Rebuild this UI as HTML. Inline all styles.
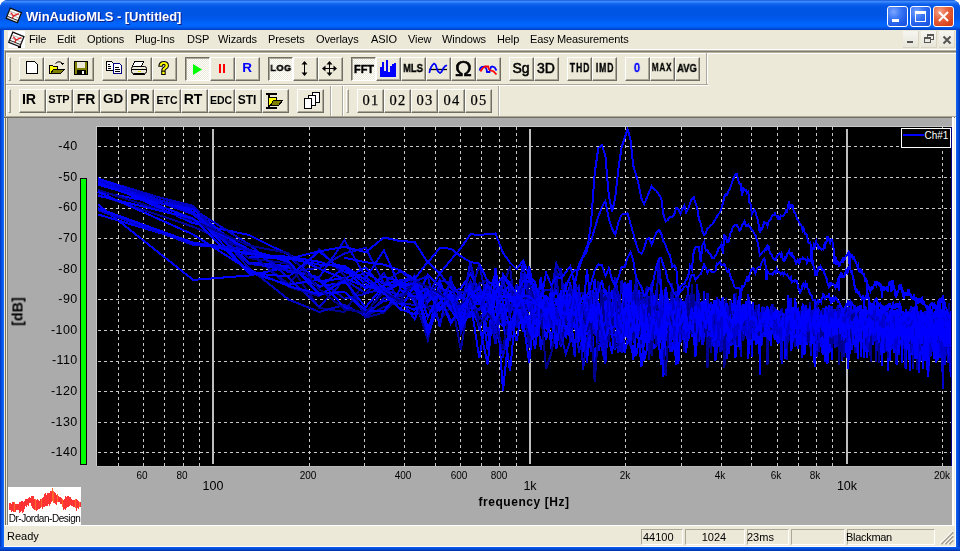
<!DOCTYPE html><html><head><meta charset="utf-8"><title>WinAudioMLS</title><style>
*{box-sizing:border-box}
div{will-change:transform}
body{margin:0;width:960px;height:551px;overflow:hidden;background:#fff;position:relative;font-family:"Liberation Sans",sans-serif;}
.a{position:absolute}
.btn{position:absolute;background:#ECE9D8;border-top:1px solid #fff;border-left:1px solid #fff;border-right:1px solid #716F64;border-bottom:1px solid #716F64;box-shadow:inset -1px -1px 0 #ACA899;}
.prs{position:absolute;border-top:1px solid #716F64;border-left:1px solid #716F64;border-right:1px solid #fff;border-bottom:1px solid #fff;box-shadow:inset 1px 1px 0 #ACA899;background-color:#F4F3EE;background-image:repeating-conic-gradient(#ECE9D8 0 25%,#FFFFFF 0 50%);background-size:2px 2px;}
.ic{position:absolute;left:0;top:0}
.mt{position:absolute;top:33px;font-size:11px;letter-spacing:-0.1px;color:#000;white-space:nowrap;line-height:13px}
.bt{position:absolute;left:0;right:0;text-align:center;font-weight:bold;color:#000;white-space:nowrap}
.yl{position:absolute;right:883px;font-size:12.5px;color:#000;line-height:12px;white-space:nowrap}
.xs{position:absolute;font-size:10px;color:#000;line-height:10px;white-space:nowrap;transform:translateX(-50%)}
.xb{position:absolute;font-size:12.5px;color:#000;line-height:12px;white-space:nowrap;transform:translateX(-50%);letter-spacing:0px}
.sp{position:absolute;top:529px;height:16px;border-top:1px solid #ACA899;border-left:1px solid #ACA899;border-right:1px solid #fff;border-bottom:1px solid #fff;font-size:11px;line-height:14px;white-space:nowrap}
</style></head><body>
<div class="a" style="left:0;top:0;width:960px;height:551px;background:#0042D6;border-radius:8px 8px 0 0;"></div>
<div class="a" style="left:0;top:24px;width:4px;height:527px;background:linear-gradient(to right,#0032B8,#0052E6 40%,#1A6CFF)"></div>
<div class="a" style="left:956px;top:24px;width:4px;height:527px;background:linear-gradient(to right,#1462F0,#0050E0 50%,#0032B0)"></div>
<div class="a" style="left:0;top:547px;width:960px;height:4px;background:linear-gradient(to bottom,#0A5AEE,#0046D0 60%,#0030A8)"></div>
<div class="a" style="left:0;top:0;width:960px;height:30px;border-radius:8px 8px 0 0;background:linear-gradient(to bottom,#0A3FC8 0px,#3D8DFF 1px,#3A8AFF 2px,#1D6EF4 3px,#0A5CEA 5px,#0055E5 8px,#0054E3 14px,#0058EC 19px,#0064FA 23px,#0066FF 25px,#0060F4 27px,#0048D0 29px,#003CC0 30px);"></div>
<svg class="a" style="left:5px;top:6px" width="18" height="18" viewBox="0 0 18 18"><g transform="rotate(22 9 9)"><rect x="3" y="4" width="12" height="9" fill="#fff" stroke="#111" stroke-width="1.3"/>
<path d="M3 13 L3 15 L15 15 L15 13" fill="#ddd" stroke="#111" stroke-width="1.2"/>
<line x1="3.5" y1="7" x2="14.5" y2="7" stroke="#aaa" stroke-width="0.8"/><line x1="3.5" y1="10" x2="14.5" y2="10" stroke="#aaa" stroke-width="0.8"/>
<path d="M5 8 L9 10 L13 6 M9 10 L8.5 13" stroke="#E02020" stroke-width="1.3" fill="none"/></g></svg>
<div class="a" style="left:26px;top:9px;font-size:13px;font-weight:bold;color:#fff;white-space:nowrap;line-height:15px;text-shadow:1px 1px 0 #0A1E8C;letter-spacing:-0.05px">WinAudioMLS - [Untitled]</div>
<div class="a" style="left:887px;top:6px;width:21px;height:21px;border:1px solid #fff;border-radius:3px;background:radial-gradient(circle at 30% 25%,#7BA6FF 0%,#3D78F5 35%,#1F5CE8 70%,#1A4FD8 100%)">
<div class="a" style="left:4px;top:12px;width:7px;height:3px;background:#fff"></div>
</div>
<div class="a" style="left:910px;top:6px;width:21px;height:21px;border:1px solid #fff;border-radius:3px;background:radial-gradient(circle at 30% 25%,#7BA6FF 0%,#3D78F5 35%,#1F5CE8 70%,#1A4FD8 100%)">
<div class="a" style="left:4px;top:4px;width:11px;height:11px;border:1px solid #fff;border-top:3px solid #fff"></div>
</div>
<div class="a" style="left:933px;top:6px;width:21px;height:21px;border:1px solid #fff;border-radius:3px;background:radial-gradient(circle at 30% 25%,#F6A38A 0%,#E7643F 40%,#D9461E 75%,#C93A14 100%)">
<svg class="a" style="left:0;top:0" width="19" height="19"><path d="M5 5 L14 14 M14 5 L5 14" stroke="#fff" stroke-width="2"/></svg>
</div>
<div class="a" style="left:4px;top:30px;width:952px;height:517px;background:#ECE9D8"></div>
<svg class="a" style="left:8px;top:31px" width="17" height="17" viewBox="0 0 17 17"><rect width="17" height="17" fill="#fff"/><g transform="translate(-0.5,-1)"><g transform="rotate(22 9 9)"><rect x="3" y="4" width="12" height="9" fill="#fff" stroke="#111" stroke-width="1.3"/>
<path d="M3 13 L3 15 L15 15 L15 13" fill="#ddd" stroke="#111" stroke-width="1.2"/>
<line x1="3.5" y1="7" x2="14.5" y2="7" stroke="#aaa" stroke-width="0.8"/><line x1="3.5" y1="10" x2="14.5" y2="10" stroke="#aaa" stroke-width="0.8"/>
<path d="M5 8 L9 10 L13 6 M9 10 L8.5 13" stroke="#E02020" stroke-width="1.3" fill="none"/></g></g><rect x="10" y="15" width="3" height="2" fill="#000"/></svg>
<div class="mt" style="left:28.6px">File</div>
<div class="mt" style="left:56.7px">Edit</div>
<div class="mt" style="left:86.9px">Options</div>
<div class="mt" style="left:135.2px">Plug-Ins</div>
<div class="mt" style="left:186.7px">DSP</div>
<div class="mt" style="left:217.9px">Wizards</div>
<div class="mt" style="left:267.9px">Presets</div>
<div class="mt" style="left:315.8px">Overlays</div>
<div class="mt" style="left:371.0px">ASIO</div>
<div class="mt" style="left:408.0px">View</div>
<div class="mt" style="left:442.1px">Windows</div>
<div class="mt" style="left:496.8px">Help</div>
<div class="mt" style="left:529.9px">Easy Measurements</div>
<div class="a" style="left:903px;top:31px;width:16px;height:17px;background:linear-gradient(#F6F5F0,#E8E6DA);border-right:1px solid #D8D5C4;border-bottom:1px solid #D8D5C4"></div>
<div class="a" style="left:907px;top:41px;width:6px;height:2px;background:#555"></div>
<div class="a" style="left:921px;top:31px;width:16px;height:17px;background:linear-gradient(#F6F5F0,#E8E6DA);border-right:1px solid #D8D5C4;border-bottom:1px solid #D8D5C4"></div>
<div class="a" style="left:927px;top:34px;width:7px;height:6px;border:1px solid #555;border-top:2px solid #555"></div>
<div class="a" style="left:924px;top:37px;width:7px;height:6px;border:1px solid #555;border-top:2px solid #555;background:#EEECE2"></div>
<div class="a" style="left:939px;top:31px;width:16px;height:17px;background:linear-gradient(#F6F5F0,#E8E6DA);border-right:1px solid #D8D5C4;border-bottom:1px solid #D8D5C4"></div>
<svg class="a" style="left:939px;top:31px" width="16" height="17"><path d="M4.5 5.5 L11.5 12.5 M11.5 5.5 L4.5 12.5" stroke="#555" stroke-width="2"/></svg>
<div class="a" style="left:4px;top:49px;width:952px;height:1px;background:#fff"></div>
<div class="a" style="left:4px;top:50px;width:952px;height:1px;background:#B5B2A4"></div>
<div class="a" style="left:4px;top:51px;width:952px;height:1px;background:#7F7C6E"></div>
<div class="a" style="left:4px;top:52px;width:952px;height:1px;background:#B5B2A4"></div>
<div class="a" style="left:6px;top:53px;width:950px;height:1px;background:#fff"></div>
<div class="a" style="left:4px;top:51px;width:1px;height:66px;background:#C8C2AE"></div>
<div class="a" style="left:5px;top:51px;width:1px;height:66px;background:#7F7C6E"></div>
<div class="a" style="left:6px;top:53px;width:1px;height:63px;background:#fff"></div>
<div class="a" style="left:6px;top:84px;width:702px;height:1px;background:#ACA899"></div>
<div class="a" style="left:6px;top:85px;width:703px;height:1px;background:#fff"></div>
<div class="a" style="left:706px;top:53px;width:1px;height:31px;background:#ACA899"></div>
<div class="a" style="left:707px;top:53px;width:1px;height:31px;background:#fff"></div>
<div class="a" style="left:330px;top:86px;width:1px;height:30px;background:#ACA899"></div>
<div class="a" style="left:331px;top:86px;width:1px;height:30px;background:#fff"></div>
<div class="a" style="left:342px;top:86px;width:1px;height:30px;background:#ACA899"></div>
<div class="a" style="left:343px;top:86px;width:1px;height:30px;background:#fff"></div>
<div class="a" style="left:498px;top:86px;width:1px;height:30px;background:#ACA899"></div>
<div class="a" style="left:499px;top:86px;width:1px;height:30px;background:#fff"></div>
<div class="a" style="left:4px;top:116px;width:952px;height:1px;background:#8F8C7E"></div>
<div class="a" style="left:4px;top:117px;width:952px;height:1px;background:#5A584E"></div>
<div class="a" style="left:8px;top:57px;width:3px;height:24px;border-left:1px solid #fff;border-top:1px solid #fff;border-right:1px solid #9D9A8C;border-bottom:1px solid #9D9A8C;background:#C9C6B8"></div>
<div class="a" style="left:8px;top:89px;width:3px;height:24px;border-left:1px solid #fff;border-top:1px solid #fff;border-right:1px solid #9D9A8C;border-bottom:1px solid #9D9A8C;background:#C9C6B8"></div>
<div class="a" style="left:346px;top:89px;width:3px;height:24px;border-left:1px solid #fff;border-top:1px solid #fff;border-right:1px solid #9D9A8C;border-bottom:1px solid #9D9A8C;background:#C9C6B8"></div>
<div class="btn" style="left:19px;top:57px;width:25px;height:24px"></div>
<div class="btn" style="left:44px;top:57px;width:25px;height:24px"></div>
<div class="btn" style="left:69px;top:57px;width:25px;height:24px"></div>
<div class="btn" style="left:102px;top:57px;width:25px;height:24px"></div>
<div class="btn" style="left:127px;top:57px;width:25px;height:24px"></div>
<div class="btn" style="left:152px;top:57px;width:25px;height:24px"></div>
<div class="prs" style="left:185px;top:57px;width:25px;height:24px"></div>
<div class="btn" style="left:210px;top:57px;width:25px;height:24px"></div>
<div class="btn" style="left:235px;top:57px;width:25px;height:24px"></div>
<div class="prs" style="left:268px;top:57px;width:25px;height:24px"></div>
<div class="btn" style="left:293px;top:57px;width:25px;height:24px"></div>
<div class="btn" style="left:318px;top:57px;width:25px;height:24px"></div>
<div class="prs" style="left:351px;top:57px;width:25px;height:24px"></div>
<div class="btn" style="left:376px;top:57px;width:25px;height:24px"></div>
<div class="btn" style="left:401px;top:57px;width:25px;height:24px"></div>
<div class="btn" style="left:426px;top:57px;width:25px;height:24px"></div>
<div class="btn" style="left:451px;top:57px;width:25px;height:24px"></div>
<div class="btn" style="left:476px;top:57px;width:25px;height:24px"></div>
<div class="btn" style="left:509px;top:57px;width:25px;height:24px"></div>
<div class="btn" style="left:534px;top:57px;width:25px;height:24px"></div>
<div class="btn" style="left:567px;top:57px;width:25px;height:24px"></div>
<div class="btn" style="left:592px;top:57px;width:25px;height:24px"></div>
<div class="btn" style="left:625px;top:57px;width:25px;height:24px"></div>
<div class="btn" style="left:650px;top:57px;width:25px;height:24px"></div>
<div class="btn" style="left:675px;top:57px;width:25px;height:24px"></div>
<div class="btn" style="left:19px;top:89px;width:27px;height:24px"></div>
<div class="btn" style="left:46px;top:89px;width:27px;height:24px"></div>
<div class="btn" style="left:73px;top:89px;width:27px;height:24px"></div>
<div class="btn" style="left:100px;top:89px;width:27px;height:24px"></div>
<div class="btn" style="left:127px;top:89px;width:27px;height:24px"></div>
<div class="btn" style="left:154px;top:89px;width:27px;height:24px"></div>
<div class="btn" style="left:181px;top:89px;width:27px;height:24px"></div>
<div class="btn" style="left:208px;top:89px;width:27px;height:24px"></div>
<div class="btn" style="left:235px;top:89px;width:27px;height:24px"></div>
<div class="btn" style="left:262px;top:89px;width:27px;height:24px"></div>
<div class="btn" style="left:297px;top:89px;width:27px;height:24px"></div>
<div class="btn" style="left:357px;top:89px;width:27px;height:24px"></div>
<div class="btn" style="left:384px;top:89px;width:27px;height:24px"></div>
<div class="btn" style="left:411px;top:89px;width:27px;height:24px"></div>
<div class="btn" style="left:438px;top:89px;width:27px;height:24px"></div>
<div class="btn" style="left:465px;top:89px;width:27px;height:24px"></div>
<svg class="a" style="left:0;top:0" width="960" height="120" viewBox="0 0 960 120" shape-rendering="crispEdges">
<path d="M26.5 61.5 H34.5 L37.5 64.5 V73.5 H26.5 Z" fill="#fff" stroke="#000"/><rect x="35" y="62" width="1" height="1" fill="#000"/>
<path d="M49.5 65.5 H52.5 L53.5 66.5 H57.5 V69.5 H64.5 L60.5 73.5 H49.5 Z" fill="#FFFF00" stroke="#000"/>
<path d="M50.5 73.5 L53.5 69.5 H64.5 L60.5 73.5 Z" fill="#808000" stroke="#000"/>
<path d="M55.5 63.5 Q59 60 62.5 63.5" fill="none" stroke="#000" shape-rendering="auto"/><path d="M61 63 H64 L62.5 65 Z" fill="#000"/>
<rect x="74.5" y="61.5" width="13" height="13" fill="#808000" stroke="#000"/><rect x="77" y="62" width="8" height="6" fill="#ECE9D8"/><rect x="77" y="70" width="9" height="5" fill="#000"/><rect x="82" y="71" width="2" height="3" fill="#fff"/>
<path d="M106.5 61.5 H111.5 L113.5 63.5 V70.5 H106.5 Z" fill="#fff" stroke="#000"/><path d="M108 64 H110 M108 66 H111 M108 68 H111" stroke="#000"/>
<path d="M113.5 63.5 H119.5 L121.5 65.5 V73.5 H113.5 Z" fill="#fff" stroke="#000080"/><path d="M115 67 H119 M115 69 H120 M115 71 H120" stroke="#000"/>
<path d="M134.5 61.5 H143.5 L141.5 66.5 H132.5 Z" fill="#fff" stroke="#000"/>
<rect x="131.5" y="66.5" width="15" height="7" rx="2" fill="#ECE9D8" stroke="#000" shape-rendering="auto"/><rect x="132" y="69" width="14" height="1" fill="#000"/><rect x="138" y="71" width="3" height="1" fill="#E0E000"/><rect x="133" y="74" width="12" height="1" fill="#000"/>
<text x="163.8" y="74.3" text-anchor="middle" font-family="Liberation Sans" font-weight="bold" font-size="16.5" fill="#FFFF00" stroke="#000" stroke-width="2.2" paint-order="stroke" shape-rendering="auto">?</text>
<path d="M193 64 L202 69.5 L193 75 Z" fill="#00FF00" shape-rendering="auto"/>
<rect x="219" y="64" width="2" height="9" fill="#FF0000"/><rect x="223" y="64" width="2" height="9" fill="#FF0000"/>
<path d="M304.5 62 V75" stroke="#000" stroke-width="1"/><path d="M301.5 64.5 L304.5 61 L307.5 64.5 Z M301.5 72.5 L304.5 76 L307.5 72.5 Z" fill="#000" shape-rendering="auto"/>
<path d="M329.5 62 V75 M323 68.5 H336" stroke="#000"/><path d="M326.5 64.5 L329.5 61 L332.5 64.5 Z M326.5 72.5 L329.5 76 L332.5 72.5 Z M325.5 65.5 L322 68.5 L325.5 71.5 Z M333.5 65.5 L337 68.5 L333.5 71.5 Z" fill="#000" shape-rendering="auto"/>
<path d="M380 77 V67 H382 V62 H384 V71 H386 V60 H388 V72 H390 V66 H392 V64 H394 V63 H396 V77 Z" fill="#0000FF"/>
<path d="M429 69.5 H447" stroke="#000" stroke-width="1.3" shape-rendering="auto"/><polyline points="429.3,73 430.2,69.5 431.2,67 432.5,65 434,63.5 435.5,64.5 436.5,67.5 437.5,70.5 438.5,72 440,73 441.5,72 442.5,70 443.5,68 445,66.2 447,65.3" fill="none" stroke="#0000FF" stroke-width="1.7" shape-rendering="auto"/>
<text x="463.3" y="75.8" text-anchor="middle" font-family="Liberation Sans" font-size="22.5" fill="#000" stroke="#000" stroke-width="0.6" shape-rendering="auto">Ω</text>
<polyline points="479.5,70.5 480.5,68 482,66.8 485.2,66.6 486.5,69.2 487,72 489.5,72 490.2,69.5 491,67 492.2,66.5 494.7,67.5 496.5,70.5" fill="none" stroke="#0000FF" stroke-width="1.8" shape-rendering="auto"/>
<polyline points="480.5,71.5 482.5,68.3 485.1,66.5 488.2,66.5 489,69.2 490.8,70.5 493.4,71.2 496.5,74.5" fill="none" stroke="#FF0000" stroke-width="1.8" shape-rendering="auto"/>
<rect x="266" y="93" width="11" height="2" fill="#000"/><rect x="266" y="107" width="11" height="2" fill="#000"/><rect x="268" y="95" width="2" height="12" fill="#000"/>
<path d="M268.5 97.5 H276.5 V100.5 H282.5 L278.5 105.5 H268.5 Z" fill="#FFFF00" stroke="#000"/><path d="M270.5 105.5 L273.5 100.5 H282.5 L278.5 105.5 Z" fill="#808000" stroke="#000"/>
<rect x="312.5" y="92.5" width="7" height="10" fill="#fff" stroke="#000"/><rect x="308.5" y="95.5" width="7" height="10" fill="#fff" stroke="#000"/><rect x="304.5" y="98.5" width="7" height="10" fill="#fff" stroke="#000" stroke-width="1"/>
</svg>
<div class="a" style="left:207.30px;top:60.57px;width:80px;text-align:center;font-family:'Liberation Sans',sans-serif;font-size:13.5px;line-height:13.5px;font-weight:bold;color:#0000FF;letter-spacing:0px;white-space:nowrap;">R</div>
<div class="a" style="left:241.00px;top:63.29px;width:80px;text-align:center;font-family:'Liberation Sans',sans-serif;font-size:9.5px;line-height:9.5px;font-weight:bold;color:#000;letter-spacing:0.6px;white-space:nowrap;transform:scaleX(0.95);-webkit-text-stroke:0.5px #000;">LOG</div>
<div class="a" style="left:323.90px;top:64.02px;width:80px;text-align:center;font-family:'Liberation Sans',sans-serif;font-size:11px;line-height:11px;font-weight:bold;color:#000;letter-spacing:0px;white-space:nowrap;-webkit-text-stroke:0.4px #000;">FFT</div>
<div class="a" style="left:372.90px;top:63.22px;width:80px;text-align:center;font-family:'Liberation Sans',sans-serif;font-size:11px;line-height:11px;font-weight:bold;color:#000;letter-spacing:0px;white-space:nowrap;transform:scaleX(0.86);-webkit-text-stroke:0.4px #000;">MLS</div>
<div class="a" style="left:480.60px;top:61.18px;width:80px;text-align:center;font-family:'Liberation Sans',sans-serif;font-size:14px;line-height:14px;font-weight:normal;color:#000;letter-spacing:0px;white-space:nowrap;-webkit-text-stroke:0.55px #000;">Sg</div>
<div class="a" style="left:506.20px;top:61.18px;width:80px;text-align:center;font-family:'Liberation Sans',sans-serif;font-size:14px;line-height:14px;font-weight:normal;color:#000;letter-spacing:0px;white-space:nowrap;-webkit-text-stroke:0.55px #000;">3D</div>
<div class="a" style="left:540.00px;top:62.34px;width:80px;text-align:center;font-family:'Liberation Sans',sans-serif;font-size:12px;line-height:12px;font-weight:bold;color:#000;letter-spacing:1.2px;white-space:nowrap;transform:scaleX(0.72);-webkit-text-stroke:0.3px #000;">THD</div>
<div class="a" style="left:564.90px;top:62.34px;width:80px;text-align:center;font-family:'Liberation Sans',sans-serif;font-size:12px;line-height:12px;font-weight:bold;color:#000;letter-spacing:1.2px;white-space:nowrap;transform:scaleX(0.72);-webkit-text-stroke:0.3px #000;">IMD</div>
<div class="a" style="left:597.10px;top:61.07px;width:80px;text-align:center;font-family:'Liberation Sans',sans-serif;font-size:13.5px;line-height:13.5px;font-weight:bold;color:#0000FF;letter-spacing:0px;white-space:nowrap;transform:scaleX(0.8);-webkit-text-stroke:0.4px #0000FF;">0</div>
<div class="a" style="left:622.30px;top:61.53px;width:80px;text-align:center;font-family:'Liberation Sans',sans-serif;font-size:11.5px;line-height:11.5px;font-weight:bold;color:#000;letter-spacing:1.0px;white-space:nowrap;transform:scaleX(0.72);-webkit-text-stroke:0.3px #000;">MAX</div>
<div class="a" style="left:646.90px;top:63.31px;width:80px;text-align:center;font-family:'Liberation Sans',sans-serif;font-size:10.5px;line-height:10.5px;font-weight:bold;color:#000;letter-spacing:0px;white-space:nowrap;transform:scaleX(0.9);-webkit-text-stroke:0.3px #000;">AVG</div>
<div class="a" style="left:-10.60px;top:92.24px;width:80px;text-align:center;font-family:'Liberation Sans',sans-serif;font-size:14.2px;line-height:14.2px;font-weight:bold;color:#000;letter-spacing:0px;white-space:nowrap;">IR</div>
<div class="a" style="left:19.00px;top:94.22px;width:80px;text-align:center;font-family:'Liberation Sans',sans-serif;font-size:11px;line-height:11px;font-weight:bold;color:#000;letter-spacing:0px;white-space:nowrap;">STP</div>
<div class="a" style="left:45.90px;top:92.28px;width:80px;text-align:center;font-family:'Liberation Sans',sans-serif;font-size:14px;line-height:14px;font-weight:bold;color:#000;letter-spacing:0px;white-space:nowrap;">FR</div>
<div class="a" style="left:73.10px;top:92.37px;width:80px;text-align:center;font-family:'Liberation Sans',sans-serif;font-size:13.5px;line-height:13.5px;font-weight:bold;color:#000;letter-spacing:0px;white-space:nowrap;">GD</div>
<div class="a" style="left:99.70px;top:92.24px;width:80px;text-align:center;font-family:'Liberation Sans',sans-serif;font-size:14.2px;line-height:14.2px;font-weight:bold;color:#000;letter-spacing:0px;white-space:nowrap;">PR</div>
<div class="a" style="left:127.20px;top:95.41px;width:80px;text-align:center;font-family:'Liberation Sans',sans-serif;font-size:10.5px;line-height:10.5px;font-weight:bold;color:#000;letter-spacing:0px;white-space:nowrap;">ETC</div>
<div class="a" style="left:153.30px;top:92.28px;width:80px;text-align:center;font-family:'Liberation Sans',sans-serif;font-size:14px;line-height:14px;font-weight:bold;color:#000;letter-spacing:0px;white-space:nowrap;">RT</div>
<div class="a" style="left:181.10px;top:95.41px;width:80px;text-align:center;font-family:'Liberation Sans',sans-serif;font-size:10.5px;line-height:10.5px;font-weight:bold;color:#000;letter-spacing:0px;white-space:nowrap;">EDC</div>
<div class="a" style="left:207.30px;top:94.34px;width:80px;text-align:center;font-family:'Liberation Sans',sans-serif;font-size:12px;line-height:12px;font-weight:bold;color:#000;letter-spacing:0px;white-space:nowrap;">STI</div>
<div class="a" style="left:331.30px;top:92.69px;width:80px;text-align:center;font-family:'Liberation Serif',serif;font-size:14.5px;line-height:14.5px;font-weight:normal;color:#000;letter-spacing:1.2px;white-space:nowrap;-webkit-text-stroke:0.25px #000;">01</div>
<div class="a" style="left:358.30px;top:92.69px;width:80px;text-align:center;font-family:'Liberation Serif',serif;font-size:14.5px;line-height:14.5px;font-weight:normal;color:#000;letter-spacing:1.2px;white-space:nowrap;-webkit-text-stroke:0.25px #000;">02</div>
<div class="a" style="left:385.30px;top:92.69px;width:80px;text-align:center;font-family:'Liberation Serif',serif;font-size:14.5px;line-height:14.5px;font-weight:normal;color:#000;letter-spacing:1.2px;white-space:nowrap;-webkit-text-stroke:0.25px #000;">03</div>
<div class="a" style="left:412.30px;top:92.69px;width:80px;text-align:center;font-family:'Liberation Serif',serif;font-size:14.5px;line-height:14.5px;font-weight:normal;color:#000;letter-spacing:1.2px;white-space:nowrap;-webkit-text-stroke:0.25px #000;">04</div>
<div class="a" style="left:439.30px;top:92.69px;width:80px;text-align:center;font-family:'Liberation Serif',serif;font-size:14.5px;line-height:14.5px;font-weight:normal;color:#000;letter-spacing:1.2px;white-space:nowrap;-webkit-text-stroke:0.25px #000;">05</div>
<div class="a" style="left:4px;top:116px;width:952px;height:1px;background:#ACA899"></div>
<div class="a" style="left:4px;top:117px;width:952px;height:1px;background:#716F64"></div>
<div class="a" style="left:5px;top:117px;width:1px;height:409px;background:#716F64"></div>
<div class="a" style="left:7px;top:118px;width:1px;height:407px;background:#808070"></div>
<div class="a" style="left:8px;top:118px;width:944px;height:407px;background:#ABABAB"></div>
<div class="a" style="left:952px;top:117px;width:2px;height:409px;background:#FFFFFF"></div>
<div class="a" style="left:4px;top:525px;width:952px;height:1px;background:#FFFFFF"></div>
<svg class="a" style="left:0;top:0" width="960" height="551" viewBox="0 0 960 551"><rect x="97" y="127" width="855" height="339" fill="#000"/><rect x="951" y="127" width="1" height="339" fill="#000080"/><rect x="96" y="126" width="856" height="1" fill="#C8C8C8"/><rect x="96" y="127" width="1" height="339" fill="#C8C8C8"/><rect x="97" y="466" width="855" height="1" fill="#B8B8B8"/><path d="M98 146.5 H951 M98 177.5 H951 M98 208.5 H951 M98 238.5 H951 M98 269.5 H951 M98 299.5 H951 M98 330.5 H951 M98 361.5 H951 M98 391.5 H951 M98 422.5 H951 M98 452.5 H951 M118.5 127 V466 M143.5 127 V466 M164.5 127 V466 M183.5 127 V466 M199.5 127 V466 M309.5 127 V466 M364.5 127 V466 M404.5 127 V466 M435.5 127 V466 M460.5 127 V466 M481.5 127 V466 M499.5 127 V466 M516.5 127 V466 M625.5 127 V466 M681.5 127 V466 M721.5 127 V466 M751.5 127 V466 M777.5 127 V466 M798.5 127 V466 M816.5 127 V466 M832.5 127 V466 M942.5 127 V466" stroke="#C8C8C8" stroke-width="1" stroke-dasharray="3 3" shape-rendering="crispEdges"/><rect x="212" y="129" width="2" height="335" fill="#BEBEBE" shape-rendering="crispEdges"/><rect x="529" y="129" width="2" height="335" fill="#BEBEBE" shape-rendering="crispEdges"/><rect x="846" y="129" width="2" height="335" fill="#BEBEBE" shape-rendering="crispEdges"/><defs><clipPath id="pc"><rect x="97" y="127" width="854" height="339"/></clipPath></defs><g clip-path="url(#pc)"><path d="M97.8 179.9 L193.2 219.5 L249.0 253.0 L288.6 284.2 L319.3 249.0 L344.4 275.5 L365.6 317.6 L383.9 312.5 L400.1 294.5 L414.6 293.4 L427.8 289.6 L439.7 308.1 L450.7 304.0 L460.9 314.1 L470.4 266.5 L479.3 300.0 L487.7 297.8 L495.5 286.1 L503.0 326.7 L510.0 281.5 L516.7 300.6 L523.1 301.7 L529.2 347.9 L535.1 293.5 L540.7 323.4 L546.1 325.4 L551.3 326.6 L556.3 268.2 L561.1 338.3 L565.8 299.8 L570.3 325.4 L574.7 315.7 L578.9 293.3 L583.0 292.7 L587.0 308.0 L590.9 298.9 L594.7 323.8 L598.3 281.1 L601.9 299.6 L605.4 332.3 L608.8 312.0 L612.1 303.6 L615.3 317.6 L618.5 310.7 L621.6 316.0 L624.6 297.1 L627.6 301.2 L630.5 322.1 L633.3 314.5 L636.1 310.4 L638.8 318.1 L641.5 309.0 L644.1 306.9 L646.7 286.2 L649.2 360.0 L651.7 315.5 L654.1 321.6 L656.5 328.7 L658.9 321.0 L661.2 311.0 L663.4 316.7 L665.7 302.5 L667.9 324.5 L670.0 309.9 L672.2 323.5 L674.3 317.8 L676.3 325.4 L678.4 322.4 L680.4 301.7 L682.4 321.8 L684.3 352.1 L686.2 317.3 L688.1 317.4 L690.0 320.4 L691.9 321.2 L693.7 330.1 L695.5 338.2 L697.3 325.5 L699.0 326.0 L700.7 339.5 L702.5 329.9 L704.1 342.4 L705.8 314.8 L707.5 341.7 L709.1 331.2 L710.7 310.9 L712.3 342.5 L713.9 346.7 L715.4 334.0 L716.9 309.7 L718.5 318.5 L720.0 351.6 L721.5 328.4 L722.9 320.1 L724.4 338.3 L725.8 355.7 L727.3 324.1 L728.7 327.2 L730.1 327.0 L731.4 330.3 L732.8 324.6 L734.2 327.0 L735.5 304.4 L736.8 331.6 L738.2 323.6 L739.5 316.9 L740.8 313.0 L742.0 333.6 L743.3 316.8 L744.6 312.9 L745.8 332.8 L747.0 315.3 L748.3 308.3 L749.5 343.5 L750.7 304.2 L751.9 318.5 L753.0 328.9 L754.2 340.9 L755.4 324.1 L756.5 321.7 L757.7 320.7 L758.8 320.4 L759.9 331.0 L761.0 331.5 L762.1 324.8 L763.2 327.8 L764.3 313.4 L765.4 322.2 L766.5 323.9 L767.5 315.5 L768.6 333.2 L769.6 331.9 L770.7 320.3 L771.7 325.1 L772.7 317.3 L773.8 317.1 L774.8 330.6 L775.8 316.4 L776.8 315.5 L777.7 326.5 L778.7 326.1 L779.7 337.6 L780.7 320.0 L781.6 307.8 L782.6 337.0 L783.5 327.0 L784.5 319.6 L785.4 329.6 L786.3 336.5 L787.2 360.2 L788.1 311.5 L789.1 318.8 L790.0 323.3 L790.9 328.4 L791.7 326.8 L792.6 338.9 L793.5 343.1 L794.4 323.7 L795.2 330.8 L796.1 325.7 L797.0 339.3 L797.8 326.8 L798.7 335.6 L799.5 314.8 L800.3 313.0 L801.2 341.2 L802.0 322.1 L802.8 316.0 L803.6 305.2 L804.5 321.6 L805.3 322.1 L806.1 334.6 L806.9 316.6 L807.7 321.5 L808.4 320.0 L809.2 328.2 L810.0 338.3 L810.8 319.8 L811.5 327.6 L812.3 321.1 L813.1 333.5 L813.8 316.0 L814.6 328.3 L815.3 332.0 L816.1 316.0 L816.8 318.3 L817.6 325.9 L818.3 320.9 L819.0 331.6 L819.8 320.5 L820.5 323.0 L821.2 315.8 L821.9 319.9 L822.6 334.7 L823.3 327.1 L824.0 340.2 L824.7 333.2 L825.4 310.5 L826.1 323.3 L826.8 329.1 L827.5 326.7 L828.2 323.1 L828.9 325.6 L829.5 330.5 L830.2 321.6 L830.9 326.1 L831.5 323.0 L832.2 327.5 L832.9 338.5 L833.5 327.1 L834.2 325.3 L834.8 325.6 L835.5 330.9 L836.1 328.8 L836.8 314.6 L837.4 346.8 L838.0 309.7 L838.7 320.0 L839.3 331.2 L839.9 319.7 L840.5 328.3 L841.2 328.1 L841.8 323.8 L842.4 319.8 L843.0 325.9 L843.6 357.3 L844.2 323.7 L844.8 338.9 L845.4 336.1 L846.0 321.8 L846.6 325.7 L847.2 333.3 L847.8 325.2 L848.4 341.5 L849.0 319.1 L849.6 335.8 L850.2 337.9 L850.7 320.9 L851.3 328.8 L851.9 327.5 L852.5 331.6 L853.0 331.6 L853.6 333.6 L854.2 318.1 L854.7 352.8 L855.3 306.8 L855.9 353.4 L856.4 349.0 L857.0 328.0 L857.5 319.9 L858.1 330.1 L858.6 325.2 L859.2 336.3 L859.7 330.5 L860.2 316.8 L860.8 328.0 L861.3 338.2 L861.8 335.1 L862.4 323.0 L862.9 320.4 L863.4 329.7 L864.0 329.4 L864.5 337.8 L865.0 329.4 L865.5 333.2 L866.0 335.8 L866.6 328.0 L867.1 326.4 L867.6 320.5 L868.1 317.0 L868.6 327.7 L869.1 330.1 L869.6 312.8 L870.1 320.2 L870.6 322.0 L871.1 328.6 L871.6 329.1 L872.1 336.1 L872.6 330.6 L873.1 329.9 L873.6 326.9 L874.1 325.2 L874.6 338.3 L875.1 323.6 L875.5 334.6 L876.0 331.6 L876.5 308.7 L877.0 327.9 L877.5 315.4 L877.9 317.0 L878.4 331.5 L878.9 322.9 L879.3 336.7 L879.8 333.5 L880.3 327.5 L880.8 306.2 L881.2 325.0 L881.7 326.9 L882.1 330.1 L882.6 330.1 L883.1 317.8 L883.5 321.7 L884.0 333.7 L884.4 321.4 L884.9 328.1 L885.3 342.2 L885.8 323.7 L886.2 337.6 L886.7 332.8 L887.1 324.9 L887.6 340.7 L888.0 346.5 L888.4 328.0 L888.9 344.8 L889.3 314.8 L889.7 318.6 L890.2 335.7 L890.6 331.0 L891.0 327.1 L891.5 330.6 L891.9 321.9 L892.3 324.4 L892.8 328.4 L893.2 323.4 L893.6 330.1 L894.0 324.7 L894.5 311.8 L894.9 336.5 L895.3 325.4 L895.7 333.7 L896.1 312.7 L896.5 334.0 L897.0 332.4 L897.4 322.1 L897.8 324.2 L898.2 318.3 L898.6 322.5 L899.0 336.0 L899.4 347.9 L899.8 331.8 L900.2 345.7 L900.6 335.8 L901.0 318.7 L901.4 323.8 L901.8 316.7 L902.2 321.4 L902.6 330.4 L903.0 330.7 L903.4 327.4 L903.8 322.1 L904.2 326.8 L904.6 335.2 L905.0 331.7 L905.4 335.4 L905.8 332.0 L906.1 343.9 L906.5 335.0 L906.9 340.5 L907.3 312.8 L907.7 339.9 L908.1 331.0 L908.4 340.9 L908.8 319.9 L909.2 317.5 L909.6 325.0 L910.0 323.0 L910.3 324.9 L910.7 328.0 L911.1 335.4 L911.5 338.1 L911.8 337.3 L912.2 324.9 L912.6 323.7 L912.9 324.4 L913.3 329.6 L913.7 337.6 L914.0 328.4 L914.4 322.9 L914.8 341.0 L915.1 331.7 L915.5 314.6 L915.8 338.5 L916.2 319.0 L916.6 329.9 L916.9 314.5 L917.3 332.0 L917.6 333.6 L918.0 328.1 L918.3 327.4 L918.7 326.4 L919.0 324.0 L919.4 339.1 L919.7 323.8 L920.1 321.9 L920.4 338.3 L920.8 328.6 L921.1 331.8 L921.5 360.8 L921.8 319.4 L922.2 339.2 L922.5 328.2 L922.9 330.9 L923.2 317.7 L923.5 330.3 L923.9 325.5 L924.2 335.2 L924.6 325.1 L924.9 332.1 L925.2 319.6 L925.6 315.4 L925.9 321.7 L926.2 324.5 L926.6 334.9 L926.9 318.5 L927.2 346.9 L927.6 322.7 L927.9 320.1 L928.2 326.9 L928.6 371.8 L928.9 330.8 L929.2 324.6 L929.5 317.3 L929.9 333.7 L930.2 329.1 L930.5 330.4 L930.8 332.6 L931.2 336.3 L931.5 311.3 L931.8 334.5 L932.1 315.0 L932.4 317.9 L932.8 321.0 L933.1 339.4 L933.4 319.1 L933.7 326.8 L934.0 323.0 L934.3 312.0 L934.7 319.9 L935.0 335.3 L935.3 337.9 L935.6 353.4 L935.9 320.6 L936.2 314.0 L936.5 329.0 L936.8 320.6 L937.2 326.7 L937.5 321.6 L937.8 322.8 L938.1 322.7 L938.4 336.8 L938.7 319.5 L939.0 333.0 L939.3 319.8 L939.6 318.0 L939.9 330.6 L940.2 341.6 L940.5 331.0 L940.8 331.1 L941.1 337.9 L941.4 332.9 L941.7 332.9 L942.0 320.9 L942.3 316.5 L942.6 315.0 L942.9 333.0 L943.2 329.7 L943.5 323.2 L943.8 336.9 L944.1 331.4 L944.4 311.6 L944.7 325.1 L944.9 331.7 L945.2 322.7 L945.5 326.5 L945.8 331.0 L946.1 332.9 L946.4 335.0 L946.7 337.6 L947.0 331.6 L947.3 326.6 L947.5 323.2 L947.8 319.2 L948.1 332.8 L948.4 317.9 L948.7 315.5 L949.0 312.1 L949.3 336.5 L949.5 321.8 L949.8 327.3 L950.1 336.2 L950.4 322.6 L950.7 333.6 L950.9 319.7 L951.2 332.7 L951.5 321.9 L951.8 331.2 L952.1 317.4 L952.3 334.7 L952.6 330.9 L952.9 317.7 L953.2 336.0 L953.4 324.5 L953.7 330.6 L954.0 336.2 L954.2 331.9 L954.5 324.0 L954.8 316.3 L955.1 329.8 L955.3 325.6 L955.6 332.5 L955.9 324.5" fill="none" stroke="#0000A0" stroke-width="2" stroke-linejoin="miter" shape-rendering="crispEdges"/><path d="M97.8 180.3 L193.2 223.2 L249.0 235.0 L288.6 254.6 L319.3 268.7 L344.4 279.0 L365.6 267.1 L383.9 289.8 L400.1 284.6 L414.6 282.7 L427.8 294.5 L439.7 298.6 L450.7 292.6 L460.9 288.2 L470.4 274.0 L479.3 290.5 L487.7 296.9 L495.5 273.0 L503.0 321.6 L510.0 316.0 L516.7 341.2 L523.1 302.3 L529.2 291.5 L535.1 300.7 L540.7 294.8 L546.1 323.3 L551.3 288.2 L556.3 304.2 L561.1 292.0 L565.8 310.2 L570.3 282.5 L574.7 325.4 L578.9 325.6 L583.0 309.1 L587.0 293.9 L590.9 312.5 L594.7 279.5 L598.3 316.4 L601.9 309.5 L605.4 289.2 L608.8 302.8 L612.1 290.0 L615.3 314.4 L618.5 315.4 L621.6 317.9 L624.6 324.3 L627.6 308.7 L630.5 343.2 L633.3 312.4 L636.1 298.1 L638.8 291.7 L641.5 305.4 L644.1 333.8 L646.7 319.5 L649.2 309.4 L651.7 292.5 L654.1 306.8 L656.5 305.3 L658.9 341.9 L661.2 324.9 L663.4 306.5 L665.7 287.0 L667.9 300.5 L670.0 310.7 L672.2 322.5 L674.3 303.2 L676.3 311.2 L678.4 315.9 L680.4 298.4 L682.4 310.6 L684.3 307.1 L686.2 305.3 L688.1 334.2 L690.0 321.6 L691.9 310.2 L693.7 336.4 L695.5 315.6 L697.3 335.4 L699.0 312.2 L700.7 312.9 L702.5 321.9 L704.1 322.2 L705.8 316.4 L707.5 317.2 L709.1 336.6 L710.7 326.8 L712.3 322.0 L713.9 326.0 L715.4 312.6 L716.9 309.7 L718.5 317.7 L720.0 329.4 L721.5 307.5 L722.9 312.3 L724.4 328.6 L725.8 334.3 L727.3 309.7 L728.7 316.7 L730.1 310.6 L731.4 319.8 L732.8 311.7 L734.2 308.0 L735.5 323.4 L736.8 325.8 L738.2 320.7 L739.5 323.7 L740.8 321.8 L742.0 340.3 L743.3 310.9 L744.6 327.6 L745.8 320.3 L747.0 323.1 L748.3 359.2 L749.5 327.7 L750.7 322.6 L751.9 323.8 L753.0 335.9 L754.2 325.1 L755.4 322.8 L756.5 318.1 L757.7 323.9 L758.8 316.7 L759.9 315.5 L761.0 327.9 L762.1 329.6 L763.2 327.5 L764.3 333.8 L765.4 324.6 L766.5 319.0 L767.5 323.9 L768.6 325.3 L769.6 317.9 L770.7 346.0 L771.7 321.0 L772.7 328.5 L773.8 310.8 L774.8 330.2 L775.8 319.0 L776.8 321.6 L777.7 331.0 L778.7 321.4 L779.7 321.8 L780.7 319.5 L781.6 329.0 L782.6 331.0 L783.5 330.0 L784.5 324.1 L785.4 359.2 L786.3 330.1 L787.2 319.0 L788.1 323.3 L789.1 333.7 L790.0 330.7 L790.9 319.3 L791.7 325.3 L792.6 327.2 L793.5 315.1 L794.4 340.7 L795.2 339.1 L796.1 314.2 L797.0 331.2 L797.8 333.2 L798.7 322.3 L799.5 321.1 L800.3 331.7 L801.2 320.6 L802.0 319.8 L802.8 322.4 L803.6 327.3 L804.5 354.6 L805.3 331.8 L806.1 326.2 L806.9 317.9 L807.7 333.8 L808.4 333.7 L809.2 330.4 L810.0 320.8 L810.8 329.4 L811.5 338.4 L812.3 324.9 L813.1 331.0 L813.8 333.7 L814.6 329.9 L815.3 332.5 L816.1 328.2 L816.8 323.0 L817.6 318.8 L818.3 323.9 L819.0 325.6 L819.8 339.7 L820.5 323.2 L821.2 316.9 L821.9 338.7 L822.6 340.9 L823.3 327.9 L824.0 327.4 L824.7 315.1 L825.4 326.4 L826.1 342.0 L826.8 337.9 L827.5 321.6 L828.2 326.1 L828.9 331.1 L829.5 353.4 L830.2 322.6 L830.9 323.4 L831.5 328.2 L832.2 332.7 L832.9 333.2 L833.5 316.0 L834.2 323.9 L834.8 330.3 L835.5 315.5 L836.1 328.4 L836.8 326.1 L837.4 332.2 L838.0 322.9 L838.7 329.3 L839.3 320.2 L839.9 320.2 L840.5 328.6 L841.2 326.4 L841.8 331.9 L842.4 322.4 L843.0 330.1 L843.6 328.5 L844.2 326.5 L844.8 332.2 L845.4 332.2 L846.0 331.8 L846.6 323.5 L847.2 322.8 L847.8 332.0 L848.4 354.0 L849.0 325.2 L849.6 335.8 L850.2 327.2 L850.7 318.9 L851.3 324.6 L851.9 331.1 L852.5 310.2 L853.0 341.6 L853.6 323.0 L854.2 323.5 L854.7 327.3 L855.3 336.2 L855.9 318.2 L856.4 322.9 L857.0 352.9 L857.5 323.1 L858.1 340.7 L858.6 323.4 L859.2 341.7 L859.7 313.1 L860.2 317.1 L860.8 354.6 L861.3 311.4 L861.8 333.8 L862.4 323.5 L862.9 335.4 L863.4 320.0 L864.0 322.7 L864.5 332.0 L865.0 328.6 L865.5 333.6 L866.0 330.3 L866.6 332.6 L867.1 357.7 L867.6 321.8 L868.1 332.5 L868.6 319.8 L869.1 323.4 L869.6 333.0 L870.1 320.3 L870.6 329.0 L871.1 338.4 L871.6 321.9 L872.1 336.6 L872.6 345.1 L873.1 342.8 L873.6 310.4 L874.1 336.4 L874.6 320.9 L875.1 317.0 L875.5 338.3 L876.0 331.9 L876.5 330.1 L877.0 339.4 L877.5 325.3 L877.9 327.3 L878.4 318.3 L878.9 318.0 L879.3 326.4 L879.8 343.3 L880.3 338.5 L880.8 316.1 L881.2 329.2 L881.7 320.9 L882.1 329.2 L882.6 319.8 L883.1 329.2 L883.5 339.3 L884.0 343.2 L884.4 353.0 L884.9 330.5 L885.3 330.1 L885.8 334.4 L886.2 343.7 L886.7 332.2 L887.1 330.6 L887.6 331.1 L888.0 334.4 L888.4 328.4 L888.9 327.5 L889.3 338.4 L889.7 324.6 L890.2 322.9 L890.6 337.5 L891.0 316.2 L891.5 325.7 L891.9 321.9 L892.3 326.4 L892.8 330.6 L893.2 339.6 L893.6 340.2 L894.0 353.4 L894.5 336.0 L894.9 333.1 L895.3 333.4 L895.7 327.2 L896.1 325.3 L896.5 326.3 L897.0 326.2 L897.4 332.1 L897.8 325.0 L898.2 329.6 L898.6 336.2 L899.0 322.4 L899.4 320.4 L899.8 336.1 L900.2 324.4 L900.6 335.8 L901.0 319.2 L901.4 332.4 L901.8 313.9 L902.2 332.8 L902.6 336.6 L903.0 329.5 L903.4 339.4 L903.8 334.5 L904.2 326.1 L904.6 332.3 L905.0 317.8 L905.4 332.6 L905.8 327.0 L906.1 335.3 L906.5 325.8 L906.9 337.3 L907.3 334.4 L907.7 323.0 L908.1 325.3 L908.4 332.6 L908.8 335.3 L909.2 318.5 L909.6 327.6 L910.0 335.7 L910.3 327.8 L910.7 308.7 L911.1 333.1 L911.5 324.0 L911.8 339.0 L912.2 321.5 L912.6 325.8 L912.9 324.7 L913.3 306.6 L913.7 324.5 L914.0 323.3 L914.4 323.8 L914.8 319.7 L915.1 329.6 L915.5 315.4 L915.8 356.3 L916.2 323.5 L916.6 328.0 L916.9 330.4 L917.3 333.0 L917.6 330.2 L918.0 333.3 L918.3 329.6 L918.7 321.6 L919.0 324.6 L919.4 329.3 L919.7 321.5 L920.1 338.8 L920.4 326.5 L920.8 317.6 L921.1 320.4 L921.5 337.2 L921.8 330.7 L922.2 337.8 L922.5 331.3 L922.9 330.7 L923.2 341.5 L923.5 325.9 L923.9 328.9 L924.2 338.8 L924.6 341.1 L924.9 324.3 L925.2 326.7 L925.6 333.8 L925.9 321.8 L926.2 320.2 L926.6 332.8 L926.9 334.7 L927.2 325.6 L927.6 335.1 L927.9 323.6 L928.2 337.2 L928.6 326.1 L928.9 320.9 L929.2 326.1 L929.5 329.0 L929.9 326.2 L930.2 335.2 L930.5 329.1 L930.8 321.9 L931.2 356.0 L931.5 322.6 L931.8 331.5 L932.1 333.0 L932.4 319.7 L932.8 338.9 L933.1 329.6 L933.4 324.8 L933.7 326.5 L934.0 343.3 L934.3 322.9 L934.7 331.1 L935.0 332.7 L935.3 332.9 L935.6 323.9 L935.9 331.4 L936.2 331.8 L936.5 336.6 L936.8 336.6 L937.2 312.1 L937.5 327.3 L937.8 317.3 L938.1 329.4 L938.4 312.9 L938.7 331.6 L939.0 341.7 L939.3 325.2 L939.6 333.4 L939.9 328.4 L940.2 326.4 L940.5 328.2 L940.8 333.5 L941.1 331.0 L941.4 320.5 L941.7 332.7 L942.0 338.1 L942.3 325.1 L942.6 323.8 L942.9 336.1 L943.2 338.2 L943.5 322.0 L943.8 332.7 L944.1 337.0 L944.4 330.2 L944.7 334.6 L944.9 332.6 L945.2 326.2 L945.5 337.5 L945.8 330.9 L946.1 336.4 L946.4 322.1 L946.7 335.6 L947.0 319.6 L947.3 331.2 L947.5 339.9 L947.8 326.6 L948.1 336.7 L948.4 337.3 L948.7 336.6 L949.0 338.5 L949.3 327.6 L949.5 324.8 L949.8 326.1 L950.1 333.2 L950.4 339.5 L950.7 319.2 L950.9 314.8 L951.2 319.1 L951.5 322.4 L951.8 340.3 L952.1 332.4 L952.3 344.4 L952.6 338.2 L952.9 342.5 L953.2 316.0 L953.4 322.4 L953.7 339.8 L954.0 320.7 L954.2 328.9 L954.5 330.2 L954.8 326.1 L955.1 331.5 L955.3 324.2 L955.6 322.1 L955.9 317.4" fill="none" stroke="#0000FF" stroke-width="2" stroke-linejoin="miter" shape-rendering="crispEdges"/><path d="M97.8 178.6 L193.2 207.8 L249.0 264.0 L288.6 267.8 L319.3 279.4 L344.4 298.7 L365.6 293.8 L383.9 272.9 L400.1 303.1 L414.6 305.0 L427.8 306.7 L439.7 304.2 L450.7 299.6 L460.9 306.8 L470.4 281.1 L479.3 298.8 L487.7 284.9 L495.5 326.4 L503.0 313.9 L510.0 305.3 L516.7 314.8 L523.1 303.7 L529.2 310.7 L535.1 303.4 L540.7 282.9 L546.1 308.0 L551.3 317.9 L556.3 282.1 L561.1 268.3 L565.8 316.7 L570.3 285.6 L574.7 302.6 L578.9 322.8 L583.0 320.4 L587.0 362.6 L590.9 310.6 L594.7 334.7 L598.3 306.7 L601.9 326.8 L605.4 308.5 L608.8 300.1 L612.1 306.1 L615.3 298.3 L618.5 319.8 L621.6 280.5 L624.6 304.0 L627.6 319.9 L630.5 309.3 L633.3 304.6 L636.1 278.3 L638.8 308.8 L641.5 292.6 L644.1 307.7 L646.7 289.4 L649.2 310.9 L651.7 282.4 L654.1 314.6 L656.5 299.7 L658.9 307.3 L661.2 327.8 L663.4 311.9 L665.7 303.4 L667.9 321.2 L670.0 304.5 L672.2 318.7 L674.3 309.4 L676.3 325.8 L678.4 295.8 L680.4 331.7 L682.4 326.2 L684.3 301.2 L686.2 314.5 L688.1 310.3 L690.0 319.6 L691.9 290.2 L693.7 323.5 L695.5 305.6 L697.3 303.2 L699.0 306.3 L700.7 305.1 L702.5 306.4 L704.1 322.3 L705.8 322.5 L707.5 293.2 L709.1 321.2 L710.7 316.6 L712.3 310.2 L713.9 310.8 L715.4 319.2 L716.9 333.3 L718.5 319.9 L720.0 316.8 L721.5 310.2 L722.9 326.9 L724.4 329.3 L725.8 325.3 L727.3 335.2 L728.7 318.8 L730.1 313.8 L731.4 331.5 L732.8 325.4 L734.2 321.2 L735.5 341.4 L736.8 330.0 L738.2 337.5 L739.5 323.8 L740.8 316.1 L742.0 323.5 L743.3 331.0 L744.6 330.6 L745.8 328.3 L747.0 317.2 L748.3 335.0 L749.5 319.8 L750.7 320.0 L751.9 329.1 L753.0 321.9 L754.2 329.2 L755.4 327.0 L756.5 320.5 L757.7 330.0 L758.8 328.1 L759.9 315.0 L761.0 318.2 L762.1 344.5 L763.2 325.2 L764.3 315.8 L765.4 325.4 L766.5 331.6 L767.5 332.1 L768.6 336.9 L769.6 324.1 L770.7 328.5 L771.7 324.2 L772.7 318.6 L773.8 337.6 L774.8 333.5 L775.8 325.5 L776.8 334.0 L777.7 324.7 L778.7 332.2 L779.7 325.3 L780.7 318.2 L781.6 337.1 L782.6 330.5 L783.5 337.6 L784.5 323.6 L785.4 329.6 L786.3 349.2 L787.2 307.9 L788.1 322.3 L789.1 335.1 L790.0 326.7 L790.9 327.1 L791.7 309.5 L792.6 326.6 L793.5 329.3 L794.4 337.0 L795.2 316.2 L796.1 316.1 L797.0 323.2 L797.8 338.1 L798.7 314.5 L799.5 328.6 L800.3 325.7 L801.2 323.4 L802.0 323.2 L802.8 313.7 L803.6 331.3 L804.5 325.3 L805.3 331.6 L806.1 334.0 L806.9 309.5 L807.7 332.0 L808.4 338.9 L809.2 337.9 L810.0 326.2 L810.8 315.4 L811.5 318.4 L812.3 331.7 L813.1 324.5 L813.8 319.4 L814.6 325.8 L815.3 321.9 L816.1 342.8 L816.8 327.5 L817.6 329.0 L818.3 321.3 L819.0 318.5 L819.8 318.7 L820.5 334.6 L821.2 328.0 L821.9 324.4 L822.6 314.7 L823.3 319.4 L824.0 312.1 L824.7 330.0 L825.4 326.1 L826.1 329.7 L826.8 312.3 L827.5 332.0 L828.2 322.0 L828.9 308.8 L829.5 328.6 L830.2 325.5 L830.9 312.4 L831.5 333.0 L832.2 319.6 L832.9 330.9 L833.5 333.4 L834.2 325.0 L834.8 327.9 L835.5 321.0 L836.1 323.7 L836.8 309.0 L837.4 312.3 L838.0 329.6 L838.7 327.4 L839.3 325.7 L839.9 318.8 L840.5 330.4 L841.2 319.8 L841.8 320.8 L842.4 335.5 L843.0 331.6 L843.6 320.6 L844.2 329.3 L844.8 320.4 L845.4 339.3 L846.0 321.2 L846.6 307.0 L847.2 336.3 L847.8 329.8 L848.4 334.9 L849.0 313.3 L849.6 327.4 L850.2 327.1 L850.7 328.6 L851.3 317.2 L851.9 347.5 L852.5 323.6 L853.0 330.2 L853.6 343.9 L854.2 309.9 L854.7 315.0 L855.3 320.8 L855.9 332.5 L856.4 318.1 L857.0 324.8 L857.5 334.7 L858.1 333.6 L858.6 328.4 L859.2 323.5 L859.7 331.5 L860.2 326.5 L860.8 315.2 L861.3 319.7 L861.8 315.8 L862.4 328.5 L862.9 311.7 L863.4 331.9 L864.0 330.5 L864.5 342.5 L865.0 333.4 L865.5 319.7 L866.0 322.5 L866.6 322.0 L867.1 332.2 L867.6 327.3 L868.1 326.1 L868.6 321.8 L869.1 320.5 L869.6 325.8 L870.1 321.1 L870.6 322.5 L871.1 338.0 L871.6 326.6 L872.1 327.8 L872.6 323.2 L873.1 314.6 L873.6 322.3 L874.1 329.9 L874.6 339.3 L875.1 321.3 L875.5 320.9 L876.0 326.8 L876.5 314.9 L877.0 310.5 L877.5 339.6 L877.9 320.6 L878.4 323.2 L878.9 320.4 L879.3 315.2 L879.8 337.2 L880.3 325.2 L880.8 314.8 L881.2 313.3 L881.7 321.3 L882.1 325.1 L882.6 325.7 L883.1 339.4 L883.5 336.1 L884.0 315.4 L884.4 325.6 L884.9 333.1 L885.3 337.5 L885.8 329.7 L886.2 317.8 L886.7 327.3 L887.1 340.9 L887.6 332.5 L888.0 330.8 L888.4 336.5 L888.9 325.8 L889.3 327.4 L889.7 338.3 L890.2 335.6 L890.6 327.8 L891.0 337.0 L891.5 326.0 L891.9 343.2 L892.3 331.3 L892.8 324.9 L893.2 338.2 L893.6 318.2 L894.0 338.8 L894.5 328.4 L894.9 336.6 L895.3 310.9 L895.7 344.3 L896.1 323.1 L896.5 325.7 L897.0 334.9 L897.4 329.0 L897.8 325.4 L898.2 344.5 L898.6 336.9 L899.0 321.5 L899.4 321.0 L899.8 331.6 L900.2 332.7 L900.6 331.0 L901.0 331.2 L901.4 333.5 L901.8 334.0 L902.2 337.9 L902.6 331.8 L903.0 333.3 L903.4 338.6 L903.8 312.3 L904.2 332.9 L904.6 333.6 L905.0 328.9 L905.4 331.7 L905.8 342.1 L906.1 325.2 L906.5 322.7 L906.9 331.0 L907.3 324.9 L907.7 319.4 L908.1 319.9 L908.4 326.7 L908.8 329.6 L909.2 317.3 L909.6 323.9 L910.0 330.7 L910.3 330.9 L910.7 332.1 L911.1 333.3 L911.5 315.4 L911.8 334.9 L912.2 339.2 L912.6 332.4 L912.9 329.7 L913.3 368.5 L913.7 330.3 L914.0 332.0 L914.4 326.1 L914.8 326.2 L915.1 321.8 L915.5 335.2 L915.8 332.3 L916.2 316.6 L916.6 322.9 L916.9 344.6 L917.3 327.2 L917.6 329.4 L918.0 342.5 L918.3 327.6 L918.7 360.4 L919.0 332.8 L919.4 328.2 L919.7 344.1 L920.1 340.6 L920.4 331.6 L920.8 325.7 L921.1 333.5 L921.5 334.2 L921.8 333.7 L922.2 327.6 L922.5 337.3 L922.9 325.1 L923.2 362.3 L923.5 324.3 L923.9 338.3 L924.2 324.9 L924.6 339.8 L924.9 322.9 L925.2 329.1 L925.6 332.2 L925.9 331.0 L926.2 344.4 L926.6 328.1 L926.9 324.1 L927.2 314.9 L927.6 317.3 L927.9 337.9 L928.2 323.3 L928.6 345.5 L928.9 338.8 L929.2 342.1 L929.5 347.5 L929.9 335.1 L930.2 333.0 L930.5 335.7 L930.8 335.9 L931.2 328.5 L931.5 323.7 L931.8 332.1 L932.1 324.3 L932.4 328.6 L932.8 335.8 L933.1 351.6 L933.4 331.7 L933.7 320.8 L934.0 332.3 L934.3 330.8 L934.7 323.1 L935.0 324.5 L935.3 335.0 L935.6 336.7 L935.9 320.3 L936.2 324.2 L936.5 321.1 L936.8 335.4 L937.2 335.1 L937.5 327.0 L937.8 320.8 L938.1 329.5 L938.4 332.7 L938.7 346.0 L939.0 328.6 L939.3 327.7 L939.6 338.1 L939.9 343.0 L940.2 331.4 L940.5 336.3 L940.8 333.2 L941.1 334.6 L941.4 329.2 L941.7 325.2 L942.0 339.0 L942.3 341.7 L942.6 351.2 L942.9 362.3 L943.2 339.0 L943.5 340.0 L943.8 338.1 L944.1 325.6 L944.4 325.0 L944.7 331.1 L944.9 338.9 L945.2 330.2 L945.5 340.0 L945.8 339.9 L946.1 327.6 L946.4 325.5 L946.7 330.7 L947.0 330.4 L947.3 329.4 L947.5 332.3 L947.8 341.3 L948.1 362.9 L948.4 336.5 L948.7 330.3 L949.0 330.1 L949.3 322.6 L949.5 328.7 L949.8 335.2 L950.1 334.8 L950.4 325.0 L950.7 322.8 L950.9 338.3 L951.2 340.4 L951.5 332.7 L951.8 331.2 L952.1 338.8 L952.3 317.3 L952.6 317.9 L952.9 325.8 L953.2 338.8 L953.4 322.5 L953.7 324.8 L954.0 331.3 L954.2 319.1 L954.5 338.4 L954.8 335.6 L955.1 329.5 L955.3 337.9 L955.6 326.9 L955.9 337.5" fill="none" stroke="#0000C0" stroke-width="2" stroke-linejoin="miter" shape-rendering="crispEdges"/><path d="M97.8 178.3 L193.2 211.9 L249.0 262.6 L288.6 266.2 L319.3 287.9 L344.4 267.2 L365.6 283.9 L383.9 293.8 L400.1 282.6 L414.6 302.3 L427.8 274.5 L439.7 286.5 L450.7 302.2 L460.9 297.5 L470.4 288.3 L479.3 301.6 L487.7 281.6 L495.5 320.8 L503.0 325.7 L510.0 298.6 L516.7 312.0 L523.1 311.7 L529.2 299.3 L535.1 335.3 L540.7 277.5 L546.1 310.9 L551.3 297.6 L556.3 326.1 L561.1 332.3 L565.8 313.4 L570.3 308.8 L574.7 298.5 L578.9 318.1 L583.0 324.3 L587.0 321.6 L590.9 325.9 L594.7 322.5 L598.3 292.9 L601.9 280.5 L605.4 297.2 L608.8 331.2 L612.1 320.9 L615.3 348.5 L618.5 342.6 L621.6 318.3 L624.6 352.5 L627.6 340.0 L630.5 325.9 L633.3 325.0 L636.1 334.1 L638.8 313.9 L641.5 332.6 L644.1 303.9 L646.7 327.6 L649.2 328.3 L651.7 323.6 L654.1 330.8 L656.5 344.0 L658.9 337.8 L661.2 322.7 L663.4 312.8 L665.7 321.1 L667.9 322.2 L670.0 327.3 L672.2 326.8 L674.3 331.6 L676.3 321.0 L678.4 316.9 L680.4 307.2 L682.4 324.1 L684.3 319.7 L686.2 304.2 L688.1 340.8 L690.0 330.6 L691.9 318.2 L693.7 323.0 L695.5 337.2 L697.3 333.5 L699.0 315.6 L700.7 331.4 L702.5 311.7 L704.1 332.5 L705.8 317.6 L707.5 347.7 L709.1 312.5 L710.7 328.3 L712.3 314.6 L713.9 341.1 L715.4 334.7 L716.9 322.3 L718.5 322.5 L720.0 326.5 L721.5 341.5 L722.9 330.4 L724.4 307.3 L725.8 332.3 L727.3 320.3 L728.7 324.4 L730.1 304.9 L731.4 300.4 L732.8 328.7 L734.2 317.4 L735.5 306.1 L736.8 339.7 L738.2 316.0 L739.5 307.3 L740.8 333.6 L742.0 324.0 L743.3 314.7 L744.6 336.2 L745.8 331.6 L747.0 323.0 L748.3 330.1 L749.5 313.1 L750.7 318.9 L751.9 357.2 L753.0 324.6 L754.2 330.2 L755.4 321.3 L756.5 323.8 L757.7 338.8 L758.8 304.3 L759.9 319.6 L761.0 323.5 L762.1 322.0 L763.2 330.8 L764.3 325.0 L765.4 336.3 L766.5 322.0 L767.5 323.5 L768.6 333.6 L769.6 330.3 L770.7 326.3 L771.7 309.2 L772.7 317.5 L773.8 319.6 L774.8 323.0 L775.8 317.3 L776.8 323.1 L777.7 321.5 L778.7 330.5 L779.7 321.0 L780.7 322.3 L781.6 312.1 L782.6 330.8 L783.5 324.8 L784.5 333.7 L785.4 323.6 L786.3 322.0 L787.2 309.0 L788.1 312.0 L789.1 327.4 L790.0 319.6 L790.9 325.6 L791.7 314.9 L792.6 336.6 L793.5 332.0 L794.4 319.0 L795.2 326.5 L796.1 328.1 L797.0 329.8 L797.8 322.2 L798.7 320.3 L799.5 323.4 L800.3 336.2 L801.2 321.0 L802.0 308.2 L802.8 305.7 L803.6 309.7 L804.5 334.1 L805.3 319.5 L806.1 322.9 L806.9 312.4 L807.7 324.4 L808.4 325.0 L809.2 318.8 L810.0 302.4 L810.8 313.6 L811.5 334.1 L812.3 310.6 L813.1 316.1 L813.8 319.0 L814.6 320.9 L815.3 303.3 L816.1 336.1 L816.8 327.6 L817.6 331.8 L818.3 306.7 L819.0 314.8 L819.8 326.7 L820.5 320.4 L821.2 347.1 L821.9 322.7 L822.6 320.8 L823.3 316.3 L824.0 345.3 L824.7 327.6 L825.4 322.8 L826.1 332.1 L826.8 311.4 L827.5 316.7 L828.2 312.0 L828.9 327.6 L829.5 308.1 L830.2 325.1 L830.9 311.1 L831.5 320.7 L832.2 359.7 L832.9 326.3 L833.5 311.4 L834.2 322.6 L834.8 313.1 L835.5 322.1 L836.1 314.8 L836.8 321.1 L837.4 326.5 L838.0 317.9 L838.7 324.2 L839.3 314.4 L839.9 333.8 L840.5 315.2 L841.2 318.5 L841.8 332.4 L842.4 316.6 L843.0 325.5 L843.6 322.6 L844.2 312.2 L844.8 324.6 L845.4 307.9 L846.0 334.3 L846.6 330.2 L847.2 312.9 L847.8 312.4 L848.4 321.0 L849.0 326.2 L849.6 325.1 L850.2 324.4 L850.7 324.5 L851.3 300.6 L851.9 325.0 L852.5 327.3 L853.0 327.4 L853.6 326.4 L854.2 306.3 L854.7 323.3 L855.3 320.9 L855.9 325.5 L856.4 307.4 L857.0 311.7 L857.5 323.0 L858.1 322.8 L858.6 312.1 L859.2 332.1 L859.7 311.2 L860.2 320.9 L860.8 312.7 L861.3 328.3 L861.8 325.2 L862.4 329.7 L862.9 331.2 L863.4 318.5 L864.0 317.9 L864.5 328.0 L865.0 323.3 L865.5 323.1 L866.0 313.4 L866.6 324.8 L867.1 313.6 L867.6 320.5 L868.1 325.4 L868.6 318.5 L869.1 315.1 L869.6 322.3 L870.1 317.7 L870.6 326.0 L871.1 322.6 L871.6 323.0 L872.1 312.9 L872.6 320.6 L873.1 318.2 L873.6 335.0 L874.1 307.8 L874.6 327.9 L875.1 317.5 L875.5 322.2 L876.0 325.2 L876.5 322.5 L877.0 318.5 L877.5 321.2 L877.9 333.2 L878.4 332.3 L878.9 317.2 L879.3 322.1 L879.8 322.5 L880.3 330.2 L880.8 315.4 L881.2 324.9 L881.7 314.0 L882.1 329.0 L882.6 331.5 L883.1 324.6 L883.5 328.1 L884.0 332.9 L884.4 311.8 L884.9 331.4 L885.3 320.9 L885.8 326.1 L886.2 325.5 L886.7 325.0 L887.1 322.3 L887.6 335.7 L888.0 328.5 L888.4 329.2 L888.9 334.5 L889.3 336.8 L889.7 327.5 L890.2 355.6 L890.6 331.9 L891.0 338.8 L891.5 318.9 L891.9 338.7 L892.3 327.8 L892.8 324.2 L893.2 320.1 L893.6 327.0 L894.0 313.9 L894.5 329.0 L894.9 328.0 L895.3 316.1 L895.7 318.0 L896.1 329.4 L896.5 319.0 L897.0 323.4 L897.4 321.7 L897.8 338.3 L898.2 329.3 L898.6 326.1 L899.0 330.6 L899.4 324.7 L899.8 324.8 L900.2 325.0 L900.6 322.3 L901.0 336.5 L901.4 324.0 L901.8 322.1 L902.2 333.9 L902.6 336.0 L903.0 340.9 L903.4 321.3 L903.8 327.7 L904.2 325.2 L904.6 322.9 L905.0 342.8 L905.4 322.2 L905.8 368.6 L906.1 327.5 L906.5 317.3 L906.9 329.8 L907.3 317.6 L907.7 328.7 L908.1 312.6 L908.4 338.8 L908.8 312.4 L909.2 332.1 L909.6 333.4 L910.0 332.6 L910.3 331.9 L910.7 320.2 L911.1 318.3 L911.5 315.2 L911.8 334.3 L912.2 342.6 L912.6 339.3 L912.9 331.8 L913.3 321.8 L913.7 338.2 L914.0 340.5 L914.4 321.4 L914.8 327.4 L915.1 337.6 L915.5 331.4 L915.8 333.1 L916.2 337.6 L916.6 323.0 L916.9 323.1 L917.3 331.6 L917.6 319.3 L918.0 323.1 L918.3 316.9 L918.7 330.0 L919.0 324.1 L919.4 333.8 L919.7 329.9 L920.1 335.4 L920.4 335.5 L920.8 340.7 L921.1 326.7 L921.5 347.2 L921.8 340.0 L922.2 328.7 L922.5 335.8 L922.9 330.7 L923.2 341.7 L923.5 320.7 L923.9 330.6 L924.2 358.8 L924.6 327.5 L924.9 339.7 L925.2 338.7 L925.6 338.4 L925.9 336.4 L926.2 333.0 L926.6 331.1 L926.9 348.2 L927.2 321.1 L927.6 337.2 L927.9 330.6 L928.2 324.8 L928.6 319.3 L928.9 326.9 L929.2 366.4 L929.5 323.2 L929.9 334.8 L930.2 326.6 L930.5 324.2 L930.8 323.2 L931.2 324.1 L931.5 327.7 L931.8 340.5 L932.1 335.4 L932.4 334.1 L932.8 320.0 L933.1 327.4 L933.4 327.6 L933.7 326.0 L934.0 335.6 L934.3 334.3 L934.7 326.9 L935.0 344.1 L935.3 337.5 L935.6 332.9 L935.9 341.6 L936.2 326.4 L936.5 332.4 L936.8 315.6 L937.2 339.3 L937.5 335.4 L937.8 319.1 L938.1 335.0 L938.4 328.7 L938.7 330.9 L939.0 326.5 L939.3 330.4 L939.6 340.3 L939.9 330.7 L940.2 351.5 L940.5 330.2 L940.8 345.6 L941.1 340.5 L941.4 337.6 L941.7 325.2 L942.0 336.6 L942.3 331.0 L942.6 333.1 L942.9 321.6 L943.2 328.2 L943.5 323.3 L943.8 335.5 L944.1 341.2 L944.4 344.6 L944.7 309.6 L944.9 330.4 L945.2 329.0 L945.5 328.8 L945.8 331.2 L946.1 333.1 L946.4 319.0 L946.7 342.7 L947.0 354.5 L947.3 343.7 L947.5 335.0 L947.8 332.0 L948.1 318.9 L948.4 337.1 L948.7 332.5 L949.0 324.6 L949.3 335.1 L949.5 344.8 L949.8 328.5 L950.1 324.4 L950.4 324.5 L950.7 336.3 L950.9 324.0 L951.2 332.4 L951.5 333.4 L951.8 325.1 L952.1 322.7 L952.3 332.5 L952.6 322.3 L952.9 344.6 L953.2 326.6 L953.4 338.6 L953.7 332.5 L954.0 345.2 L954.2 331.2 L954.5 328.9 L954.8 363.7 L955.1 356.0 L955.3 334.6 L955.6 320.4 L955.9 329.3" fill="none" stroke="#0000FF" stroke-width="2" stroke-linejoin="miter" shape-rendering="crispEdges"/><path d="M97.8 208.2 L193.2 242.6 L249.0 249.7 L288.6 262.2 L319.3 293.3 L344.4 291.9 L365.6 313.2 L383.9 300.9 L400.1 298.6 L414.6 319.3 L427.8 291.7 L439.7 296.1 L450.7 320.5 L460.9 314.6 L470.4 317.1 L479.3 284.9 L487.7 317.4 L495.5 294.1 L503.0 310.6 L510.0 341.1 L516.7 295.0 L523.1 316.9 L529.2 326.6 L535.1 285.4 L540.7 349.7 L546.1 317.0 L551.3 306.5 L556.3 318.1 L561.1 345.9 L565.8 328.9 L570.3 327.8 L574.7 278.1 L578.9 310.9 L583.0 325.5 L587.0 330.8 L590.9 303.3 L594.7 321.3 L598.3 351.2 L601.9 338.8 L605.4 330.2 L608.8 320.8 L612.1 337.4 L615.3 322.7 L618.5 299.0 L621.6 319.8 L624.6 322.1 L627.6 311.0 L630.5 294.0 L633.3 328.5 L636.1 321.4 L638.8 329.1 L641.5 302.8 L644.1 315.4 L646.7 315.5 L649.2 342.1 L651.7 300.7 L654.1 324.2 L656.5 289.6 L658.9 316.4 L661.2 285.0 L663.4 318.4 L665.7 325.0 L667.9 323.7 L670.0 307.0 L672.2 298.6 L674.3 305.0 L676.3 347.9 L678.4 302.7 L680.4 302.6 L682.4 340.1 L684.3 321.1 L686.2 319.8 L688.1 318.3 L690.0 318.3 L691.9 329.2 L693.7 311.0 L695.5 306.9 L697.3 303.5 L699.0 341.5 L700.7 302.5 L702.5 327.5 L704.1 291.0 L705.8 333.2 L707.5 320.6 L709.1 325.4 L710.7 301.8 L712.3 319.2 L713.9 321.2 L715.4 319.2 L716.9 310.6 L718.5 304.3 L720.0 314.9 L721.5 303.1 L722.9 307.7 L724.4 325.4 L725.8 316.4 L727.3 358.8 L728.7 318.2 L730.1 314.6 L731.4 320.9 L732.8 314.6 L734.2 313.6 L735.5 304.6 L736.8 316.7 L738.2 322.5 L739.5 315.9 L740.8 317.9 L742.0 319.1 L743.3 315.8 L744.6 327.1 L745.8 324.2 L747.0 331.3 L748.3 294.1 L749.5 311.3 L750.7 306.2 L751.9 320.6 L753.0 327.8 L754.2 312.0 L755.4 323.7 L756.5 306.3 L757.7 326.3 L758.8 312.3 L759.9 318.0 L761.0 321.9 L762.1 327.5 L763.2 325.7 L764.3 323.5 L765.4 335.6 L766.5 318.6 L767.5 307.0 L768.6 329.7 L769.6 317.9 L770.7 307.5 L771.7 322.2 L772.7 321.7 L773.8 315.0 L774.8 319.8 L775.8 317.9 L776.8 320.5 L777.7 321.7 L778.7 326.3 L779.7 318.3 L780.7 316.1 L781.6 313.7 L782.6 320.9 L783.5 323.1 L784.5 335.0 L785.4 313.4 L786.3 318.4 L787.2 330.8 L788.1 319.7 L789.1 330.9 L790.0 318.5 L790.9 323.1 L791.7 320.4 L792.6 320.8 L793.5 316.9 L794.4 317.2 L795.2 322.4 L796.1 322.7 L797.0 312.1 L797.8 328.7 L798.7 314.1 L799.5 318.5 L800.3 314.4 L801.2 317.9 L802.0 319.3 L802.8 315.9 L803.6 310.7 L804.5 324.4 L805.3 327.6 L806.1 330.8 L806.9 310.7 L807.7 320.4 L808.4 316.8 L809.2 329.1 L810.0 306.8 L810.8 355.8 L811.5 333.5 L812.3 332.7 L813.1 319.2 L813.8 324.1 L814.6 318.2 L815.3 313.5 L816.1 325.9 L816.8 321.8 L817.6 319.3 L818.3 334.2 L819.0 321.4 L819.8 311.4 L820.5 319.4 L821.2 318.6 L821.9 309.6 L822.6 318.0 L823.3 311.0 L824.0 315.8 L824.7 319.2 L825.4 315.6 L826.1 329.9 L826.8 325.9 L827.5 320.8 L828.2 307.5 L828.9 321.4 L829.5 333.9 L830.2 306.7 L830.9 321.4 L831.5 323.1 L832.2 323.2 L832.9 324.8 L833.5 326.5 L834.2 327.3 L834.8 321.8 L835.5 308.6 L836.1 346.8 L836.8 330.2 L837.4 311.5 L838.0 313.0 L838.7 351.1 L839.3 326.7 L839.9 310.9 L840.5 309.2 L841.2 313.8 L841.8 324.1 L842.4 321.5 L843.0 318.6 L843.6 331.5 L844.2 318.9 L844.8 318.5 L845.4 318.6 L846.0 321.7 L846.6 307.2 L847.2 310.6 L847.8 327.7 L848.4 325.0 L849.0 323.6 L849.6 328.1 L850.2 314.1 L850.7 317.6 L851.3 325.0 L851.9 349.7 L852.5 317.6 L853.0 319.7 L853.6 319.1 L854.2 311.6 L854.7 307.6 L855.3 316.8 L855.9 324.3 L856.4 311.2 L857.0 320.3 L857.5 314.0 L858.1 317.0 L858.6 323.0 L859.2 324.5 L859.7 325.1 L860.2 321.8 L860.8 320.1 L861.3 316.8 L861.8 336.1 L862.4 330.6 L862.9 328.3 L863.4 321.5 L864.0 316.5 L864.5 325.0 L865.0 323.8 L865.5 310.2 L866.0 328.1 L866.6 326.5 L867.1 317.3 L867.6 314.1 L868.1 321.5 L868.6 308.3 L869.1 329.8 L869.6 330.3 L870.1 312.4 L870.6 323.0 L871.1 329.7 L871.6 313.5 L872.1 314.7 L872.6 319.0 L873.1 332.4 L873.6 327.2 L874.1 334.6 L874.6 332.2 L875.1 329.2 L875.5 316.9 L876.0 325.3 L876.5 327.6 L877.0 329.2 L877.5 328.7 L877.9 328.3 L878.4 314.2 L878.9 315.6 L879.3 331.0 L879.8 330.2 L880.3 346.3 L880.8 324.2 L881.2 318.9 L881.7 333.8 L882.1 318.6 L882.6 321.1 L883.1 318.6 L883.5 326.0 L884.0 325.2 L884.4 333.5 L884.9 306.8 L885.3 312.8 L885.8 323.5 L886.2 330.0 L886.7 318.3 L887.1 343.9 L887.6 325.0 L888.0 342.9 L888.4 320.0 L888.9 321.0 L889.3 325.8 L889.7 320.0 L890.2 322.3 L890.6 327.5 L891.0 330.0 L891.5 350.3 L891.9 322.1 L892.3 336.4 L892.8 321.5 L893.2 325.1 L893.6 320.0 L894.0 325.4 L894.5 321.8 L894.9 333.8 L895.3 321.1 L895.7 314.6 L896.1 318.7 L896.5 320.7 L897.0 322.9 L897.4 321.7 L897.8 335.8 L898.2 337.2 L898.6 334.3 L899.0 313.4 L899.4 308.1 L899.8 334.3 L900.2 316.1 L900.6 319.6 L901.0 325.2 L901.4 323.9 L901.8 325.7 L902.2 315.5 L902.6 325.5 L903.0 328.5 L903.4 328.1 L903.8 325.4 L904.2 335.5 L904.6 327.9 L905.0 328.0 L905.4 320.7 L905.8 323.7 L906.1 320.1 L906.5 338.0 L906.9 319.7 L907.3 325.3 L907.7 317.2 L908.1 330.7 L908.4 323.4 L908.8 321.9 L909.2 315.7 L909.6 325.6 L910.0 320.4 L910.3 322.1 L910.7 327.9 L911.1 339.8 L911.5 326.1 L911.8 323.5 L912.2 325.2 L912.6 318.3 L912.9 325.1 L913.3 323.8 L913.7 319.0 L914.0 319.2 L914.4 320.2 L914.8 313.4 L915.1 326.0 L915.5 305.9 L915.8 328.4 L916.2 316.5 L916.6 322.8 L916.9 311.6 L917.3 325.8 L917.6 327.3 L918.0 327.1 L918.3 322.2 L918.7 373.0 L919.0 329.7 L919.4 313.3 L919.7 342.8 L920.1 328.7 L920.4 323.1 L920.8 329.7 L921.1 354.5 L921.5 323.7 L921.8 328.7 L922.2 325.7 L922.5 327.0 L922.9 322.8 L923.2 320.9 L923.5 320.8 L923.9 345.8 L924.2 313.2 L924.6 311.3 L924.9 318.1 L925.2 319.9 L925.6 340.8 L925.9 319.3 L926.2 328.1 L926.6 333.2 L926.9 329.4 L927.2 322.6 L927.6 344.4 L927.9 362.0 L928.2 331.6 L928.6 328.0 L928.9 333.2 L929.2 316.3 L929.5 319.7 L929.9 316.2 L930.2 329.7 L930.5 331.9 L930.8 323.1 L931.2 309.8 L931.5 327.6 L931.8 328.0 L932.1 339.1 L932.4 330.3 L932.8 326.5 L933.1 326.6 L933.4 323.6 L933.7 316.5 L934.0 330.3 L934.3 315.7 L934.7 323.3 L935.0 334.7 L935.3 327.2 L935.6 325.3 L935.9 313.4 L936.2 332.8 L936.5 324.3 L936.8 338.4 L937.2 331.2 L937.5 333.6 L937.8 318.6 L938.1 336.8 L938.4 331.0 L938.7 342.0 L939.0 330.9 L939.3 331.2 L939.6 331.0 L939.9 338.4 L940.2 338.4 L940.5 316.8 L940.8 337.8 L941.1 309.2 L941.4 330.3 L941.7 329.2 L942.0 324.6 L942.3 334.9 L942.6 335.6 L942.9 322.2 L943.2 327.4 L943.5 320.1 L943.8 331.9 L944.1 335.8 L944.4 316.6 L944.7 357.6 L944.9 334.1 L945.2 331.9 L945.5 323.2 L945.8 330.5 L946.1 335.9 L946.4 328.6 L946.7 321.4 L947.0 324.4 L947.3 325.7 L947.5 325.5 L947.8 338.9 L948.1 329.2 L948.4 327.9 L948.7 324.9 L949.0 325.2 L949.3 327.2 L949.5 324.8 L949.8 311.0 L950.1 329.5 L950.4 326.9 L950.7 328.9 L950.9 310.9 L951.2 331.8 L951.5 329.8 L951.8 345.9 L952.1 327.0 L952.3 341.4 L952.6 343.9 L952.9 359.1 L953.2 319.8 L953.4 336.8 L953.7 327.9 L954.0 333.6 L954.2 310.2 L954.5 327.4 L954.8 321.5 L955.1 327.7 L955.3 335.7 L955.6 339.7 L955.9 323.5" fill="none" stroke="#0000E0" stroke-width="2" stroke-linejoin="miter" shape-rendering="crispEdges"/><path d="M97.8 204.4 L193.2 279.9 L249.0 275.5 L288.6 267.1 L319.3 286.0 L344.4 282.8 L365.6 272.3 L383.9 283.9 L400.1 280.6 L414.6 289.6 L427.8 302.5 L439.7 288.7 L450.7 291.4 L460.9 321.2 L470.4 300.8 L479.3 358.3 L487.7 306.6 L495.5 297.6 L503.0 317.7 L510.0 285.0 L516.7 303.0 L523.1 307.3 L529.2 316.1 L535.1 315.3 L540.7 318.7 L546.1 300.7 L551.3 347.4 L556.3 338.3 L561.1 298.3 L565.8 338.3 L570.3 318.0 L574.7 327.8 L578.9 337.8 L583.0 326.8 L587.0 332.4 L590.9 307.1 L594.7 327.9 L598.3 328.2 L601.9 338.1 L605.4 305.8 L608.8 329.4 L612.1 330.9 L615.3 331.5 L618.5 335.8 L621.6 348.5 L624.6 326.6 L627.6 287.2 L630.5 299.9 L633.3 330.5 L636.1 315.1 L638.8 314.8 L641.5 340.0 L644.1 319.6 L646.7 320.0 L649.2 316.8 L651.7 337.7 L654.1 315.6 L656.5 327.6 L658.9 326.3 L661.2 336.7 L663.4 331.1 L665.7 324.6 L667.9 341.5 L670.0 324.6 L672.2 331.9 L674.3 325.8 L676.3 298.5 L678.4 309.6 L680.4 321.3 L682.4 332.9 L684.3 336.1 L686.2 336.7 L688.1 308.5 L690.0 315.4 L691.9 326.8 L693.7 303.4 L695.5 334.8 L697.3 332.1 L699.0 323.2 L700.7 315.3 L702.5 334.8 L704.1 336.7 L705.8 326.3 L707.5 318.8 L709.1 328.1 L710.7 333.6 L712.3 308.4 L713.9 337.1 L715.4 322.4 L716.9 332.3 L718.5 320.6 L720.0 311.6 L721.5 314.8 L722.9 317.4 L724.4 314.2 L725.8 340.1 L727.3 329.6 L728.7 320.8 L730.1 331.3 L731.4 317.0 L732.8 305.6 L734.2 301.5 L735.5 312.7 L736.8 327.8 L738.2 327.1 L739.5 332.5 L740.8 323.7 L742.0 318.5 L743.3 335.6 L744.6 333.9 L745.8 318.5 L747.0 334.0 L748.3 316.8 L749.5 323.3 L750.7 310.7 L751.9 316.8 L753.0 315.2 L754.2 323.4 L755.4 317.0 L756.5 326.7 L757.7 324.1 L758.8 322.1 L759.9 324.1 L761.0 312.6 L762.1 342.1 L763.2 313.4 L764.3 322.1 L765.4 328.1 L766.5 314.0 L767.5 330.7 L768.6 320.3 L769.6 331.0 L770.7 326.7 L771.7 317.5 L772.7 303.7 L773.8 329.0 L774.8 318.1 L775.8 325.3 L776.8 313.1 L777.7 326.0 L778.7 320.6 L779.7 311.4 L780.7 336.8 L781.6 326.2 L782.6 329.0 L783.5 320.7 L784.5 324.8 L785.4 318.1 L786.3 330.4 L787.2 333.2 L788.1 316.7 L789.1 311.1 L790.0 331.8 L790.9 322.7 L791.7 325.3 L792.6 330.7 L793.5 323.5 L794.4 322.7 L795.2 334.6 L796.1 322.9 L797.0 316.7 L797.8 321.5 L798.7 345.2 L799.5 324.5 L800.3 323.8 L801.2 332.2 L802.0 329.5 L802.8 324.4 L803.6 322.6 L804.5 324.9 L805.3 336.5 L806.1 321.2 L806.9 319.4 L807.7 322.5 L808.4 330.6 L809.2 328.0 L810.0 333.6 L810.8 323.1 L811.5 324.9 L812.3 324.9 L813.1 311.4 L813.8 329.0 L814.6 366.6 L815.3 317.6 L816.1 331.3 L816.8 340.2 L817.6 331.6 L818.3 340.3 L819.0 321.5 L819.8 327.0 L820.5 318.8 L821.2 316.6 L821.9 321.1 L822.6 328.6 L823.3 308.9 L824.0 326.2 L824.7 309.3 L825.4 342.0 L826.1 318.0 L826.8 330.9 L827.5 319.0 L828.2 325.7 L828.9 350.9 L829.5 311.8 L830.2 316.3 L830.9 331.7 L831.5 327.6 L832.2 323.7 L832.9 326.8 L833.5 328.0 L834.2 331.4 L834.8 332.0 L835.5 326.2 L836.1 322.6 L836.8 330.8 L837.4 319.9 L838.0 332.3 L838.7 332.7 L839.3 321.9 L839.9 339.2 L840.5 328.8 L841.2 329.5 L841.8 361.2 L842.4 320.8 L843.0 337.6 L843.6 321.2 L844.2 322.3 L844.8 316.7 L845.4 336.0 L846.0 353.1 L846.6 337.7 L847.2 342.6 L847.8 368.5 L848.4 352.7 L849.0 334.7 L849.6 334.4 L850.2 337.4 L850.7 326.6 L851.3 314.5 L851.9 319.8 L852.5 330.3 L853.0 335.0 L853.6 316.1 L854.2 325.0 L854.7 331.4 L855.3 315.1 L855.9 315.5 L856.4 309.9 L857.0 320.4 L857.5 319.7 L858.1 319.2 L858.6 326.6 L859.2 323.2 L859.7 327.8 L860.2 340.1 L860.8 331.3 L861.3 317.1 L861.8 329.6 L862.4 320.5 L862.9 327.5 L863.4 326.4 L864.0 326.2 L864.5 329.4 L865.0 324.4 L865.5 334.3 L866.0 328.8 L866.6 326.9 L867.1 332.7 L867.6 351.9 L868.1 333.2 L868.6 320.5 L869.1 323.2 L869.6 331.2 L870.1 341.6 L870.6 324.1 L871.1 330.4 L871.6 339.3 L872.1 315.9 L872.6 320.3 L873.1 341.0 L873.6 326.4 L874.1 323.3 L874.6 334.4 L875.1 341.7 L875.5 328.8 L876.0 341.4 L876.5 330.6 L877.0 328.1 L877.5 329.9 L877.9 336.6 L878.4 319.9 L878.9 324.4 L879.3 322.3 L879.8 331.3 L880.3 340.6 L880.8 326.8 L881.2 350.5 L881.7 343.1 L882.1 319.3 L882.6 321.2 L883.1 325.8 L883.5 331.6 L884.0 330.6 L884.4 330.5 L884.9 324.5 L885.3 324.0 L885.8 335.1 L886.2 317.0 L886.7 340.7 L887.1 331.1 L887.6 333.0 L888.0 330.0 L888.4 336.8 L888.9 330.1 L889.3 313.6 L889.7 331.9 L890.2 328.8 L890.6 327.7 L891.0 342.7 L891.5 328.0 L891.9 322.6 L892.3 329.8 L892.8 330.7 L893.2 332.4 L893.6 324.1 L894.0 330.7 L894.5 338.1 L894.9 325.9 L895.3 320.0 L895.7 342.3 L896.1 330.7 L896.5 331.0 L897.0 343.9 L897.4 348.7 L897.8 326.7 L898.2 334.1 L898.6 321.9 L899.0 322.1 L899.4 342.7 L899.8 338.1 L900.2 331.7 L900.6 318.2 L901.0 331.3 L901.4 333.5 L901.8 324.4 L902.2 335.8 L902.6 324.7 L903.0 321.3 L903.4 333.6 L903.8 336.4 L904.2 324.0 L904.6 320.9 L905.0 335.2 L905.4 339.8 L905.8 333.0 L906.1 323.4 L906.5 327.0 L906.9 317.0 L907.3 327.4 L907.7 328.1 L908.1 325.2 L908.4 334.9 L908.8 346.4 L909.2 327.9 L909.6 330.3 L910.0 332.4 L910.3 327.0 L910.7 344.5 L911.1 329.5 L911.5 322.7 L911.8 329.0 L912.2 334.8 L912.6 321.0 L912.9 339.2 L913.3 340.5 L913.7 317.8 L914.0 334.8 L914.4 329.7 L914.8 326.7 L915.1 318.9 L915.5 329.9 L915.8 327.2 L916.2 333.9 L916.6 329.5 L916.9 338.8 L917.3 332.7 L917.6 336.8 L918.0 331.2 L918.3 318.4 L918.7 324.1 L919.0 325.1 L919.4 323.5 L919.7 332.9 L920.1 332.1 L920.4 328.2 L920.8 330.0 L921.1 328.1 L921.5 333.7 L921.8 325.5 L922.2 335.7 L922.5 333.7 L922.9 334.1 L923.2 320.9 L923.5 318.4 L923.9 346.6 L924.2 335.8 L924.6 361.2 L924.9 336.6 L925.2 334.4 L925.6 352.4 L925.9 322.8 L926.2 333.3 L926.6 333.6 L926.9 328.9 L927.2 337.3 L927.6 340.1 L927.9 322.5 L928.2 330.2 L928.6 323.7 L928.9 329.6 L929.2 321.3 L929.5 340.8 L929.9 335.9 L930.2 337.0 L930.5 331.1 L930.8 354.8 L931.2 327.5 L931.5 328.9 L931.8 326.5 L932.1 309.4 L932.4 333.3 L932.8 334.5 L933.1 319.7 L933.4 343.0 L933.7 337.3 L934.0 329.0 L934.3 324.3 L934.7 333.4 L935.0 328.3 L935.3 333.4 L935.6 324.1 L935.9 329.0 L936.2 325.3 L936.5 338.3 L936.8 341.4 L937.2 335.3 L937.5 335.4 L937.8 333.6 L938.1 330.1 L938.4 334.0 L938.7 327.7 L939.0 335.0 L939.3 338.6 L939.6 336.9 L939.9 350.8 L940.2 332.5 L940.5 336.9 L940.8 328.8 L941.1 334.3 L941.4 323.9 L941.7 330.6 L942.0 344.9 L942.3 309.9 L942.6 336.5 L942.9 327.8 L943.2 336.0 L943.5 340.2 L943.8 332.0 L944.1 339.8 L944.4 324.1 L944.7 335.4 L944.9 333.5 L945.2 335.0 L945.5 338.4 L945.8 332.9 L946.1 328.7 L946.4 323.0 L946.7 332.2 L947.0 333.6 L947.3 330.1 L947.5 334.7 L947.8 317.6 L948.1 330.8 L948.4 331.3 L948.7 343.1 L949.0 337.0 L949.3 336.9 L949.5 340.5 L949.8 342.8 L950.1 372.2 L950.4 341.1 L950.7 324.1 L950.9 331.3 L951.2 333.7 L951.5 332.6 L951.8 337.6 L952.1 329.2 L952.3 329.1 L952.6 334.8 L952.9 342.9 L953.2 332.1 L953.4 331.6 L953.7 320.7 L954.0 330.8 L954.2 332.5 L954.5 333.5 L954.8 323.0 L955.1 330.9 L955.3 330.4 L955.6 341.8 L955.9 325.2" fill="none" stroke="#0000FF" stroke-width="2" stroke-linejoin="miter" shape-rendering="crispEdges"/><path d="M97.8 182.2 L193.2 218.5 L249.0 258.1 L288.6 263.8 L319.3 307.9 L344.4 312.1 L365.6 280.5 L383.9 291.0 L400.1 300.8 L414.6 275.2 L427.8 307.5 L439.7 320.6 L450.7 306.3 L460.9 322.1 L470.4 292.1 L479.3 283.9 L487.7 280.2 L495.5 302.0 L503.0 304.9 L510.0 328.1 L516.7 303.6 L523.1 285.1 L529.2 336.8 L535.1 326.0 L540.7 313.7 L546.1 325.4 L551.3 326.4 L556.3 314.4 L561.1 319.6 L565.8 294.2 L570.3 309.4 L574.7 309.5 L578.9 321.5 L583.0 341.3 L587.0 298.5 L590.9 307.6 L594.7 316.8 L598.3 330.5 L601.9 313.2 L605.4 297.0 L608.8 302.4 L612.1 331.3 L615.3 287.7 L618.5 312.0 L621.6 319.3 L624.6 306.2 L627.6 308.0 L630.5 302.5 L633.3 330.3 L636.1 304.1 L638.8 317.8 L641.5 294.2 L644.1 294.1 L646.7 305.9 L649.2 338.0 L651.7 314.1 L654.1 319.3 L656.5 305.0 L658.9 312.5 L661.2 305.9 L663.4 301.8 L665.7 313.3 L667.9 323.1 L670.0 313.7 L672.2 282.8 L674.3 319.8 L676.3 334.7 L678.4 299.1 L680.4 318.0 L682.4 303.0 L684.3 321.7 L686.2 345.2 L688.1 318.1 L690.0 329.4 L691.9 283.9 L693.7 325.5 L695.5 309.5 L697.3 305.1 L699.0 303.9 L700.7 318.9 L702.5 309.8 L704.1 311.9 L705.8 308.8 L707.5 367.9 L709.1 303.0 L710.7 353.0 L712.3 336.0 L713.9 332.4 L715.4 308.1 L716.9 302.2 L718.5 320.9 L720.0 315.7 L721.5 317.9 L722.9 303.2 L724.4 312.0 L725.8 297.9 L727.3 317.6 L728.7 304.7 L730.1 321.8 L731.4 317.2 L732.8 327.4 L734.2 313.6 L735.5 292.6 L736.8 327.3 L738.2 310.6 L739.5 314.7 L740.8 311.6 L742.0 310.1 L743.3 327.5 L744.6 316.0 L745.8 307.0 L747.0 311.4 L748.3 310.2 L749.5 317.1 L750.7 320.5 L751.9 322.8 L753.0 314.0 L754.2 317.9 L755.4 309.4 L756.5 339.0 L757.7 321.6 L758.8 323.3 L759.9 329.0 L761.0 322.1 L762.1 332.1 L763.2 318.4 L764.3 315.4 L765.4 309.6 L766.5 324.7 L767.5 319.0 L768.6 329.5 L769.6 309.0 L770.7 317.2 L771.7 330.7 L772.7 304.4 L773.8 320.7 L774.8 307.5 L775.8 318.9 L776.8 324.1 L777.7 327.5 L778.7 318.0 L779.7 323.7 L780.7 310.6 L781.6 315.6 L782.6 321.0 L783.5 332.0 L784.5 326.7 L785.4 327.9 L786.3 325.8 L787.2 324.4 L788.1 328.8 L789.1 316.8 L790.0 315.8 L790.9 346.9 L791.7 312.9 L792.6 316.3 L793.5 320.7 L794.4 329.3 L795.2 327.1 L796.1 320.7 L797.0 318.3 L797.8 318.4 L798.7 316.2 L799.5 322.3 L800.3 333.7 L801.2 328.4 L802.0 321.5 L802.8 336.3 L803.6 325.4 L804.5 326.6 L805.3 321.0 L806.1 330.0 L806.9 324.7 L807.7 318.4 L808.4 329.1 L809.2 327.8 L810.0 323.7 L810.8 325.3 L811.5 317.1 L812.3 334.8 L813.1 316.6 L813.8 310.8 L814.6 333.8 L815.3 341.4 L816.1 327.7 L816.8 301.6 L817.6 322.5 L818.3 325.1 L819.0 351.7 L819.8 316.3 L820.5 324.8 L821.2 320.5 L821.9 325.9 L822.6 324.8 L823.3 320.0 L824.0 327.0 L824.7 316.1 L825.4 321.1 L826.1 332.6 L826.8 316.8 L827.5 328.9 L828.2 320.6 L828.9 332.7 L829.5 331.3 L830.2 335.9 L830.9 329.4 L831.5 320.4 L832.2 333.3 L832.9 343.8 L833.5 325.5 L834.2 311.5 L834.8 336.1 L835.5 336.9 L836.1 320.4 L836.8 328.6 L837.4 335.1 L838.0 327.0 L838.7 337.7 L839.3 321.9 L839.9 312.5 L840.5 317.1 L841.2 319.0 L841.8 360.2 L842.4 336.4 L843.0 322.6 L843.6 319.9 L844.2 320.5 L844.8 340.0 L845.4 324.4 L846.0 331.3 L846.6 312.6 L847.2 335.0 L847.8 325.2 L848.4 331.3 L849.0 323.1 L849.6 333.6 L850.2 316.1 L850.7 327.1 L851.3 322.8 L851.9 317.1 L852.5 327.2 L853.0 337.3 L853.6 328.0 L854.2 326.1 L854.7 311.2 L855.3 340.2 L855.9 321.9 L856.4 333.0 L857.0 324.7 L857.5 325.5 L858.1 337.5 L858.6 326.3 L859.2 322.6 L859.7 323.9 L860.2 318.5 L860.8 319.6 L861.3 334.0 L861.8 335.1 L862.4 341.2 L862.9 329.8 L863.4 315.3 L864.0 321.3 L864.5 323.8 L865.0 348.9 L865.5 330.2 L866.0 316.5 L866.6 333.8 L867.1 331.6 L867.6 339.5 L868.1 343.5 L868.6 319.9 L869.1 321.1 L869.6 356.2 L870.1 329.6 L870.6 332.4 L871.1 318.1 L871.6 334.6 L872.1 335.8 L872.6 335.3 L873.1 326.6 L873.6 340.6 L874.1 336.9 L874.6 337.7 L875.1 326.8 L875.5 329.5 L876.0 333.6 L876.5 323.6 L877.0 322.1 L877.5 340.3 L877.9 330.5 L878.4 334.7 L878.9 321.4 L879.3 324.2 L879.8 328.4 L880.3 349.1 L880.8 311.3 L881.2 335.9 L881.7 337.2 L882.1 317.6 L882.6 305.2 L883.1 328.0 L883.5 325.6 L884.0 320.1 L884.4 328.3 L884.9 316.8 L885.3 324.8 L885.8 328.0 L886.2 352.2 L886.7 328.2 L887.1 323.4 L887.6 311.4 L888.0 318.2 L888.4 314.1 L888.9 321.5 L889.3 338.6 L889.7 314.8 L890.2 329.6 L890.6 328.5 L891.0 326.7 L891.5 312.4 L891.9 329.3 L892.3 317.4 L892.8 327.1 L893.2 325.7 L893.6 335.7 L894.0 324.1 L894.5 324.1 L894.9 319.8 L895.3 337.2 L895.7 324.4 L896.1 335.8 L896.5 337.7 L897.0 329.4 L897.4 336.2 L897.8 325.6 L898.2 333.6 L898.6 340.2 L899.0 318.0 L899.4 337.9 L899.8 330.0 L900.2 329.0 L900.6 337.3 L901.0 327.2 L901.4 326.3 L901.8 339.7 L902.2 324.4 L902.6 348.8 L903.0 334.0 L903.4 317.7 L903.8 333.5 L904.2 334.5 L904.6 331.4 L905.0 324.7 L905.4 330.3 L905.8 336.8 L906.1 323.2 L906.5 312.5 L906.9 321.9 L907.3 318.6 L907.7 337.5 L908.1 329.6 L908.4 328.2 L908.8 325.1 L909.2 319.1 L909.6 328.0 L910.0 329.6 L910.3 319.8 L910.7 326.4 L911.1 326.9 L911.5 332.1 L911.8 314.9 L912.2 320.1 L912.6 320.6 L912.9 327.0 L913.3 363.8 L913.7 328.7 L914.0 329.8 L914.4 343.1 L914.8 326.2 L915.1 321.9 L915.5 321.7 L915.8 328.1 L916.2 331.1 L916.6 322.3 L916.9 330.3 L917.3 326.4 L917.6 324.4 L918.0 332.1 L918.3 338.7 L918.7 311.9 L919.0 327.4 L919.4 332.7 L919.7 325.8 L920.1 328.9 L920.4 324.4 L920.8 336.8 L921.1 334.9 L921.5 331.4 L921.8 334.8 L922.2 319.5 L922.5 322.6 L922.9 331.1 L923.2 330.2 L923.5 326.4 L923.9 338.3 L924.2 316.1 L924.6 335.7 L924.9 337.6 L925.2 329.8 L925.6 320.4 L925.9 336.6 L926.2 331.1 L926.6 336.8 L926.9 328.2 L927.2 316.3 L927.6 329.3 L927.9 328.6 L928.2 328.9 L928.6 331.4 L928.9 323.8 L929.2 322.9 L929.5 323.2 L929.9 322.7 L930.2 333.7 L930.5 349.0 L930.8 322.1 L931.2 335.4 L931.5 326.9 L931.8 318.4 L932.1 314.8 L932.4 323.1 L932.8 332.0 L933.1 323.5 L933.4 332.2 L933.7 328.1 L934.0 318.1 L934.3 340.2 L934.7 324.5 L935.0 334.4 L935.3 341.6 L935.6 333.1 L935.9 326.1 L936.2 325.7 L936.5 312.9 L936.8 329.5 L937.2 324.1 L937.5 331.5 L937.8 323.3 L938.1 339.2 L938.4 332.3 L938.7 332.9 L939.0 331.2 L939.3 323.0 L939.6 339.7 L939.9 332.6 L940.2 336.7 L940.5 324.5 L940.8 326.1 L941.1 328.2 L941.4 325.3 L941.7 334.9 L942.0 316.5 L942.3 319.1 L942.6 329.2 L942.9 338.8 L943.2 342.5 L943.5 344.1 L943.8 338.0 L944.1 321.0 L944.4 319.8 L944.7 322.6 L944.9 328.5 L945.2 344.0 L945.5 327.6 L945.8 348.4 L946.1 314.7 L946.4 333.3 L946.7 321.0 L947.0 328.8 L947.3 331.3 L947.5 332.4 L947.8 324.0 L948.1 323.4 L948.4 323.7 L948.7 327.7 L949.0 336.8 L949.3 303.3 L949.5 317.7 L949.8 327.1 L950.1 321.1 L950.4 331.1 L950.7 336.2 L950.9 329.1 L951.2 314.3 L951.5 357.3 L951.8 331.3 L952.1 331.7 L952.3 335.2 L952.6 314.6 L952.9 325.9 L953.2 330.2 L953.4 312.9 L953.7 319.5 L954.0 349.1 L954.2 326.6 L954.5 326.5 L954.8 314.9 L955.1 330.5 L955.3 331.6 L955.6 328.7 L955.9 328.0" fill="none" stroke="#000090" stroke-width="2" stroke-linejoin="miter" shape-rendering="crispEdges"/><path d="M97.8 214.4 L193.2 242.9 L249.0 254.2 L288.6 256.9 L319.3 281.2 L344.4 278.3 L365.6 286.7 L383.9 287.1 L400.1 304.0 L414.6 309.9 L427.8 288.7 L439.7 308.7 L450.7 296.2 L460.9 327.0 L470.4 302.2 L479.3 304.3 L487.7 298.2 L495.5 296.7 L503.0 312.2 L510.0 309.0 L516.7 301.2 L523.1 331.9 L529.2 275.5 L535.1 324.6 L540.7 310.0 L546.1 339.6 L551.3 313.6 L556.3 325.2 L561.1 325.7 L565.8 299.8 L570.3 305.8 L574.7 313.7 L578.9 316.3 L583.0 324.5 L587.0 353.8 L590.9 317.9 L594.7 361.6 L598.3 332.5 L601.9 318.8 L605.4 312.5 L608.8 332.3 L612.1 333.5 L615.3 334.1 L618.5 346.2 L621.6 333.0 L624.6 335.1 L627.6 323.9 L630.5 337.2 L633.3 359.7 L636.1 325.2 L638.8 340.5 L641.5 366.5 L644.1 332.0 L646.7 343.8 L649.2 315.8 L651.7 329.4 L654.1 348.8 L656.5 341.0 L658.9 346.7 L661.2 329.3 L663.4 327.9 L665.7 326.6 L667.9 309.6 L670.0 321.3 L672.2 351.5 L674.3 341.8 L676.3 364.6 L678.4 304.0 L680.4 330.7 L682.4 323.3 L684.3 316.8 L686.2 306.0 L688.1 325.2 L690.0 320.2 L691.9 318.1 L693.7 320.4 L695.5 315.2 L697.3 322.3 L699.0 320.1 L700.7 329.9 L702.5 321.4 L704.1 318.2 L705.8 322.6 L707.5 317.7 L709.1 318.0 L710.7 309.8 L712.3 329.3 L713.9 315.2 L715.4 307.5 L716.9 323.9 L718.5 346.1 L720.0 335.5 L721.5 314.4 L722.9 344.6 L724.4 318.9 L725.8 332.8 L727.3 322.9 L728.7 334.9 L730.1 320.2 L731.4 328.8 L732.8 330.9 L734.2 294.3 L735.5 310.4 L736.8 334.9 L738.2 346.4 L739.5 337.4 L740.8 322.2 L742.0 340.4 L743.3 334.5 L744.6 331.0 L745.8 329.9 L747.0 316.4 L748.3 337.8 L749.5 318.7 L750.7 332.1 L751.9 329.9 L753.0 323.9 L754.2 322.1 L755.4 316.0 L756.5 344.8 L757.7 319.8 L758.8 316.2 L759.9 374.6 L761.0 323.6 L762.1 338.7 L763.2 320.5 L764.3 307.2 L765.4 330.8 L766.5 326.6 L767.5 324.8 L768.6 324.7 L769.6 323.9 L770.7 326.4 L771.7 313.1 L772.7 332.6 L773.8 329.4 L774.8 335.3 L775.8 324.6 L776.8 322.6 L777.7 315.3 L778.7 340.8 L779.7 331.6 L780.7 335.9 L781.6 333.0 L782.6 341.0 L783.5 329.7 L784.5 322.8 L785.4 332.0 L786.3 323.1 L787.2 326.0 L788.1 331.9 L789.1 331.7 L790.0 331.5 L790.9 323.9 L791.7 335.0 L792.6 329.9 L793.5 325.3 L794.4 325.3 L795.2 318.5 L796.1 332.3 L797.0 327.4 L797.8 309.4 L798.7 331.7 L799.5 321.7 L800.3 342.5 L801.2 309.6 L802.0 344.4 L802.8 319.9 L803.6 329.4 L804.5 333.9 L805.3 319.1 L806.1 334.9 L806.9 318.4 L807.7 324.6 L808.4 322.5 L809.2 316.1 L810.0 330.4 L810.8 324.1 L811.5 344.4 L812.3 329.8 L813.1 325.2 L813.8 339.3 L814.6 315.7 L815.3 322.1 L816.1 316.8 L816.8 337.6 L817.6 336.8 L818.3 336.6 L819.0 336.1 L819.8 323.1 L820.5 325.2 L821.2 329.4 L821.9 336.0 L822.6 326.9 L823.3 320.5 L824.0 332.7 L824.7 327.2 L825.4 315.6 L826.1 306.5 L826.8 328.4 L827.5 325.6 L828.2 330.8 L828.9 335.6 L829.5 329.2 L830.2 320.9 L830.9 324.0 L831.5 315.7 L832.2 320.3 L832.9 320.6 L833.5 326.0 L834.2 327.2 L834.8 311.5 L835.5 319.6 L836.1 328.6 L836.8 311.9 L837.4 330.8 L838.0 330.4 L838.7 327.8 L839.3 330.8 L839.9 333.4 L840.5 317.8 L841.2 319.2 L841.8 311.1 L842.4 320.2 L843.0 315.3 L843.6 326.7 L844.2 318.1 L844.8 326.4 L845.4 323.3 L846.0 318.9 L846.6 328.2 L847.2 325.0 L847.8 325.1 L848.4 324.8 L849.0 312.2 L849.6 309.8 L850.2 331.3 L850.7 325.5 L851.3 319.9 L851.9 324.9 L852.5 326.7 L853.0 334.2 L853.6 320.8 L854.2 321.1 L854.7 333.2 L855.3 320.6 L855.9 319.7 L856.4 323.8 L857.0 323.6 L857.5 328.3 L858.1 320.9 L858.6 319.3 L859.2 323.2 L859.7 325.3 L860.2 327.8 L860.8 324.0 L861.3 335.1 L861.8 319.2 L862.4 317.5 L862.9 327.4 L863.4 324.3 L864.0 334.9 L864.5 315.5 L865.0 338.4 L865.5 320.0 L866.0 336.9 L866.6 317.7 L867.1 317.4 L867.6 337.0 L868.1 322.3 L868.6 325.7 L869.1 325.2 L869.6 336.4 L870.1 338.2 L870.6 335.5 L871.1 331.0 L871.6 325.3 L872.1 316.1 L872.6 318.4 L873.1 318.9 L873.6 317.1 L874.1 329.8 L874.6 319.7 L875.1 318.1 L875.5 319.3 L876.0 348.1 L876.5 323.4 L877.0 325.7 L877.5 333.9 L877.9 319.1 L878.4 322.2 L878.9 332.4 L879.3 323.7 L879.8 329.3 L880.3 324.1 L880.8 331.8 L881.2 328.5 L881.7 318.9 L882.1 325.7 L882.6 323.9 L883.1 341.0 L883.5 333.7 L884.0 322.0 L884.4 327.0 L884.9 312.4 L885.3 325.4 L885.8 334.2 L886.2 316.9 L886.7 325.4 L887.1 320.0 L887.6 330.6 L888.0 332.3 L888.4 323.5 L888.9 313.6 L889.3 330.3 L889.7 333.3 L890.2 326.3 L890.6 335.9 L891.0 335.6 L891.5 335.7 L891.9 330.7 L892.3 335.3 L892.8 324.6 L893.2 321.3 L893.6 321.6 L894.0 324.7 L894.5 337.5 L894.9 315.3 L895.3 325.6 L895.7 327.4 L896.1 329.3 L896.5 324.7 L897.0 316.2 L897.4 334.8 L897.8 324.9 L898.2 325.1 L898.6 336.2 L899.0 326.7 L899.4 321.3 L899.8 334.8 L900.2 327.3 L900.6 330.7 L901.0 323.1 L901.4 335.4 L901.8 328.0 L902.2 333.6 L902.6 319.1 L903.0 342.1 L903.4 337.6 L903.8 323.9 L904.2 314.0 L904.6 326.1 L905.0 329.9 L905.4 324.6 L905.8 309.5 L906.1 321.2 L906.5 320.6 L906.9 331.0 L907.3 322.0 L907.7 331.6 L908.1 329.4 L908.4 320.6 L908.8 343.5 L909.2 334.3 L909.6 319.1 L910.0 328.0 L910.3 323.8 L910.7 309.7 L911.1 339.6 L911.5 325.1 L911.8 326.4 L912.2 331.7 L912.6 324.6 L912.9 326.7 L913.3 328.8 L913.7 336.9 L914.0 325.3 L914.4 338.0 L914.8 329.6 L915.1 326.5 L915.5 331.8 L915.8 334.5 L916.2 329.1 L916.6 334.6 L916.9 323.7 L917.3 342.3 L917.6 328.1 L918.0 324.8 L918.3 335.5 L918.7 327.3 L919.0 319.3 L919.4 324.5 L919.7 333.7 L920.1 314.2 L920.4 361.7 L920.8 334.8 L921.1 331.6 L921.5 334.4 L921.8 330.1 L922.2 318.1 L922.5 314.7 L922.9 330.5 L923.2 337.0 L923.5 340.7 L923.9 333.3 L924.2 322.6 L924.6 323.6 L924.9 333.2 L925.2 323.3 L925.6 333.3 L925.9 324.8 L926.2 330.1 L926.6 333.3 L926.9 315.5 L927.2 327.6 L927.6 326.8 L927.9 328.5 L928.2 337.5 L928.6 336.0 L928.9 337.8 L929.2 327.1 L929.5 330.7 L929.9 320.9 L930.2 345.4 L930.5 317.3 L930.8 315.9 L931.2 328.4 L931.5 344.8 L931.8 322.2 L932.1 327.7 L932.4 338.5 L932.8 328.1 L933.1 335.5 L933.4 330.0 L933.7 351.5 L934.0 339.4 L934.3 337.8 L934.7 327.5 L935.0 325.3 L935.3 335.7 L935.6 317.3 L935.9 314.2 L936.2 346.8 L936.5 322.9 L936.8 317.3 L937.2 324.3 L937.5 337.5 L937.8 320.0 L938.1 335.8 L938.4 339.5 L938.7 356.1 L939.0 339.7 L939.3 319.1 L939.6 335.6 L939.9 333.1 L940.2 331.0 L940.5 322.0 L940.8 335.5 L941.1 328.4 L941.4 330.5 L941.7 329.8 L942.0 319.0 L942.3 323.5 L942.6 323.1 L942.9 330.2 L943.2 318.8 L943.5 331.8 L943.8 315.9 L944.1 314.7 L944.4 327.8 L944.7 330.7 L944.9 343.3 L945.2 331.2 L945.5 336.2 L945.8 344.6 L946.1 341.5 L946.4 336.5 L946.7 330.8 L947.0 323.9 L947.3 332.5 L947.5 321.4 L947.8 336.6 L948.1 346.0 L948.4 330.1 L948.7 336.0 L949.0 324.7 L949.3 357.9 L949.5 329.3 L949.8 329.5 L950.1 335.8 L950.4 331.3 L950.7 320.6 L950.9 332.3 L951.2 345.8 L951.5 324.2 L951.8 331.3 L952.1 326.1 L952.3 343.3 L952.6 312.7 L952.9 340.2 L953.2 321.7 L953.4 331.5 L953.7 344.5 L954.0 322.3 L954.2 322.2 L954.5 341.6 L954.8 334.2 L955.1 316.0 L955.3 326.6 L955.6 325.5 L955.9 331.6" fill="none" stroke="#0000FF" stroke-width="2" stroke-linejoin="miter" shape-rendering="crispEdges"/><path d="M97.8 183.4 L193.2 209.3 L249.0 244.3 L288.6 277.8 L319.3 306.8 L344.4 279.7 L365.6 293.2 L383.9 289.0 L400.1 295.7 L414.6 287.3 L427.8 299.5 L439.7 280.1 L450.7 283.1 L460.9 311.9 L470.4 261.8 L479.3 301.7 L487.7 309.2 L495.5 328.3 L503.0 355.7 L510.0 330.0 L516.7 303.8 L523.1 276.4 L529.2 294.0 L535.1 338.3 L540.7 323.5 L546.1 316.1 L551.3 304.6 L556.3 319.1 L561.1 316.5 L565.8 316.1 L570.3 285.7 L574.7 298.5 L578.9 352.7 L583.0 336.2 L587.0 297.1 L590.9 351.7 L594.7 300.5 L598.3 343.4 L601.9 318.5 L605.4 356.6 L608.8 315.5 L612.1 327.7 L615.3 293.0 L618.5 352.5 L621.6 308.6 L624.6 311.4 L627.6 338.7 L630.5 345.9 L633.3 325.4 L636.1 332.0 L638.8 313.2 L641.5 318.8 L644.1 328.6 L646.7 318.9 L649.2 341.3 L651.7 342.2 L654.1 310.0 L656.5 345.9 L658.9 318.0 L661.2 324.4 L663.4 314.7 L665.7 319.0 L667.9 307.4 L670.0 311.6 L672.2 298.4 L674.3 333.0 L676.3 314.3 L678.4 327.4 L680.4 337.4 L682.4 307.8 L684.3 309.2 L686.2 309.5 L688.1 288.6 L690.0 316.2 L691.9 317.8 L693.7 300.8 L695.5 310.2 L697.3 318.0 L699.0 319.7 L700.7 317.2 L702.5 315.4 L704.1 319.3 L705.8 322.1 L707.5 303.3 L709.1 328.5 L710.7 320.1 L712.3 345.6 L713.9 313.0 L715.4 352.4 L716.9 315.2 L718.5 298.7 L720.0 309.4 L721.5 335.3 L722.9 311.5 L724.4 305.7 L725.8 325.5 L727.3 306.7 L728.7 312.0 L730.1 310.7 L731.4 326.1 L732.8 332.3 L734.2 325.9 L735.5 314.0 L736.8 304.0 L738.2 315.7 L739.5 319.9 L740.8 318.5 L742.0 305.5 L743.3 325.0 L744.6 303.7 L745.8 313.7 L747.0 338.6 L748.3 322.0 L749.5 317.6 L750.7 336.4 L751.9 322.0 L753.0 309.2 L754.2 315.3 L755.4 318.1 L756.5 319.6 L757.7 307.3 L758.8 316.6 L759.9 315.9 L761.0 328.0 L762.1 326.4 L763.2 319.9 L764.3 321.9 L765.4 330.3 L766.5 329.9 L767.5 326.9 L768.6 319.7 L769.6 308.7 L770.7 323.2 L771.7 317.1 L772.7 308.9 L773.8 326.1 L774.8 319.6 L775.8 319.7 L776.8 319.7 L777.7 318.5 L778.7 321.3 L779.7 322.4 L780.7 309.9 L781.6 317.4 L782.6 325.8 L783.5 316.2 L784.5 330.5 L785.4 325.0 L786.3 321.8 L787.2 319.8 L788.1 314.9 L789.1 314.1 L790.0 312.8 L790.9 317.6 L791.7 317.9 L792.6 322.3 L793.5 324.2 L794.4 317.1 L795.2 323.4 L796.1 326.2 L797.0 319.3 L797.8 315.7 L798.7 314.3 L799.5 327.4 L800.3 324.3 L801.2 321.5 L802.0 324.2 L802.8 320.3 L803.6 317.8 L804.5 321.1 L805.3 318.1 L806.1 312.2 L806.9 331.5 L807.7 328.6 L808.4 327.1 L809.2 311.0 L810.0 326.7 L810.8 333.5 L811.5 330.2 L812.3 321.8 L813.1 328.1 L813.8 309.2 L814.6 320.2 L815.3 312.9 L816.1 330.5 L816.8 323.1 L817.6 309.4 L818.3 319.7 L819.0 319.1 L819.8 324.3 L820.5 321.1 L821.2 310.9 L821.9 324.2 L822.6 324.7 L823.3 334.4 L824.0 316.9 L824.7 314.4 L825.4 317.1 L826.1 327.3 L826.8 319.5 L827.5 317.0 L828.2 320.4 L828.9 318.8 L829.5 326.2 L830.2 313.0 L830.9 320.4 L831.5 322.6 L832.2 309.0 L832.9 320.2 L833.5 315.8 L834.2 318.7 L834.8 315.9 L835.5 327.3 L836.1 325.4 L836.8 324.6 L837.4 319.3 L838.0 304.9 L838.7 327.9 L839.3 326.0 L839.9 318.5 L840.5 313.1 L841.2 320.5 L841.8 319.1 L842.4 334.9 L843.0 315.9 L843.6 321.8 L844.2 332.7 L844.8 321.3 L845.4 322.5 L846.0 333.5 L846.6 329.1 L847.2 327.1 L847.8 336.0 L848.4 321.9 L849.0 306.8 L849.6 311.3 L850.2 318.7 L850.7 316.0 L851.3 327.5 L851.9 317.4 L852.5 331.6 L853.0 323.6 L853.6 307.4 L854.2 318.9 L854.7 332.0 L855.3 305.1 L855.9 323.0 L856.4 323.9 L857.0 321.9 L857.5 353.2 L858.1 340.7 L858.6 320.7 L859.2 325.8 L859.7 330.6 L860.2 324.6 L860.8 344.4 L861.3 332.6 L861.8 326.7 L862.4 333.1 L862.9 316.6 L863.4 328.2 L864.0 327.1 L864.5 336.0 L865.0 326.2 L865.5 307.8 L866.0 328.3 L866.6 325.4 L867.1 322.0 L867.6 316.7 L868.1 327.6 L868.6 326.1 L869.1 329.5 L869.6 324.9 L870.1 325.4 L870.6 339.7 L871.1 311.3 L871.6 310.7 L872.1 327.2 L872.6 335.2 L873.1 321.8 L873.6 330.3 L874.1 317.6 L874.6 338.3 L875.1 342.0 L875.5 336.5 L876.0 305.4 L876.5 321.3 L877.0 322.9 L877.5 327.4 L877.9 328.9 L878.4 321.9 L878.9 322.5 L879.3 343.0 L879.8 329.7 L880.3 355.1 L880.8 326.2 L881.2 330.5 L881.7 332.7 L882.1 322.8 L882.6 323.7 L883.1 313.4 L883.5 328.8 L884.0 332.1 L884.4 326.5 L884.9 319.3 L885.3 329.3 L885.8 328.1 L886.2 334.1 L886.7 328.5 L887.1 328.7 L887.6 326.7 L888.0 331.8 L888.4 323.0 L888.9 326.0 L889.3 316.2 L889.7 329.8 L890.2 325.3 L890.6 332.2 L891.0 320.2 L891.5 323.7 L891.9 326.1 L892.3 324.4 L892.8 327.4 L893.2 345.6 L893.6 310.7 L894.0 338.2 L894.5 333.9 L894.9 322.5 L895.3 326.4 L895.7 352.0 L896.1 322.3 L896.5 326.4 L897.0 321.2 L897.4 343.8 L897.8 338.7 L898.2 308.8 L898.6 354.8 L899.0 316.2 L899.4 307.7 L899.8 318.9 L900.2 327.5 L900.6 326.7 L901.0 330.1 L901.4 322.0 L901.8 325.8 L902.2 324.5 L902.6 329.9 L903.0 325.5 L903.4 326.6 L903.8 324.8 L904.2 335.1 L904.6 331.5 L905.0 324.2 L905.4 336.1 L905.8 341.5 L906.1 334.2 L906.5 328.3 L906.9 323.6 L907.3 333.8 L907.7 330.6 L908.1 319.3 L908.4 331.0 L908.8 327.0 L909.2 310.8 L909.6 315.8 L910.0 323.9 L910.3 336.8 L910.7 326.9 L911.1 328.2 L911.5 326.4 L911.8 332.0 L912.2 335.1 L912.6 340.5 L912.9 320.7 L913.3 338.8 L913.7 325.8 L914.0 321.7 L914.4 331.2 L914.8 329.6 L915.1 320.6 L915.5 319.4 L915.8 334.2 L916.2 323.9 L916.6 325.8 L916.9 328.8 L917.3 316.8 L917.6 338.7 L918.0 331.3 L918.3 334.3 L918.7 321.2 L919.0 337.0 L919.4 326.0 L919.7 316.5 L920.1 331.5 L920.4 325.1 L920.8 322.3 L921.1 327.0 L921.5 347.4 L921.8 347.1 L922.2 315.6 L922.5 339.3 L922.9 327.6 L923.2 314.0 L923.5 321.1 L923.9 321.5 L924.2 344.0 L924.6 332.5 L924.9 318.6 L925.2 341.4 L925.6 338.4 L925.9 321.4 L926.2 331.5 L926.6 338.3 L926.9 319.1 L927.2 331.5 L927.6 335.3 L927.9 326.6 L928.2 335.2 L928.6 318.9 L928.9 320.3 L929.2 331.5 L929.5 334.3 L929.9 331.4 L930.2 326.3 L930.5 330.3 L930.8 325.2 L931.2 325.0 L931.5 326.1 L931.8 325.8 L932.1 326.6 L932.4 331.6 L932.8 334.5 L933.1 334.7 L933.4 326.9 L933.7 329.5 L934.0 328.9 L934.3 325.1 L934.7 326.2 L935.0 332.9 L935.3 323.9 L935.6 320.0 L935.9 336.6 L936.2 334.9 L936.5 321.1 L936.8 335.7 L937.2 342.7 L937.5 323.0 L937.8 329.9 L938.1 322.8 L938.4 323.5 L938.7 317.1 L939.0 340.3 L939.3 334.2 L939.6 337.1 L939.9 316.2 L940.2 330.6 L940.5 334.3 L940.8 329.1 L941.1 324.3 L941.4 336.3 L941.7 328.2 L942.0 345.4 L942.3 340.2 L942.6 328.6 L942.9 326.5 L943.2 325.9 L943.5 335.8 L943.8 331.9 L944.1 329.3 L944.4 327.5 L944.7 335.1 L944.9 364.6 L945.2 339.6 L945.5 330.6 L945.8 332.5 L946.1 309.7 L946.4 331.3 L946.7 342.9 L947.0 332.6 L947.3 325.2 L947.5 332.5 L947.8 314.0 L948.1 334.2 L948.4 327.5 L948.7 320.3 L949.0 330.1 L949.3 331.2 L949.5 338.6 L949.8 334.4 L950.1 330.8 L950.4 326.5 L950.7 334.5 L950.9 355.4 L951.2 319.4 L951.5 323.7 L951.8 325.2 L952.1 331.9 L952.3 331.5 L952.6 341.4 L952.9 333.4 L953.2 331.1 L953.4 327.8 L953.7 334.8 L954.0 322.3 L954.2 316.6 L954.5 330.0 L954.8 336.6 L955.1 341.0 L955.3 325.1 L955.6 333.9 L955.9 350.3" fill="none" stroke="#0000D0" stroke-width="2" stroke-linejoin="miter" shape-rendering="crispEdges"/><path d="M97.8 191.8 L193.2 209.3 L249.0 254.2 L288.6 256.7 L319.3 261.8 L344.4 268.9 L365.6 288.7 L383.9 276.5 L400.1 281.5 L414.6 300.2 L427.8 336.2 L439.7 281.1 L450.7 308.2 L460.9 293.2 L470.4 306.6 L479.3 325.2 L487.7 364.4 L495.5 286.1 L503.0 391.3 L510.0 322.2 L516.7 327.1 L523.1 302.2 L529.2 326.9 L535.1 337.0 L540.7 307.4 L546.1 327.7 L551.3 313.1 L556.3 326.4 L561.1 343.8 L565.8 311.1 L570.3 298.1 L574.7 315.4 L578.9 326.6 L583.0 340.4 L587.0 360.5 L590.9 326.9 L594.7 298.5 L598.3 326.9 L601.9 340.2 L605.4 301.1 L608.8 327.3 L612.1 304.9 L615.3 293.8 L618.5 301.2 L621.6 317.5 L624.6 334.9 L627.6 329.2 L630.5 308.3 L633.3 305.1 L636.1 307.9 L638.8 321.2 L641.5 320.3 L644.1 311.4 L646.7 317.1 L649.2 329.9 L651.7 320.3 L654.1 295.2 L656.5 322.4 L658.9 311.5 L661.2 327.0 L663.4 318.9 L665.7 320.8 L667.9 342.2 L670.0 321.7 L672.2 315.5 L674.3 298.3 L676.3 307.8 L678.4 321.0 L680.4 315.9 L682.4 325.1 L684.3 340.2 L686.2 331.0 L688.1 308.5 L690.0 320.3 L691.9 320.0 L693.7 329.1 L695.5 314.5 L697.3 313.6 L699.0 307.1 L700.7 327.2 L702.5 315.8 L704.1 306.2 L705.8 334.7 L707.5 335.4 L709.1 320.5 L710.7 318.7 L712.3 311.4 L713.9 322.7 L715.4 329.0 L716.9 347.3 L718.5 309.0 L720.0 300.6 L721.5 324.9 L722.9 316.6 L724.4 341.2 L725.8 317.6 L727.3 326.5 L728.7 328.0 L730.1 316.4 L731.4 321.9 L732.8 325.7 L734.2 322.8 L735.5 326.0 L736.8 313.0 L738.2 308.4 L739.5 322.6 L740.8 324.2 L742.0 308.5 L743.3 311.8 L744.6 314.9 L745.8 322.1 L747.0 321.5 L748.3 328.0 L749.5 332.9 L750.7 330.6 L751.9 323.5 L753.0 328.9 L754.2 318.3 L755.4 324.4 L756.5 320.5 L757.7 335.2 L758.8 319.8 L759.9 311.8 L761.0 330.3 L762.1 333.3 L763.2 323.3 L764.3 324.0 L765.4 321.4 L766.5 318.5 L767.5 332.3 L768.6 321.9 L769.6 335.0 L770.7 317.4 L771.7 327.1 L772.7 326.6 L773.8 329.7 L774.8 325.0 L775.8 331.5 L776.8 320.0 L777.7 322.8 L778.7 324.6 L779.7 324.0 L780.7 323.2 L781.6 328.8 L782.6 314.9 L783.5 320.3 L784.5 334.3 L785.4 320.5 L786.3 324.9 L787.2 328.8 L788.1 326.9 L789.1 319.8 L790.0 331.5 L790.9 316.2 L791.7 317.9 L792.6 332.4 L793.5 326.3 L794.4 321.7 L795.2 332.9 L796.1 337.2 L797.0 317.3 L797.8 321.0 L798.7 330.9 L799.5 325.7 L800.3 332.5 L801.2 326.9 L802.0 331.0 L802.8 338.4 L803.6 314.7 L804.5 346.0 L805.3 328.4 L806.1 327.9 L806.9 345.0 L807.7 322.6 L808.4 309.9 L809.2 324.3 L810.0 320.1 L810.8 335.3 L811.5 325.4 L812.3 325.1 L813.1 327.0 L813.8 343.8 L814.6 338.4 L815.3 343.9 L816.1 317.8 L816.8 328.1 L817.6 334.4 L818.3 338.8 L819.0 335.8 L819.8 327.1 L820.5 314.5 L821.2 334.2 L821.9 330.1 L822.6 333.4 L823.3 308.2 L824.0 336.1 L824.7 323.7 L825.4 315.4 L826.1 318.8 L826.8 330.5 L827.5 325.5 L828.2 331.8 L828.9 324.6 L829.5 324.6 L830.2 330.2 L830.9 325.7 L831.5 345.5 L832.2 332.2 L832.9 319.4 L833.5 323.3 L834.2 334.4 L834.8 332.5 L835.5 324.8 L836.1 315.8 L836.8 329.9 L837.4 329.8 L838.0 339.4 L838.7 314.1 L839.3 321.5 L839.9 330.6 L840.5 323.4 L841.2 334.8 L841.8 327.9 L842.4 325.4 L843.0 327.6 L843.6 315.1 L844.2 332.1 L844.8 326.7 L845.4 328.2 L846.0 326.0 L846.6 335.3 L847.2 339.8 L847.8 336.4 L848.4 331.3 L849.0 324.9 L849.6 313.2 L850.2 353.7 L850.7 319.8 L851.3 329.8 L851.9 339.2 L852.5 333.1 L853.0 321.7 L853.6 331.2 L854.2 344.9 L854.7 324.9 L855.3 330.5 L855.9 328.7 L856.4 341.1 L857.0 344.1 L857.5 312.7 L858.1 332.8 L858.6 327.6 L859.2 329.7 L859.7 325.2 L860.2 327.8 L860.8 318.7 L861.3 317.4 L861.8 333.1 L862.4 324.6 L862.9 325.9 L863.4 329.5 L864.0 323.1 L864.5 330.7 L865.0 318.6 L865.5 327.0 L866.0 323.6 L866.6 336.3 L867.1 340.4 L867.6 315.0 L868.1 322.7 L868.6 333.0 L869.1 326.3 L869.6 343.3 L870.1 337.0 L870.6 334.5 L871.1 313.6 L871.6 334.7 L872.1 330.2 L872.6 322.1 L873.1 312.5 L873.6 323.6 L874.1 340.5 L874.6 323.9 L875.1 320.7 L875.5 326.2 L876.0 324.9 L876.5 331.7 L877.0 331.0 L877.5 340.0 L877.9 328.1 L878.4 317.6 L878.9 326.3 L879.3 326.4 L879.8 322.5 L880.3 323.7 L880.8 325.0 L881.2 327.2 L881.7 330.8 L882.1 319.3 L882.6 333.9 L883.1 327.5 L883.5 341.9 L884.0 339.8 L884.4 332.3 L884.9 323.4 L885.3 329.4 L885.8 350.3 L886.2 327.7 L886.7 326.1 L887.1 320.4 L887.6 326.8 L888.0 324.9 L888.4 370.6 L888.9 324.6 L889.3 334.0 L889.7 327.5 L890.2 329.5 L890.6 330.7 L891.0 337.2 L891.5 325.2 L891.9 318.7 L892.3 331.5 L892.8 336.0 L893.2 325.1 L893.6 336.5 L894.0 319.4 L894.5 328.0 L894.9 328.0 L895.3 328.7 L895.7 329.7 L896.1 311.1 L896.5 337.9 L897.0 337.9 L897.4 335.6 L897.8 331.8 L898.2 337.0 L898.6 340.2 L899.0 321.3 L899.4 325.4 L899.8 333.3 L900.2 304.8 L900.6 329.7 L901.0 333.5 L901.4 330.4 L901.8 334.5 L902.2 335.7 L902.6 340.9 L903.0 335.3 L903.4 335.9 L903.8 330.9 L904.2 328.8 L904.6 336.0 L905.0 329.2 L905.4 335.2 L905.8 322.9 L906.1 327.0 L906.5 321.2 L906.9 319.6 L907.3 342.3 L907.7 319.8 L908.1 333.9 L908.4 350.1 L908.8 327.0 L909.2 320.9 L909.6 370.7 L910.0 330.5 L910.3 327.9 L910.7 317.8 L911.1 342.8 L911.5 322.0 L911.8 322.6 L912.2 355.0 L912.6 342.2 L912.9 335.7 L913.3 329.5 L913.7 321.4 L914.0 317.4 L914.4 327.0 L914.8 335.7 L915.1 337.8 L915.5 321.9 L915.8 335.7 L916.2 332.6 L916.6 328.8 L916.9 322.4 L917.3 321.7 L917.6 327.0 L918.0 342.1 L918.3 318.9 L918.7 337.3 L919.0 327.6 L919.4 324.9 L919.7 324.2 L920.1 327.5 L920.4 323.4 L920.8 331.7 L921.1 331.9 L921.5 325.5 L921.8 333.8 L922.2 334.0 L922.5 330.8 L922.9 335.9 L923.2 333.9 L923.5 325.4 L923.9 332.3 L924.2 321.9 L924.6 327.5 L924.9 328.3 L925.2 332.1 L925.6 331.4 L925.9 339.7 L926.2 341.4 L926.6 338.6 L926.9 330.3 L927.2 320.7 L927.6 339.8 L927.9 345.7 L928.2 324.5 L928.6 335.6 L928.9 328.3 L929.2 330.7 L929.5 342.7 L929.9 326.7 L930.2 326.4 L930.5 324.6 L930.8 330.0 L931.2 320.7 L931.5 327.7 L931.8 336.5 L932.1 329.1 L932.4 323.4 L932.8 329.3 L933.1 335.2 L933.4 327.8 L933.7 359.0 L934.0 330.5 L934.3 329.4 L934.7 338.3 L935.0 314.9 L935.3 320.3 L935.6 332.1 L935.9 317.4 L936.2 328.7 L936.5 324.6 L936.8 323.5 L937.2 313.7 L937.5 334.9 L937.8 335.4 L938.1 335.2 L938.4 310.8 L938.7 313.5 L939.0 337.0 L939.3 329.1 L939.6 332.2 L939.9 326.4 L940.2 330.3 L940.5 322.7 L940.8 328.2 L941.1 329.8 L941.4 342.6 L941.7 341.5 L942.0 323.4 L942.3 319.9 L942.6 312.4 L942.9 337.7 L943.2 330.2 L943.5 321.5 L943.8 325.4 L944.1 328.5 L944.4 327.1 L944.7 346.0 L944.9 333.8 L945.2 328.9 L945.5 315.3 L945.8 312.5 L946.1 313.3 L946.4 336.3 L946.7 345.8 L947.0 328.0 L947.3 330.0 L947.5 335.7 L947.8 355.3 L948.1 337.5 L948.4 324.9 L948.7 321.8 L949.0 328.8 L949.3 325.2 L949.5 328.2 L949.8 332.4 L950.1 335.2 L950.4 327.7 L950.7 376.5 L950.9 332.9 L951.2 341.7 L951.5 315.0 L951.8 333.1 L952.1 316.4 L952.3 326.7 L952.6 327.1 L952.9 322.8 L953.2 323.0 L953.4 328.3 L953.7 322.5 L954.0 328.5 L954.2 336.9 L954.5 327.3 L954.8 324.0 L955.1 330.1 L955.3 327.9 L955.6 334.9 L955.9 344.8" fill="none" stroke="#0000FF" stroke-width="2" stroke-linejoin="miter" shape-rendering="crispEdges"/><path d="M97.8 194.7 L193.2 226.7 L249.0 251.2 L288.6 286.8 L319.3 296.0 L344.4 278.4 L365.6 316.0 L383.9 307.2 L400.1 301.6 L414.6 296.5 L427.8 340.2 L439.7 289.5 L450.7 295.8 L460.9 350.0 L470.4 291.0 L479.3 318.6 L487.7 307.5 L495.5 286.8 L503.0 286.5 L510.0 266.3 L516.7 322.0 L523.1 316.8 L529.2 294.4 L535.1 310.3 L540.7 324.3 L546.1 302.8 L551.3 296.7 L556.3 310.5 L561.1 322.3 L565.8 298.5 L570.3 289.4 L574.7 320.2 L578.9 328.0 L583.0 313.7 L587.0 319.9 L590.9 290.4 L594.7 314.1 L598.3 306.1 L601.9 332.8 L605.4 319.4 L608.8 297.3 L612.1 313.8 L615.3 311.9 L618.5 304.9 L621.6 330.0 L624.6 320.2 L627.6 331.5 L630.5 334.7 L633.3 331.2 L636.1 283.2 L638.8 309.7 L641.5 331.9 L644.1 316.0 L646.7 309.1 L649.2 319.9 L651.7 322.2 L654.1 323.0 L656.5 345.1 L658.9 345.6 L661.2 302.6 L663.4 368.1 L665.7 309.1 L667.9 330.9 L670.0 314.1 L672.2 310.3 L674.3 338.2 L676.3 311.0 L678.4 320.8 L680.4 318.4 L682.4 309.0 L684.3 323.5 L686.2 320.0 L688.1 296.3 L690.0 326.0 L691.9 324.6 L693.7 316.3 L695.5 326.9 L697.3 345.8 L699.0 316.3 L700.7 316.6 L702.5 314.1 L704.1 324.1 L705.8 324.7 L707.5 330.3 L709.1 306.4 L710.7 315.6 L712.3 338.4 L713.9 327.3 L715.4 310.9 L716.9 327.8 L718.5 328.5 L720.0 312.8 L721.5 323.1 L722.9 329.9 L724.4 316.4 L725.8 334.8 L727.3 312.3 L728.7 320.6 L730.1 325.6 L731.4 313.7 L732.8 328.6 L734.2 311.5 L735.5 322.5 L736.8 331.3 L738.2 338.2 L739.5 315.2 L740.8 338.5 L742.0 322.6 L743.3 340.8 L744.6 328.0 L745.8 330.2 L747.0 325.0 L748.3 326.5 L749.5 315.8 L750.7 314.6 L751.9 333.5 L753.0 322.1 L754.2 325.4 L755.4 328.5 L756.5 304.9 L757.7 316.7 L758.8 312.7 L759.9 316.3 L761.0 329.5 L762.1 323.7 L763.2 330.3 L764.3 317.5 L765.4 326.0 L766.5 308.5 L767.5 365.0 L768.6 314.7 L769.6 331.4 L770.7 337.8 L771.7 333.9 L772.7 326.8 L773.8 307.3 L774.8 327.8 L775.8 331.8 L776.8 338.1 L777.7 320.1 L778.7 336.0 L779.7 320.6 L780.7 335.6 L781.6 317.5 L782.6 331.9 L783.5 316.2 L784.5 334.8 L785.4 313.4 L786.3 323.7 L787.2 323.6 L788.1 335.1 L789.1 325.3 L790.0 332.2 L790.9 323.8 L791.7 319.8 L792.6 326.8 L793.5 322.6 L794.4 331.1 L795.2 347.1 L796.1 335.0 L797.0 324.4 L797.8 320.5 L798.7 324.5 L799.5 324.6 L800.3 318.9 L801.2 321.4 L802.0 341.9 L802.8 315.0 L803.6 317.4 L804.5 314.3 L805.3 314.2 L806.1 314.7 L806.9 322.4 L807.7 315.1 L808.4 307.8 L809.2 330.6 L810.0 302.4 L810.8 325.4 L811.5 333.1 L812.3 337.0 L813.1 323.2 L813.8 321.3 L814.6 315.5 L815.3 316.3 L816.1 323.9 L816.8 357.4 L817.6 315.5 L818.3 327.3 L819.0 310.6 L819.8 322.1 L820.5 313.0 L821.2 330.9 L821.9 315.6 L822.6 328.7 L823.3 325.5 L824.0 326.1 L824.7 318.6 L825.4 328.9 L826.1 315.5 L826.8 320.2 L827.5 329.5 L828.2 343.2 L828.9 324.2 L829.5 323.6 L830.2 324.8 L830.9 320.9 L831.5 320.2 L832.2 332.9 L832.9 330.5 L833.5 318.7 L834.2 313.2 L834.8 316.3 L835.5 330.4 L836.1 318.1 L836.8 307.2 L837.4 321.6 L838.0 320.5 L838.7 316.2 L839.3 320.3 L839.9 315.7 L840.5 331.4 L841.2 318.6 L841.8 314.7 L842.4 322.6 L843.0 325.7 L843.6 332.3 L844.2 312.4 L844.8 333.3 L845.4 314.6 L846.0 303.4 L846.6 320.9 L847.2 315.7 L847.8 318.5 L848.4 331.7 L849.0 332.6 L849.6 333.7 L850.2 313.4 L850.7 314.6 L851.3 322.5 L851.9 318.3 L852.5 328.7 L853.0 339.2 L853.6 332.5 L854.2 326.1 L854.7 321.6 L855.3 314.3 L855.9 333.0 L856.4 316.3 L857.0 334.4 L857.5 332.1 L858.1 313.7 L858.6 325.3 L859.2 319.5 L859.7 325.1 L860.2 327.1 L860.8 333.3 L861.3 316.4 L861.8 325.5 L862.4 326.5 L862.9 316.4 L863.4 348.9 L864.0 308.3 L864.5 322.2 L865.0 331.9 L865.5 312.6 L866.0 313.8 L866.6 324.4 L867.1 319.6 L867.6 317.5 L868.1 320.8 L868.6 327.9 L869.1 331.5 L869.6 343.6 L870.1 317.5 L870.6 333.6 L871.1 325.3 L871.6 315.2 L872.1 330.9 L872.6 321.3 L873.1 335.9 L873.6 313.3 L874.1 314.8 L874.6 327.5 L875.1 329.5 L875.5 333.8 L876.0 362.2 L876.5 339.2 L877.0 333.8 L877.5 321.2 L877.9 317.1 L878.4 320.3 L878.9 315.8 L879.3 323.3 L879.8 340.6 L880.3 314.7 L880.8 322.6 L881.2 333.2 L881.7 316.2 L882.1 326.0 L882.6 320.6 L883.1 323.4 L883.5 310.3 L884.0 326.3 L884.4 327.4 L884.9 320.7 L885.3 318.8 L885.8 316.9 L886.2 322.1 L886.7 305.7 L887.1 334.9 L887.6 311.0 L888.0 358.4 L888.4 330.1 L888.9 309.6 L889.3 333.9 L889.7 328.1 L890.2 340.7 L890.6 324.4 L891.0 323.4 L891.5 329.8 L891.9 331.6 L892.3 321.7 L892.8 318.2 L893.2 335.1 L893.6 315.4 L894.0 318.7 L894.5 324.9 L894.9 335.4 L895.3 320.7 L895.7 315.5 L896.1 329.6 L896.5 316.0 L897.0 318.2 L897.4 315.8 L897.8 329.5 L898.2 320.5 L898.6 319.7 L899.0 326.9 L899.4 329.6 L899.8 324.4 L900.2 331.5 L900.6 334.7 L901.0 309.8 L901.4 333.1 L901.8 328.1 L902.2 324.3 L902.6 321.7 L903.0 329.0 L903.4 333.9 L903.8 331.3 L904.2 326.6 L904.6 329.9 L905.0 326.8 L905.4 339.7 L905.8 335.5 L906.1 333.7 L906.5 330.5 L906.9 310.9 L907.3 330.0 L907.7 343.7 L908.1 328.4 L908.4 333.0 L908.8 313.6 L909.2 331.2 L909.6 325.6 L910.0 312.0 L910.3 324.1 L910.7 341.1 L911.1 320.7 L911.5 329.9 L911.8 326.2 L912.2 323.8 L912.6 331.1 L912.9 315.7 L913.3 344.1 L913.7 324.3 L914.0 326.6 L914.4 337.8 L914.8 324.8 L915.1 335.8 L915.5 325.5 L915.8 349.6 L916.2 324.1 L916.6 340.7 L916.9 321.8 L917.3 328.7 L917.6 325.8 L918.0 317.6 L918.3 338.5 L918.7 310.6 L919.0 329.9 L919.4 335.0 L919.7 321.4 L920.1 328.5 L920.4 332.1 L920.8 337.8 L921.1 327.7 L921.5 335.0 L921.8 317.2 L922.2 322.4 L922.5 339.1 L922.9 339.1 L923.2 326.4 L923.5 334.1 L923.9 333.9 L924.2 326.1 L924.6 324.4 L924.9 333.6 L925.2 329.3 L925.6 339.8 L925.9 332.1 L926.2 345.7 L926.6 331.9 L926.9 336.7 L927.2 319.3 L927.6 338.1 L927.9 330.3 L928.2 326.2 L928.6 338.1 L928.9 324.0 L929.2 333.7 L929.5 323.7 L929.9 318.3 L930.2 326.7 L930.5 337.2 L930.8 328.3 L931.2 339.5 L931.5 329.8 L931.8 330.9 L932.1 339.0 L932.4 338.8 L932.8 324.8 L933.1 328.5 L933.4 345.8 L933.7 331.8 L934.0 319.5 L934.3 334.4 L934.7 340.2 L935.0 321.3 L935.3 347.4 L935.6 336.6 L935.9 335.1 L936.2 322.9 L936.5 332.2 L936.8 334.1 L937.2 331.0 L937.5 339.1 L937.8 340.3 L938.1 318.0 L938.4 341.2 L938.7 331.1 L939.0 333.9 L939.3 322.0 L939.6 346.6 L939.9 346.4 L940.2 341.4 L940.5 330.0 L940.8 332.3 L941.1 324.2 L941.4 344.2 L941.7 333.5 L942.0 332.2 L942.3 336.5 L942.6 326.2 L942.9 317.3 L943.2 335.8 L943.5 325.8 L943.8 327.3 L944.1 329.4 L944.4 328.9 L944.7 338.1 L944.9 333.5 L945.2 341.3 L945.5 335.2 L945.8 332.6 L946.1 338.7 L946.4 342.9 L946.7 329.1 L947.0 355.8 L947.3 331.0 L947.5 354.0 L947.8 345.0 L948.1 318.1 L948.4 330.1 L948.7 323.0 L949.0 334.6 L949.3 333.6 L949.5 337.4 L949.8 324.7 L950.1 341.9 L950.4 340.0 L950.7 330.8 L950.9 323.3 L951.2 364.0 L951.5 335.4 L951.8 334.4 L952.1 336.4 L952.3 314.3 L952.6 322.7 L952.9 338.1 L953.2 325.1 L953.4 325.0 L953.7 331.3 L954.0 324.6 L954.2 335.6 L954.5 335.6 L954.8 333.1 L955.1 334.3 L955.3 329.7 L955.6 330.7 L955.9 344.4" fill="none" stroke="#0000A0" stroke-width="2" stroke-linejoin="miter" shape-rendering="crispEdges"/><path d="M97.8 184.5 L193.2 212.6 L249.0 272.4 L288.6 284.7 L319.3 279.7 L344.4 307.5 L365.6 314.2 L383.9 288.5 L400.1 309.4 L414.6 285.2 L427.8 334.4 L439.7 303.7 L450.7 281.3 L460.9 298.3 L470.4 285.5 L479.3 330.2 L487.7 298.4 L495.5 326.7 L503.0 274.4 L510.0 283.5 L516.7 294.7 L523.1 296.5 L529.2 265.7 L535.1 300.2 L540.7 307.6 L546.1 316.6 L551.3 296.3 L556.3 314.2 L561.1 292.3 L565.8 296.3 L570.3 294.9 L574.7 324.9 L578.9 337.3 L583.0 312.7 L587.0 269.3 L590.9 302.3 L594.7 311.2 L598.3 321.2 L601.9 335.2 L605.4 316.6 L608.8 338.8 L612.1 353.7 L615.3 315.1 L618.5 310.7 L621.6 307.4 L624.6 318.7 L627.6 308.2 L630.5 308.1 L633.3 298.8 L636.1 333.8 L638.8 331.0 L641.5 304.5 L644.1 311.8 L646.7 345.2 L649.2 305.5 L651.7 304.5 L654.1 317.4 L656.5 321.0 L658.9 333.3 L661.2 342.7 L663.4 324.5 L665.7 329.7 L667.9 319.6 L670.0 348.6 L672.2 310.1 L674.3 330.2 L676.3 334.7 L678.4 332.2 L680.4 318.3 L682.4 332.4 L684.3 320.3 L686.2 321.4 L688.1 327.9 L690.0 329.6 L691.9 307.2 L693.7 311.5 L695.5 340.4 L697.3 311.3 L699.0 306.6 L700.7 306.1 L702.5 332.2 L704.1 304.8 L705.8 326.2 L707.5 322.2 L709.1 323.4 L710.7 328.7 L712.3 336.2 L713.9 344.0 L715.4 352.1 L716.9 323.0 L718.5 321.5 L720.0 326.3 L721.5 321.2 L722.9 315.1 L724.4 315.1 L725.8 318.7 L727.3 303.3 L728.7 343.1 L730.1 311.0 L731.4 337.5 L732.8 324.9 L734.2 319.2 L735.5 358.0 L736.8 305.3 L738.2 330.1 L739.5 333.3 L740.8 322.0 L742.0 319.6 L743.3 327.3 L744.6 330.8 L745.8 317.7 L747.0 310.0 L748.3 325.2 L749.5 337.3 L750.7 332.4 L751.9 333.2 L753.0 317.4 L754.2 318.9 L755.4 312.1 L756.5 319.2 L757.7 330.7 L758.8 322.4 L759.9 321.3 L761.0 329.0 L762.1 324.6 L763.2 315.3 L764.3 315.6 L765.4 337.1 L766.5 313.9 L767.5 319.2 L768.6 340.2 L769.6 328.2 L770.7 315.2 L771.7 325.1 L772.7 321.8 L773.8 321.7 L774.8 314.8 L775.8 333.9 L776.8 325.7 L777.7 327.0 L778.7 333.4 L779.7 339.9 L780.7 318.0 L781.6 337.2 L782.6 323.9 L783.5 331.7 L784.5 327.4 L785.4 335.4 L786.3 332.3 L787.2 325.9 L788.1 315.5 L789.1 320.3 L790.0 330.6 L790.9 323.4 L791.7 328.9 L792.6 317.8 L793.5 334.5 L794.4 326.5 L795.2 337.5 L796.1 318.2 L797.0 332.2 L797.8 322.5 L798.7 319.6 L799.5 326.9 L800.3 318.5 L801.2 315.3 L802.0 322.8 L802.8 327.6 L803.6 327.6 L804.5 310.0 L805.3 326.6 L806.1 338.2 L806.9 336.9 L807.7 315.1 L808.4 333.1 L809.2 321.6 L810.0 318.8 L810.8 328.6 L811.5 328.7 L812.3 331.7 L813.1 322.8 L813.8 325.5 L814.6 318.9 L815.3 312.1 L816.1 308.0 L816.8 326.7 L817.6 326.2 L818.3 323.9 L819.0 337.6 L819.8 329.2 L820.5 318.4 L821.2 336.2 L821.9 323.8 L822.6 331.4 L823.3 315.8 L824.0 333.7 L824.7 324.6 L825.4 321.3 L826.1 318.2 L826.8 313.3 L827.5 333.9 L828.2 327.6 L828.9 320.5 L829.5 305.4 L830.2 318.0 L830.9 324.3 L831.5 335.3 L832.2 326.3 L832.9 330.9 L833.5 319.6 L834.2 326.0 L834.8 328.9 L835.5 330.9 L836.1 322.9 L836.8 327.2 L837.4 338.3 L838.0 333.7 L838.7 326.8 L839.3 328.9 L839.9 337.6 L840.5 328.4 L841.2 335.2 L841.8 321.2 L842.4 326.3 L843.0 330.2 L843.6 332.0 L844.2 329.0 L844.8 327.7 L845.4 327.9 L846.0 323.0 L846.6 323.8 L847.2 312.2 L847.8 331.2 L848.4 319.7 L849.0 357.8 L849.6 336.5 L850.2 345.5 L850.7 330.7 L851.3 332.8 L851.9 326.0 L852.5 324.6 L853.0 322.5 L853.6 324.5 L854.2 330.3 L854.7 346.6 L855.3 329.6 L855.9 320.8 L856.4 343.4 L857.0 323.5 L857.5 313.4 L858.1 333.5 L858.6 318.2 L859.2 336.5 L859.7 318.8 L860.2 333.4 L860.8 321.4 L861.3 335.8 L861.8 341.7 L862.4 336.8 L862.9 340.4 L863.4 332.8 L864.0 323.6 L864.5 324.6 L865.0 327.3 L865.5 335.3 L866.0 317.6 L866.6 318.2 L867.1 321.4 L867.6 345.9 L868.1 317.3 L868.6 315.2 L869.1 329.1 L869.6 341.8 L870.1 327.9 L870.6 323.8 L871.1 326.5 L871.6 316.2 L872.1 337.3 L872.6 322.0 L873.1 316.1 L873.6 336.5 L874.1 323.8 L874.6 338.1 L875.1 319.1 L875.5 315.5 L876.0 330.2 L876.5 333.1 L877.0 332.8 L877.5 323.6 L877.9 317.1 L878.4 336.3 L878.9 333.8 L879.3 332.3 L879.8 333.5 L880.3 333.1 L880.8 335.4 L881.2 331.0 L881.7 321.1 L882.1 340.1 L882.6 327.3 L883.1 328.8 L883.5 323.9 L884.0 341.7 L884.4 327.9 L884.9 330.8 L885.3 341.3 L885.8 330.1 L886.2 331.6 L886.7 348.5 L887.1 324.9 L887.6 338.4 L888.0 336.5 L888.4 323.9 L888.9 321.8 L889.3 324.2 L889.7 334.7 L890.2 323.8 L890.6 342.5 L891.0 329.5 L891.5 344.9 L891.9 320.9 L892.3 322.2 L892.8 333.8 L893.2 316.7 L893.6 334.6 L894.0 323.6 L894.5 331.7 L894.9 333.1 L895.3 328.9 L895.7 328.1 L896.1 321.1 L896.5 332.2 L897.0 333.2 L897.4 364.5 L897.8 326.3 L898.2 321.4 L898.6 331.7 L899.0 324.4 L899.4 337.5 L899.8 328.3 L900.2 329.2 L900.6 334.4 L901.0 343.5 L901.4 322.0 L901.8 329.1 L902.2 330.6 L902.6 337.7 L903.0 320.7 L903.4 343.2 L903.8 331.8 L904.2 345.2 L904.6 330.3 L905.0 324.6 L905.4 352.2 L905.8 310.6 L906.1 322.8 L906.5 323.9 L906.9 318.6 L907.3 329.1 L907.7 328.9 L908.1 327.8 L908.4 334.4 L908.8 326.4 L909.2 350.5 L909.6 360.0 L910.0 337.6 L910.3 329.8 L910.7 341.1 L911.1 347.4 L911.5 323.5 L911.8 325.4 L912.2 330.4 L912.6 339.0 L912.9 328.9 L913.3 334.9 L913.7 328.9 L914.0 319.4 L914.4 340.6 L914.8 329.8 L915.1 330.2 L915.5 328.1 L915.8 333.5 L916.2 327.3 L916.6 342.1 L916.9 328.6 L917.3 339.6 L917.6 322.8 L918.0 339.6 L918.3 327.4 L918.7 337.7 L919.0 324.1 L919.4 330.1 L919.7 340.4 L920.1 336.3 L920.4 328.5 L920.8 318.8 L921.1 338.7 L921.5 332.7 L921.8 338.8 L922.2 335.6 L922.5 339.1 L922.9 369.2 L923.2 329.4 L923.5 340.3 L923.9 352.5 L924.2 335.1 L924.6 326.3 L924.9 326.2 L925.2 328.0 L925.6 323.5 L925.9 345.8 L926.2 332.5 L926.6 326.5 L926.9 325.8 L927.2 320.2 L927.6 332.5 L927.9 324.4 L928.2 333.9 L928.6 323.2 L928.9 349.5 L929.2 344.3 L929.5 343.5 L929.9 343.2 L930.2 334.6 L930.5 326.4 L930.8 344.2 L931.2 325.6 L931.5 329.6 L931.8 327.9 L932.1 331.6 L932.4 330.0 L932.8 350.4 L933.1 338.4 L933.4 339.0 L933.7 322.2 L934.0 336.4 L934.3 335.4 L934.7 332.3 L935.0 331.7 L935.3 333.4 L935.6 334.7 L935.9 321.7 L936.2 335.7 L936.5 336.4 L936.8 321.3 L937.2 334.7 L937.5 333.5 L937.8 331.6 L938.1 335.0 L938.4 329.3 L938.7 334.9 L939.0 330.2 L939.3 329.0 L939.6 327.4 L939.9 345.8 L940.2 328.2 L940.5 336.0 L940.8 326.0 L941.1 336.0 L941.4 335.7 L941.7 328.8 L942.0 370.2 L942.3 335.8 L942.6 322.8 L942.9 339.1 L943.2 323.1 L943.5 338.7 L943.8 326.6 L944.1 322.0 L944.4 338.6 L944.7 328.3 L944.9 322.3 L945.2 330.0 L945.5 328.7 L945.8 330.0 L946.1 327.5 L946.4 332.5 L946.7 339.6 L947.0 344.7 L947.3 329.7 L947.5 337.5 L947.8 354.0 L948.1 327.8 L948.4 340.0 L948.7 323.9 L949.0 326.8 L949.3 340.9 L949.5 340.6 L949.8 345.9 L950.1 333.3 L950.4 332.3 L950.7 343.0 L950.9 340.0 L951.2 343.7 L951.5 343.4 L951.8 323.9 L952.1 331.3 L952.3 347.1 L952.6 344.0 L952.9 369.5 L953.2 336.2 L953.4 339.9 L953.7 330.9 L954.0 322.8 L954.2 336.7 L954.5 333.7 L954.8 330.0 L955.1 324.5 L955.3 335.8 L955.6 321.3 L955.9 338.8" fill="none" stroke="#0000FF" stroke-width="2" stroke-linejoin="miter" shape-rendering="crispEdges"/><path d="M97.8 181.8 L193.2 205.9 L249.0 268.0 L288.6 299.6 L319.3 311.9 L344.4 304.9 L365.6 316.0 L383.9 298.4 L400.1 294.8 L414.6 284.1 L427.8 291.7 L439.7 297.2 L450.7 303.3 L460.9 291.5 L470.4 294.0 L479.3 264.6 L487.7 304.1 L495.5 343.7 L503.0 277.3 L510.0 286.5 L516.7 327.7 L523.1 273.4 L529.2 290.7 L535.1 306.5 L540.7 292.2 L546.1 289.9 L551.3 290.7 L556.3 263.4 L561.1 274.8 L565.8 320.6 L570.3 306.4 L574.7 292.8 L578.9 286.4 L583.0 370.4 L587.0 338.2 L590.9 330.6 L594.7 296.1 L598.3 304.3 L601.9 348.6 L605.4 364.2 L608.8 304.8 L612.1 323.9 L615.3 277.1 L618.5 297.4 L621.6 321.8 L624.6 326.5 L627.6 284.1 L630.5 318.1 L633.3 293.2 L636.1 286.1 L638.8 323.5 L641.5 328.6 L644.1 323.1 L646.7 297.5 L649.2 324.9 L651.7 304.2 L654.1 311.0 L656.5 301.7 L658.9 258.4 L661.2 296.6 L663.4 296.1 L665.7 316.6 L667.9 312.4 L670.0 302.9 L672.2 293.8 L674.3 326.4 L676.3 290.6 L678.4 332.2 L680.4 310.7 L682.4 305.6 L684.3 325.3 L686.2 298.1 L688.1 339.6 L690.0 319.6 L691.9 311.9 L693.7 309.3 L695.5 302.1 L697.3 317.9 L699.0 292.6 L700.7 333.7 L702.5 319.8 L704.1 328.8 L705.8 304.0 L707.5 316.4 L709.1 318.7 L710.7 316.3 L712.3 339.1 L713.9 310.0 L715.4 356.2 L716.9 299.9 L718.5 306.3 L720.0 307.1 L721.5 351.5 L722.9 320.5 L724.4 351.9 L725.8 312.2 L727.3 320.7 L728.7 324.4 L730.1 310.9 L731.4 324.5 L732.8 328.4 L734.2 335.6 L735.5 328.6 L736.8 328.7 L738.2 322.5 L739.5 322.9 L740.8 357.4 L742.0 314.1 L743.3 311.2 L744.6 316.3 L745.8 327.5 L747.0 328.7 L748.3 332.3 L749.5 335.1 L750.7 330.7 L751.9 325.1 L753.0 323.2 L754.2 321.1 L755.4 318.5 L756.5 315.9 L757.7 321.4 L758.8 330.4 L759.9 319.1 L761.0 323.0 L762.1 328.9 L763.2 307.8 L764.3 308.6 L765.4 330.5 L766.5 325.5 L767.5 321.2 L768.6 325.8 L769.6 323.9 L770.7 333.8 L771.7 313.5 L772.7 323.9 L773.8 322.8 L774.8 316.0 L775.8 332.1 L776.8 337.3 L777.7 319.3 L778.7 334.1 L779.7 333.3 L780.7 317.7 L781.6 334.4 L782.6 334.7 L783.5 328.4 L784.5 323.4 L785.4 332.0 L786.3 329.3 L787.2 329.9 L788.1 322.1 L789.1 328.7 L790.0 322.5 L790.9 317.0 L791.7 315.4 L792.6 331.0 L793.5 332.1 L794.4 335.2 L795.2 326.6 L796.1 313.3 L797.0 335.6 L797.8 317.9 L798.7 335.3 L799.5 316.5 L800.3 332.0 L801.2 329.7 L802.0 314.2 L802.8 329.7 L803.6 316.9 L804.5 325.1 L805.3 324.0 L806.1 314.7 L806.9 326.2 L807.7 325.6 L808.4 326.4 L809.2 317.1 L810.0 336.7 L810.8 352.3 L811.5 332.3 L812.3 327.7 L813.1 333.1 L813.8 315.8 L814.6 330.1 L815.3 333.2 L816.1 336.6 L816.8 325.1 L817.6 322.5 L818.3 320.3 L819.0 332.5 L819.8 333.8 L820.5 340.6 L821.2 324.9 L821.9 329.1 L822.6 327.1 L823.3 323.9 L824.0 325.8 L824.7 319.7 L825.4 318.8 L826.1 342.6 L826.8 319.0 L827.5 332.1 L828.2 331.4 L828.9 328.2 L829.5 329.4 L830.2 325.2 L830.9 324.4 L831.5 336.6 L832.2 327.5 L832.9 327.8 L833.5 309.1 L834.2 340.3 L834.8 328.1 L835.5 347.8 L836.1 331.5 L836.8 327.8 L837.4 318.1 L838.0 339.1 L838.7 318.1 L839.3 344.0 L839.9 322.6 L840.5 322.9 L841.2 307.5 L841.8 329.0 L842.4 332.2 L843.0 332.3 L843.6 337.5 L844.2 312.5 L844.8 320.1 L845.4 324.6 L846.0 334.8 L846.6 331.6 L847.2 330.7 L847.8 318.0 L848.4 321.2 L849.0 328.4 L849.6 317.2 L850.2 317.0 L850.7 333.4 L851.3 325.1 L851.9 320.1 L852.5 332.4 L853.0 328.6 L853.6 308.3 L854.2 328.9 L854.7 325.8 L855.3 333.5 L855.9 329.0 L856.4 333.0 L857.0 317.2 L857.5 327.0 L858.1 334.0 L858.6 340.0 L859.2 329.3 L859.7 323.1 L860.2 314.3 L860.8 324.8 L861.3 337.9 L861.8 329.9 L862.4 326.8 L862.9 333.8 L863.4 333.7 L864.0 329.5 L864.5 324.8 L865.0 334.1 L865.5 334.0 L866.0 329.9 L866.6 326.0 L867.1 328.3 L867.6 349.1 L868.1 324.8 L868.6 334.4 L869.1 326.2 L869.6 329.2 L870.1 323.2 L870.6 334.6 L871.1 325.8 L871.6 338.7 L872.1 331.5 L872.6 325.1 L873.1 323.9 L873.6 318.7 L874.1 324.7 L874.6 323.0 L875.1 321.4 L875.5 328.2 L876.0 325.9 L876.5 339.4 L877.0 331.6 L877.5 350.7 L877.9 338.5 L878.4 326.5 L878.9 314.2 L879.3 348.1 L879.8 332.3 L880.3 350.7 L880.8 329.0 L881.2 336.5 L881.7 337.1 L882.1 324.9 L882.6 331.7 L883.1 327.6 L883.5 322.2 L884.0 323.7 L884.4 327.5 L884.9 349.9 L885.3 339.0 L885.8 335.8 L886.2 331.9 L886.7 329.9 L887.1 329.7 L887.6 324.2 L888.0 314.3 L888.4 329.0 L888.9 324.5 L889.3 333.0 L889.7 330.3 L890.2 337.6 L890.6 320.8 L891.0 340.3 L891.5 323.9 L891.9 341.9 L892.3 340.3 L892.8 333.5 L893.2 320.4 L893.6 325.9 L894.0 325.1 L894.5 341.1 L894.9 326.5 L895.3 330.3 L895.7 331.0 L896.1 335.5 L896.5 338.0 L897.0 322.0 L897.4 321.8 L897.8 345.4 L898.2 332.1 L898.6 344.4 L899.0 334.2 L899.4 332.5 L899.8 334.9 L900.2 325.5 L900.6 332.3 L901.0 338.8 L901.4 332.6 L901.8 323.7 L902.2 332.8 L902.6 329.4 L903.0 330.4 L903.4 312.1 L903.8 344.3 L904.2 327.7 L904.6 337.7 L905.0 368.0 L905.4 330.8 L905.8 319.1 L906.1 328.8 L906.5 328.3 L906.9 320.4 L907.3 330.6 L907.7 333.0 L908.1 320.8 L908.4 338.7 L908.8 331.0 L909.2 336.8 L909.6 338.1 L910.0 330.5 L910.3 325.8 L910.7 339.2 L911.1 353.0 L911.5 338.5 L911.8 331.5 L912.2 332.1 L912.6 323.1 L912.9 347.9 L913.3 341.0 L913.7 332.4 L914.0 323.3 L914.4 334.6 L914.8 335.9 L915.1 328.1 L915.5 337.2 L915.8 325.8 L916.2 335.7 L916.6 335.8 L916.9 333.2 L917.3 340.0 L917.6 339.3 L918.0 331.6 L918.3 319.0 L918.7 315.3 L919.0 331.3 L919.4 323.6 L919.7 338.0 L920.1 351.3 L920.4 317.5 L920.8 328.8 L921.1 329.9 L921.5 335.6 L921.8 329.1 L922.2 327.9 L922.5 331.8 L922.9 344.8 L923.2 338.4 L923.5 338.5 L923.9 338.9 L924.2 340.7 L924.6 334.2 L924.9 331.6 L925.2 335.3 L925.6 330.2 L925.9 328.4 L926.2 321.8 L926.6 333.0 L926.9 329.8 L927.2 331.4 L927.6 335.6 L927.9 328.5 L928.2 339.9 L928.6 327.0 L928.9 337.2 L929.2 351.2 L929.5 326.7 L929.9 328.9 L930.2 330.8 L930.5 356.5 L930.8 329.0 L931.2 333.6 L931.5 320.6 L931.8 344.7 L932.1 344.3 L932.4 323.0 L932.8 333.8 L933.1 340.5 L933.4 337.5 L933.7 335.4 L934.0 340.2 L934.3 330.1 L934.7 332.5 L935.0 334.9 L935.3 340.8 L935.6 328.8 L935.9 332.5 L936.2 330.7 L936.5 317.3 L936.8 330.6 L937.2 330.0 L937.5 326.6 L937.8 336.9 L938.1 343.1 L938.4 333.7 L938.7 333.1 L939.0 338.6 L939.3 323.8 L939.6 337.2 L939.9 337.8 L940.2 328.6 L940.5 333.7 L940.8 326.5 L941.1 327.9 L941.4 343.5 L941.7 329.3 L942.0 322.5 L942.3 331.3 L942.6 329.2 L942.9 327.6 L943.2 333.8 L943.5 348.6 L943.8 348.3 L944.1 326.5 L944.4 325.0 L944.7 332.1 L944.9 337.2 L945.2 328.2 L945.5 348.9 L945.8 335.7 L946.1 325.6 L946.4 331.6 L946.7 332.0 L947.0 339.6 L947.3 323.3 L947.5 337.4 L947.8 339.4 L948.1 331.2 L948.4 332.3 L948.7 339.9 L949.0 333.6 L949.3 316.9 L949.5 326.7 L949.8 334.8 L950.1 325.2 L950.4 333.3 L950.7 336.6 L950.9 339.4 L951.2 335.5 L951.5 348.2 L951.8 329.0 L952.1 340.3 L952.3 342.8 L952.6 340.8 L952.9 336.7 L953.2 339.0 L953.4 329.9 L953.7 340.3 L954.0 334.1 L954.2 326.6 L954.5 345.9 L954.8 327.1 L955.1 328.5 L955.3 322.4 L955.6 344.0 L955.9 335.8" fill="none" stroke="#0000C0" stroke-width="2" stroke-linejoin="miter" shape-rendering="crispEdges"/><path d="M97.8 182.3 L193.2 219.0 L249.0 249.5 L288.6 261.5 L319.3 295.1 L344.4 280.6 L365.6 307.3 L383.9 285.3 L400.1 285.0 L414.6 276.5 L427.8 317.6 L439.7 291.7 L450.7 309.9 L460.9 322.3 L470.4 294.9 L479.3 287.9 L487.7 350.1 L495.5 267.7 L503.0 320.3 L510.0 371.1 L516.7 302.7 L523.1 320.7 L529.2 362.4 L535.1 306.3 L540.7 305.9 L546.1 315.6 L551.3 340.2 L556.3 308.3 L561.1 314.8 L565.8 313.1 L570.3 316.6 L574.7 348.8 L578.9 298.9 L583.0 352.2 L587.0 325.3 L590.9 306.8 L594.7 313.7 L598.3 337.8 L601.9 316.6 L605.4 315.4 L608.8 299.9 L612.1 294.6 L615.3 325.5 L618.5 320.1 L621.6 312.6 L624.6 282.3 L627.6 332.7 L630.5 280.0 L633.3 340.1 L636.1 327.7 L638.8 315.2 L641.5 313.1 L644.1 332.6 L646.7 330.2 L649.2 342.4 L651.7 307.0 L654.1 317.5 L656.5 317.1 L658.9 339.5 L661.2 278.9 L663.4 376.9 L665.7 333.1 L667.9 310.6 L670.0 322.3 L672.2 322.5 L674.3 336.3 L676.3 300.7 L678.4 317.8 L680.4 304.9 L682.4 302.6 L684.3 336.3 L686.2 322.3 L688.1 317.9 L690.0 327.4 L691.9 331.5 L693.7 316.2 L695.5 318.7 L697.3 314.2 L699.0 308.2 L700.7 318.8 L702.5 322.3 L704.1 331.1 L705.8 299.9 L707.5 336.5 L709.1 316.7 L710.7 337.2 L712.3 314.7 L713.9 300.2 L715.4 308.2 L716.9 317.6 L718.5 326.5 L720.0 312.7 L721.5 334.4 L722.9 316.4 L724.4 319.0 L725.8 333.2 L727.3 326.1 L728.7 339.2 L730.1 315.3 L731.4 344.5 L732.8 317.7 L734.2 334.1 L735.5 306.3 L736.8 307.9 L738.2 320.5 L739.5 325.7 L740.8 316.1 L742.0 324.4 L743.3 304.3 L744.6 311.5 L745.8 316.6 L747.0 328.2 L748.3 310.4 L749.5 324.4 L750.7 325.7 L751.9 321.3 L753.0 301.8 L754.2 333.1 L755.4 320.7 L756.5 333.3 L757.7 325.6 L758.8 305.3 L759.9 338.8 L761.0 321.5 L762.1 309.8 L763.2 315.3 L764.3 333.0 L765.4 335.8 L766.5 313.2 L767.5 306.4 L768.6 321.1 L769.6 322.6 L770.7 338.3 L771.7 313.7 L772.7 327.0 L773.8 313.3 L774.8 340.1 L775.8 309.2 L776.8 324.8 L777.7 318.8 L778.7 330.9 L779.7 321.0 L780.7 320.9 L781.6 317.0 L782.6 326.6 L783.5 318.2 L784.5 321.0 L785.4 334.4 L786.3 309.2 L787.2 314.7 L788.1 312.5 L789.1 319.1 L790.0 318.7 L790.9 318.3 L791.7 310.5 L792.6 330.7 L793.5 330.3 L794.4 319.1 L795.2 332.6 L796.1 316.3 L797.0 321.4 L797.8 308.0 L798.7 333.1 L799.5 316.9 L800.3 332.3 L801.2 316.7 L802.0 316.4 L802.8 321.9 L803.6 315.2 L804.5 327.0 L805.3 328.9 L806.1 304.6 L806.9 323.3 L807.7 321.9 L808.4 327.3 L809.2 330.4 L810.0 331.2 L810.8 345.6 L811.5 329.8 L812.3 319.1 L813.1 326.7 L813.8 327.2 L814.6 314.1 L815.3 325.9 L816.1 334.9 L816.8 328.5 L817.6 326.0 L818.3 319.9 L819.0 316.8 L819.8 316.7 L820.5 328.8 L821.2 319.9 L821.9 315.3 L822.6 330.7 L823.3 310.5 L824.0 336.0 L824.7 343.4 L825.4 344.4 L826.1 323.1 L826.8 324.0 L827.5 363.9 L828.2 321.9 L828.9 333.5 L829.5 329.6 L830.2 327.4 L830.9 328.1 L831.5 331.9 L832.2 330.3 L832.9 334.3 L833.5 330.9 L834.2 317.4 L834.8 320.4 L835.5 330.3 L836.1 329.6 L836.8 326.0 L837.4 335.4 L838.0 324.0 L838.7 314.9 L839.3 336.0 L839.9 329.0 L840.5 340.8 L841.2 316.8 L841.8 334.2 L842.4 322.0 L843.0 318.9 L843.6 340.5 L844.2 326.4 L844.8 332.6 L845.4 324.8 L846.0 320.8 L846.6 325.6 L847.2 357.6 L847.8 324.9 L848.4 319.8 L849.0 320.4 L849.6 340.1 L850.2 327.1 L850.7 317.4 L851.3 319.9 L851.9 331.2 L852.5 328.7 L853.0 315.0 L853.6 332.0 L854.2 338.7 L854.7 326.7 L855.3 326.9 L855.9 326.0 L856.4 312.9 L857.0 328.6 L857.5 320.6 L858.1 319.2 L858.6 340.4 L859.2 313.0 L859.7 317.2 L860.2 318.7 L860.8 356.6 L861.3 337.8 L861.8 333.7 L862.4 315.2 L862.9 322.9 L863.4 320.9 L864.0 342.4 L864.5 339.0 L865.0 319.3 L865.5 325.1 L866.0 322.9 L866.6 326.8 L867.1 329.3 L867.6 332.9 L868.1 321.2 L868.6 326.8 L869.1 330.2 L869.6 325.4 L870.1 325.2 L870.6 322.1 L871.1 323.0 L871.6 328.7 L872.1 324.9 L872.6 331.5 L873.1 325.1 L873.6 322.5 L874.1 330.2 L874.6 335.8 L875.1 339.8 L875.5 318.8 L876.0 335.1 L876.5 317.6 L877.0 326.8 L877.5 328.2 L877.9 322.4 L878.4 338.2 L878.9 328.4 L879.3 313.1 L879.8 328.5 L880.3 316.9 L880.8 332.1 L881.2 307.0 L881.7 318.5 L882.1 335.1 L882.6 328.5 L883.1 334.1 L883.5 326.2 L884.0 321.9 L884.4 331.8 L884.9 323.1 L885.3 326.6 L885.8 332.1 L886.2 330.6 L886.7 323.9 L887.1 332.7 L887.6 315.0 L888.0 323.0 L888.4 315.9 L888.9 332.0 L889.3 329.3 L889.7 329.3 L890.2 316.4 L890.6 315.3 L891.0 322.3 L891.5 325.6 L891.9 328.9 L892.3 313.2 L892.8 337.2 L893.2 312.9 L893.6 319.1 L894.0 322.6 L894.5 322.4 L894.9 334.8 L895.3 334.8 L895.7 330.7 L896.1 319.1 L896.5 330.0 L897.0 334.1 L897.4 328.8 L897.8 326.0 L898.2 316.3 L898.6 328.1 L899.0 353.4 L899.4 329.8 L899.8 334.7 L900.2 338.2 L900.6 315.2 L901.0 319.7 L901.4 327.8 L901.8 320.5 L902.2 322.4 L902.6 315.7 L903.0 322.8 L903.4 318.2 L903.8 320.6 L904.2 312.8 L904.6 328.7 L905.0 319.0 L905.4 335.0 L905.8 329.6 L906.1 325.7 L906.5 324.5 L906.9 319.6 L907.3 324.2 L907.7 324.3 L908.1 316.7 L908.4 337.3 L908.8 328.5 L909.2 324.8 L909.6 323.5 L910.0 321.9 L910.3 314.7 L910.7 311.9 L911.1 309.8 L911.5 328.5 L911.8 334.3 L912.2 321.7 L912.6 324.3 L912.9 340.7 L913.3 322.8 L913.7 317.7 L914.0 330.1 L914.4 330.2 L914.8 327.4 L915.1 320.0 L915.5 312.9 L915.8 330.3 L916.2 340.2 L916.6 327.3 L916.9 326.2 L917.3 314.0 L917.6 338.2 L918.0 338.5 L918.3 335.0 L918.7 333.4 L919.0 319.0 L919.4 335.7 L919.7 327.0 L920.1 323.9 L920.4 326.9 L920.8 318.5 L921.1 324.0 L921.5 309.7 L921.8 332.7 L922.2 351.0 L922.5 324.9 L922.9 331.1 L923.2 322.7 L923.5 326.3 L923.9 322.6 L924.2 324.4 L924.6 332.0 L924.9 321.0 L925.2 323.7 L925.6 321.7 L925.9 332.7 L926.2 313.7 L926.6 336.8 L926.9 333.3 L927.2 328.8 L927.6 335.0 L927.9 330.2 L928.2 314.8 L928.6 320.1 L928.9 325.5 L929.2 333.6 L929.5 321.6 L929.9 333.6 L930.2 320.1 L930.5 340.4 L930.8 346.5 L931.2 324.3 L931.5 326.3 L931.8 329.8 L932.1 324.9 L932.4 330.7 L932.8 332.8 L933.1 330.6 L933.4 331.3 L933.7 321.6 L934.0 325.8 L934.3 329.0 L934.7 330.6 L935.0 324.3 L935.3 321.4 L935.6 333.6 L935.9 315.6 L936.2 340.3 L936.5 363.2 L936.8 316.4 L937.2 315.8 L937.5 330.5 L937.8 330.6 L938.1 324.0 L938.4 319.0 L938.7 321.0 L939.0 317.4 L939.3 340.6 L939.6 331.5 L939.9 322.5 L940.2 357.9 L940.5 317.9 L940.8 324.0 L941.1 324.0 L941.4 341.0 L941.7 318.8 L942.0 331.6 L942.3 333.2 L942.6 340.6 L942.9 338.0 L943.2 327.3 L943.5 324.2 L943.8 328.6 L944.1 327.5 L944.4 334.0 L944.7 329.8 L944.9 343.5 L945.2 338.4 L945.5 326.8 L945.8 330.0 L946.1 323.9 L946.4 328.5 L946.7 338.4 L947.0 322.0 L947.3 315.9 L947.5 322.6 L947.8 315.8 L948.1 325.2 L948.4 329.4 L948.7 325.4 L949.0 327.3 L949.3 320.3 L949.5 324.4 L949.8 334.6 L950.1 333.6 L950.4 317.1 L950.7 320.3 L950.9 326.8 L951.2 331.6 L951.5 313.4 L951.8 324.8 L952.1 343.1 L952.3 322.6 L952.6 325.6 L952.9 334.3 L953.2 328.5 L953.4 327.6 L953.7 304.5 L954.0 309.4 L954.2 337.5 L954.5 336.2 L954.8 334.6 L955.1 335.3 L955.3 335.2 L955.6 344.2 L955.9 322.1" fill="none" stroke="#0000FF" stroke-width="2" stroke-linejoin="miter" shape-rendering="crispEdges"/><path d="M97.8 180.1 L193.2 214.2 L249.0 262.8 L288.6 270.7 L319.3 277.3 L344.4 240.2 L365.6 277.3 L383.9 290.8 L400.1 280.3 L414.6 278.2 L427.8 295.9 L439.7 273.0 L450.7 288.1 L460.9 293.1 L470.4 314.7 L479.3 292.6 L487.7 332.9 L495.5 310.0 L503.0 312.6 L510.0 294.2 L516.7 306.7 L523.1 260.8 L529.2 308.3 L535.1 318.8 L540.7 306.2 L546.1 324.6 L551.3 304.3 L556.3 329.2 L561.1 347.0 L565.8 313.3 L570.3 318.1 L574.7 357.0 L578.9 286.8 L583.0 331.0 L587.0 311.6 L590.9 308.1 L594.7 320.5 L598.3 301.0 L601.9 348.3 L605.4 360.3 L608.8 322.7 L612.1 326.5 L615.3 339.0 L618.5 323.3 L621.6 329.6 L624.6 329.6 L627.6 332.6 L630.5 311.1 L633.3 316.9 L636.1 321.6 L638.8 305.1 L641.5 347.7 L644.1 338.9 L646.7 316.9 L649.2 336.6 L651.7 302.9 L654.1 331.7 L656.5 330.0 L658.9 326.5 L661.2 300.5 L663.4 329.3 L665.7 340.8 L667.9 336.8 L670.0 351.8 L672.2 330.9 L674.3 344.5 L676.3 315.5 L678.4 316.8 L680.4 320.0 L682.4 338.2 L684.3 315.7 L686.2 314.9 L688.1 319.7 L690.0 316.4 L691.9 311.6 L693.7 315.3 L695.5 322.5 L697.3 331.2 L699.0 331.2 L700.7 314.3 L702.5 345.1 L704.1 320.2 L705.8 335.2 L707.5 321.8 L709.1 335.6 L710.7 328.3 L712.3 315.9 L713.9 331.3 L715.4 360.8 L716.9 349.7 L718.5 342.5 L720.0 314.5 L721.5 332.2 L722.9 333.4 L724.4 335.1 L725.8 328.1 L727.3 321.3 L728.7 354.3 L730.1 309.4 L731.4 346.0 L732.8 336.8 L734.2 314.7 L735.5 328.5 L736.8 325.9 L738.2 310.9 L739.5 311.0 L740.8 317.0 L742.0 325.5 L743.3 327.4 L744.6 313.9 L745.8 308.4 L747.0 323.2 L748.3 308.8 L749.5 331.2 L750.7 324.2 L751.9 313.3 L753.0 314.0 L754.2 313.4 L755.4 316.2 L756.5 316.6 L757.7 314.7 L758.8 307.8 L759.9 314.6 L761.0 325.4 L762.1 306.7 L763.2 328.1 L764.3 315.1 L765.4 317.5 L766.5 313.6 L767.5 322.0 L768.6 325.3 L769.6 322.6 L770.7 328.2 L771.7 320.8 L772.7 318.9 L773.8 318.3 L774.8 320.8 L775.8 316.6 L776.8 326.2 L777.7 310.2 L778.7 330.2 L779.7 321.8 L780.7 319.2 L781.6 323.0 L782.6 319.1 L783.5 313.7 L784.5 328.4 L785.4 318.7 L786.3 326.6 L787.2 327.7 L788.1 333.4 L789.1 313.4 L790.0 330.6 L790.9 298.3 L791.7 344.1 L792.6 320.3 L793.5 321.4 L794.4 320.3 L795.2 325.2 L796.1 325.8 L797.0 313.7 L797.8 327.7 L798.7 312.2 L799.5 331.9 L800.3 322.9 L801.2 322.9 L802.0 357.6 L802.8 313.5 L803.6 307.3 L804.5 314.3 L805.3 315.2 L806.1 334.4 L806.9 341.5 L807.7 327.4 L808.4 326.8 L809.2 320.5 L810.0 333.5 L810.8 317.7 L811.5 323.1 L812.3 328.7 L813.1 337.0 L813.8 322.2 L814.6 323.6 L815.3 318.7 L816.1 327.8 L816.8 350.5 L817.6 312.5 L818.3 322.7 L819.0 331.1 L819.8 319.6 L820.5 323.2 L821.2 319.6 L821.9 336.2 L822.6 354.9 L823.3 323.3 L824.0 326.4 L824.7 318.3 L825.4 326.6 L826.1 315.0 L826.8 316.9 L827.5 316.3 L828.2 321.5 L828.9 320.6 L829.5 332.3 L830.2 306.0 L830.9 319.6 L831.5 323.0 L832.2 306.0 L832.9 327.9 L833.5 314.2 L834.2 326.3 L834.8 321.7 L835.5 320.0 L836.1 326.5 L836.8 318.1 L837.4 330.9 L838.0 317.3 L838.7 313.7 L839.3 322.2 L839.9 334.8 L840.5 314.1 L841.2 322.0 L841.8 312.8 L842.4 319.7 L843.0 308.1 L843.6 329.1 L844.2 322.5 L844.8 322.4 L845.4 315.8 L846.0 317.0 L846.6 325.2 L847.2 321.5 L847.8 320.7 L848.4 315.6 L849.0 333.6 L849.6 311.0 L850.2 324.6 L850.7 319.6 L851.3 324.1 L851.9 308.8 L852.5 335.0 L853.0 327.6 L853.6 321.7 L854.2 309.6 L854.7 324.4 L855.3 329.5 L855.9 324.8 L856.4 324.3 L857.0 316.6 L857.5 323.7 L858.1 325.3 L858.6 326.8 L859.2 325.8 L859.7 311.6 L860.2 328.3 L860.8 325.0 L861.3 319.4 L861.8 320.4 L862.4 328.3 L862.9 326.4 L863.4 323.6 L864.0 334.0 L864.5 332.0 L865.0 351.7 L865.5 330.5 L866.0 316.5 L866.6 325.9 L867.1 321.0 L867.6 316.8 L868.1 327.9 L868.6 342.5 L869.1 324.1 L869.6 332.9 L870.1 319.0 L870.6 335.9 L871.1 314.5 L871.6 321.4 L872.1 315.8 L872.6 325.7 L873.1 316.4 L873.6 322.9 L874.1 326.8 L874.6 317.3 L875.1 321.1 L875.5 320.0 L876.0 327.4 L876.5 326.2 L877.0 326.3 L877.5 326.3 L877.9 323.8 L878.4 310.1 L878.9 332.7 L879.3 326.5 L879.8 332.6 L880.3 344.2 L880.8 312.2 L881.2 329.2 L881.7 323.6 L882.1 313.7 L882.6 332.2 L883.1 327.6 L883.5 324.1 L884.0 334.0 L884.4 325.1 L884.9 321.4 L885.3 327.0 L885.8 325.9 L886.2 328.4 L886.7 314.3 L887.1 320.9 L887.6 321.4 L888.0 318.1 L888.4 321.0 L888.9 315.5 L889.3 336.0 L889.7 332.4 L890.2 322.4 L890.6 326.5 L891.0 324.7 L891.5 338.6 L891.9 330.1 L892.3 335.9 L892.8 319.6 L893.2 331.2 L893.6 334.8 L894.0 329.1 L894.5 315.4 L894.9 318.9 L895.3 310.7 L895.7 325.8 L896.1 319.8 L896.5 326.6 L897.0 325.1 L897.4 322.2 L897.8 319.4 L898.2 320.9 L898.6 322.1 L899.0 331.3 L899.4 316.8 L899.8 332.7 L900.2 334.9 L900.6 332.0 L901.0 338.9 L901.4 332.2 L901.8 335.4 L902.2 320.0 L902.6 345.4 L903.0 327.4 L903.4 315.4 L903.8 329.4 L904.2 338.6 L904.6 330.8 L905.0 323.2 L905.4 322.5 L905.8 319.3 L906.1 329.2 L906.5 330.0 L906.9 338.2 L907.3 337.2 L907.7 338.6 L908.1 328.2 L908.4 328.6 L908.8 316.9 L909.2 342.5 L909.6 323.9 L910.0 329.2 L910.3 327.2 L910.7 329.9 L911.1 305.7 L911.5 332.2 L911.8 327.1 L912.2 325.3 L912.6 323.7 L912.9 337.3 L913.3 323.0 L913.7 332.4 L914.0 334.8 L914.4 332.5 L914.8 328.0 L915.1 335.2 L915.5 344.3 L915.8 338.3 L916.2 337.3 L916.6 335.9 L916.9 334.8 L917.3 334.7 L917.6 325.9 L918.0 332.6 L918.3 317.1 L918.7 326.7 L919.0 344.2 L919.4 336.0 L919.7 325.6 L920.1 317.6 L920.4 325.3 L920.8 333.6 L921.1 328.6 L921.5 329.9 L921.8 338.9 L922.2 332.9 L922.5 333.6 L922.9 316.2 L923.2 320.1 L923.5 339.6 L923.9 323.8 L924.2 314.4 L924.6 339.6 L924.9 329.4 L925.2 318.4 L925.6 329.4 L925.9 327.4 L926.2 336.6 L926.6 334.6 L926.9 328.7 L927.2 332.1 L927.6 334.4 L927.9 325.0 L928.2 337.2 L928.6 340.4 L928.9 329.3 L929.2 321.8 L929.5 333.0 L929.9 336.3 L930.2 308.7 L930.5 326.9 L930.8 323.9 L931.2 336.9 L931.5 333.9 L931.8 342.0 L932.1 328.5 L932.4 315.5 L932.8 337.1 L933.1 326.1 L933.4 344.5 L933.7 337.7 L934.0 338.0 L934.3 335.1 L934.7 324.6 L935.0 330.1 L935.3 337.3 L935.6 325.2 L935.9 336.8 L936.2 331.5 L936.5 327.9 L936.8 337.4 L937.2 329.1 L937.5 325.4 L937.8 319.8 L938.1 328.6 L938.4 341.0 L938.7 328.9 L939.0 356.6 L939.3 330.9 L939.6 330.3 L939.9 326.9 L940.2 326.4 L940.5 322.1 L940.8 329.1 L941.1 338.1 L941.4 334.2 L941.7 340.3 L942.0 331.3 L942.3 352.4 L942.6 335.1 L942.9 331.6 L943.2 337.3 L943.5 340.3 L943.8 325.1 L944.1 324.4 L944.4 341.9 L944.7 344.3 L944.9 346.4 L945.2 326.1 L945.5 331.6 L945.8 336.3 L946.1 328.7 L946.4 346.3 L946.7 342.4 L947.0 344.2 L947.3 338.2 L947.5 349.3 L947.8 334.1 L948.1 330.3 L948.4 325.1 L948.7 331.2 L949.0 327.1 L949.3 331.1 L949.5 336.1 L949.8 328.0 L950.1 324.2 L950.4 336.2 L950.7 335.7 L950.9 366.6 L951.2 331.4 L951.5 325.8 L951.8 330.4 L952.1 339.0 L952.3 340.1 L952.6 329.5 L952.9 339.9 L953.2 323.9 L953.4 342.1 L953.7 336.4 L954.0 368.5 L954.2 336.5 L954.5 345.3 L954.8 325.1 L955.1 374.4 L955.3 326.8 L955.6 337.0 L955.9 330.2" fill="none" stroke="#0000E0" stroke-width="2" stroke-linejoin="miter" shape-rendering="crispEdges"/><path d="M97.8 191.8 L193.2 234.5 L249.0 269.9 L288.6 286.0 L319.3 294.1 L344.4 292.0 L365.6 310.3 L383.9 311.3 L400.1 289.8 L414.6 296.8 L427.8 286.9 L439.7 296.0 L450.7 323.5 L460.9 307.8 L470.4 292.8 L479.3 300.2 L487.7 316.5 L495.5 279.7 L503.0 301.0 L510.0 297.3 L516.7 312.1 L523.1 289.8 L529.2 308.6 L535.1 297.5 L540.7 313.9 L546.1 297.5 L551.3 318.6 L556.3 310.5 L561.1 307.9 L565.8 299.3 L570.3 343.3 L574.7 313.5 L578.9 322.8 L583.0 316.4 L587.0 307.9 L590.9 322.8 L594.7 297.2 L598.3 325.7 L601.9 309.2 L605.4 305.7 L608.8 296.7 L612.1 328.4 L615.3 313.4 L618.5 315.4 L621.6 327.6 L624.6 307.3 L627.6 336.7 L630.5 338.2 L633.3 333.0 L636.1 355.8 L638.8 341.4 L641.5 340.5 L644.1 326.2 L646.7 305.9 L649.2 305.3 L651.7 329.8 L654.1 336.2 L656.5 326.6 L658.9 343.9 L661.2 365.4 L663.4 326.6 L665.7 303.2 L667.9 307.1 L670.0 320.9 L672.2 309.9 L674.3 318.0 L676.3 304.6 L678.4 336.1 L680.4 329.0 L682.4 328.3 L684.3 326.0 L686.2 352.5 L688.1 327.6 L690.0 320.1 L691.9 337.1 L693.7 318.0 L695.5 336.7 L697.3 337.2 L699.0 325.6 L700.7 327.4 L702.5 326.0 L704.1 301.4 L705.8 325.2 L707.5 320.7 L709.1 303.7 L710.7 313.1 L712.3 329.4 L713.9 321.0 L715.4 332.4 L716.9 336.1 L718.5 334.6 L720.0 314.4 L721.5 313.2 L722.9 317.9 L724.4 305.8 L725.8 335.1 L727.3 303.8 L728.7 341.8 L730.1 327.2 L731.4 328.9 L732.8 320.0 L734.2 314.1 L735.5 342.4 L736.8 329.8 L738.2 320.7 L739.5 324.4 L740.8 326.5 L742.0 328.8 L743.3 331.4 L744.6 321.4 L745.8 325.2 L747.0 330.4 L748.3 317.0 L749.5 326.7 L750.7 315.8 L751.9 316.8 L753.0 315.7 L754.2 330.0 L755.4 319.9 L756.5 321.2 L757.7 321.8 L758.8 326.9 L759.9 319.6 L761.0 338.9 L762.1 326.4 L763.2 319.3 L764.3 325.8 L765.4 335.4 L766.5 310.2 L767.5 325.7 L768.6 339.6 L769.6 324.3 L770.7 330.3 L771.7 331.7 L772.7 317.7 L773.8 314.3 L774.8 331.7 L775.8 328.8 L776.8 333.5 L777.7 344.3 L778.7 319.7 L779.7 313.9 L780.7 340.1 L781.6 316.7 L782.6 317.1 L783.5 320.7 L784.5 332.3 L785.4 324.0 L786.3 316.8 L787.2 323.6 L788.1 318.0 L789.1 323.4 L790.0 323.9 L790.9 351.0 L791.7 310.6 L792.6 307.2 L793.5 327.6 L794.4 332.2 L795.2 331.0 L796.1 323.2 L797.0 334.3 L797.8 335.9 L798.7 334.1 L799.5 325.2 L800.3 327.8 L801.2 324.3 L802.0 318.3 L802.8 322.3 L803.6 332.3 L804.5 326.9 L805.3 315.3 L806.1 321.3 L806.9 312.3 L807.7 329.7 L808.4 328.8 L809.2 322.2 L810.0 337.8 L810.8 321.7 L811.5 316.9 L812.3 329.6 L813.1 338.1 L813.8 338.9 L814.6 323.5 L815.3 325.7 L816.1 329.1 L816.8 338.7 L817.6 309.2 L818.3 324.8 L819.0 319.0 L819.8 341.5 L820.5 339.4 L821.2 327.7 L821.9 330.0 L822.6 320.0 L823.3 353.5 L824.0 335.3 L824.7 317.8 L825.4 308.3 L826.1 333.8 L826.8 315.3 L827.5 327.8 L828.2 329.2 L828.9 330.6 L829.5 312.9 L830.2 329.2 L830.9 326.8 L831.5 328.8 L832.2 343.0 L832.9 330.6 L833.5 329.1 L834.2 329.5 L834.8 333.4 L835.5 333.9 L836.1 328.0 L836.8 321.2 L837.4 325.2 L838.0 331.9 L838.7 336.0 L839.3 341.5 L839.9 340.3 L840.5 333.2 L841.2 337.5 L841.8 327.3 L842.4 322.0 L843.0 320.2 L843.6 334.0 L844.2 330.9 L844.8 326.9 L845.4 316.6 L846.0 332.4 L846.6 325.4 L847.2 327.6 L847.8 325.3 L848.4 330.5 L849.0 359.5 L849.6 335.4 L850.2 335.3 L850.7 330.7 L851.3 330.4 L851.9 323.1 L852.5 316.6 L853.0 322.1 L853.6 321.0 L854.2 323.9 L854.7 331.1 L855.3 320.4 L855.9 328.8 L856.4 330.7 L857.0 322.2 L857.5 342.7 L858.1 359.2 L858.6 326.9 L859.2 323.5 L859.7 333.6 L860.2 332.4 L860.8 323.7 L861.3 324.5 L861.8 323.1 L862.4 331.2 L862.9 332.6 L863.4 316.5 L864.0 314.6 L864.5 344.6 L865.0 331.5 L865.5 323.3 L866.0 328.2 L866.6 314.3 L867.1 322.9 L867.6 316.7 L868.1 332.9 L868.6 315.5 L869.1 340.9 L869.6 333.3 L870.1 323.0 L870.6 324.9 L871.1 327.9 L871.6 334.1 L872.1 328.8 L872.6 323.2 L873.1 336.9 L873.6 325.7 L874.1 338.0 L874.6 327.4 L875.1 325.4 L875.5 333.2 L876.0 324.3 L876.5 326.8 L877.0 333.0 L877.5 310.9 L877.9 334.8 L878.4 336.1 L878.9 317.8 L879.3 318.0 L879.8 352.0 L880.3 323.0 L880.8 345.4 L881.2 315.1 L881.7 337.4 L882.1 334.4 L882.6 330.2 L883.1 327.9 L883.5 327.0 L884.0 332.8 L884.4 319.3 L884.9 323.8 L885.3 326.6 L885.8 336.0 L886.2 332.9 L886.7 327.7 L887.1 350.6 L887.6 330.0 L888.0 319.0 L888.4 341.2 L888.9 340.2 L889.3 331.5 L889.7 311.1 L890.2 324.2 L890.6 346.0 L891.0 334.1 L891.5 339.2 L891.9 333.5 L892.3 323.5 L892.8 325.5 L893.2 334.3 L893.6 331.9 L894.0 319.2 L894.5 326.8 L894.9 317.3 L895.3 327.7 L895.7 334.8 L896.1 326.7 L896.5 328.8 L897.0 321.4 L897.4 311.8 L897.8 333.5 L898.2 329.2 L898.6 323.3 L899.0 328.3 L899.4 323.0 L899.8 330.6 L900.2 320.3 L900.6 327.4 L901.0 334.8 L901.4 330.3 L901.8 326.1 L902.2 328.9 L902.6 339.4 L903.0 332.1 L903.4 333.3 L903.8 327.7 L904.2 314.9 L904.6 319.8 L905.0 332.2 L905.4 317.7 L905.8 323.9 L906.1 326.6 L906.5 342.7 L906.9 323.4 L907.3 333.5 L907.7 314.1 L908.1 340.7 L908.4 339.5 L908.8 322.1 L909.2 340.5 L909.6 331.5 L910.0 323.3 L910.3 329.9 L910.7 343.6 L911.1 342.0 L911.5 335.8 L911.8 331.0 L912.2 334.7 L912.6 325.3 L912.9 338.5 L913.3 331.0 L913.7 326.5 L914.0 324.1 L914.4 329.4 L914.8 320.3 L915.1 324.9 L915.5 341.6 L915.8 330.5 L916.2 335.1 L916.6 332.1 L916.9 328.9 L917.3 334.2 L917.6 331.6 L918.0 337.2 L918.3 337.8 L918.7 339.4 L919.0 322.4 L919.4 328.1 L919.7 323.3 L920.1 338.8 L920.4 337.7 L920.8 329.6 L921.1 335.2 L921.5 324.0 L921.8 354.1 L922.2 327.6 L922.5 326.8 L922.9 326.3 L923.2 332.0 L923.5 329.1 L923.9 334.8 L924.2 315.2 L924.6 321.7 L924.9 334.5 L925.2 332.3 L925.6 339.5 L925.9 337.4 L926.2 356.1 L926.6 333.5 L926.9 326.1 L927.2 328.4 L927.6 319.3 L927.9 336.3 L928.2 325.7 L928.6 346.9 L928.9 332.8 L929.2 333.3 L929.5 336.1 L929.9 319.8 L930.2 331.9 L930.5 325.5 L930.8 332.9 L931.2 335.1 L931.5 328.5 L931.8 337.3 L932.1 335.4 L932.4 334.0 L932.8 338.6 L933.1 319.8 L933.4 342.2 L933.7 341.4 L934.0 333.0 L934.3 323.2 L934.7 335.2 L935.0 317.6 L935.3 340.5 L935.6 320.0 L935.9 322.6 L936.2 339.7 L936.5 327.3 L936.8 332.1 L937.2 324.8 L937.5 341.9 L937.8 328.4 L938.1 324.6 L938.4 335.8 L938.7 341.1 L939.0 327.7 L939.3 342.3 L939.6 328.2 L939.9 328.7 L940.2 324.2 L940.5 327.7 L940.8 334.8 L941.1 339.4 L941.4 329.2 L941.7 321.4 L942.0 332.2 L942.3 325.6 L942.6 341.6 L942.9 339.4 L943.2 353.6 L943.5 336.1 L943.8 337.8 L944.1 329.7 L944.4 334.8 L944.7 346.8 L944.9 334.6 L945.2 337.2 L945.5 330.4 L945.8 337.9 L946.1 334.1 L946.4 329.7 L946.7 317.1 L947.0 326.2 L947.3 330.8 L947.5 330.4 L947.8 328.0 L948.1 326.5 L948.4 331.4 L948.7 341.0 L949.0 325.8 L949.3 338.7 L949.5 331.3 L949.8 335.0 L950.1 321.1 L950.4 317.2 L950.7 336.5 L950.9 335.9 L951.2 349.0 L951.5 339.4 L951.8 332.7 L952.1 339.1 L952.3 328.0 L952.6 335.1 L952.9 330.4 L953.2 343.8 L953.4 327.5 L953.7 334.2 L954.0 320.0 L954.2 363.7 L954.5 335.2 L954.8 338.1 L955.1 330.8 L955.3 336.0 L955.6 336.2 L955.9 344.3" fill="none" stroke="#0000FF" stroke-width="2" stroke-linejoin="miter" shape-rendering="crispEdges"/><path d="M97.8 189.8 L193.2 220.5 L249.0 245.6 L288.6 253.1 L319.3 289.2 L344.4 309.2 L365.6 312.6 L383.9 291.9 L400.1 301.6 L414.6 280.6 L427.8 287.2 L439.7 293.5 L450.7 302.5 L460.9 304.1 L470.4 296.1 L479.3 325.2 L487.7 313.2 L495.5 323.9 L503.0 349.2 L510.0 308.3 L516.7 307.6 L523.1 307.8 L529.2 284.2 L535.1 301.5 L540.7 308.6 L546.1 368.9 L551.3 353.3 L556.3 324.9 L561.1 344.3 L565.8 320.6 L570.3 327.9 L574.7 315.4 L578.9 323.8 L583.0 309.0 L587.0 331.8 L590.9 319.6 L594.7 381.6 L598.3 332.7 L601.9 289.5 L605.4 334.8 L608.8 340.4 L612.1 311.3 L615.3 347.1 L618.5 344.3 L621.6 337.3 L624.6 314.2 L627.6 313.4 L630.5 324.6 L633.3 340.7 L636.1 319.7 L638.8 321.2 L641.5 343.6 L644.1 336.8 L646.7 330.0 L649.2 298.5 L651.7 356.2 L654.1 317.3 L656.5 320.9 L658.9 336.7 L661.2 335.9 L663.4 345.7 L665.7 375.5 L667.9 340.1 L670.0 316.1 L672.2 323.6 L674.3 315.6 L676.3 314.9 L678.4 345.8 L680.4 344.0 L682.4 311.2 L684.3 311.7 L686.2 326.9 L688.1 304.4 L690.0 330.1 L691.9 334.1 L693.7 293.6 L695.5 340.2 L697.3 338.1 L699.0 331.5 L700.7 322.3 L702.5 326.2 L704.1 311.9 L705.8 337.2 L707.5 322.3 L709.1 332.1 L710.7 308.3 L712.3 316.6 L713.9 333.1 L715.4 320.8 L716.9 314.3 L718.5 317.1 L720.0 339.9 L721.5 311.9 L722.9 310.6 L724.4 368.2 L725.8 328.8 L727.3 318.8 L728.7 319.8 L730.1 300.9 L731.4 332.5 L732.8 343.3 L734.2 325.2 L735.5 321.5 L736.8 345.4 L738.2 333.8 L739.5 325.6 L740.8 342.6 L742.0 323.4 L743.3 327.0 L744.6 320.9 L745.8 304.8 L747.0 319.2 L748.3 312.2 L749.5 333.3 L750.7 339.4 L751.9 321.3 L753.0 330.0 L754.2 332.4 L755.4 321.5 L756.5 314.8 L757.7 326.2 L758.8 336.1 L759.9 319.4 L761.0 317.5 L762.1 332.5 L763.2 330.0 L764.3 318.4 L765.4 324.2 L766.5 319.9 L767.5 333.1 L768.6 334.0 L769.6 316.6 L770.7 329.5 L771.7 319.4 L772.7 315.0 L773.8 326.6 L774.8 317.1 L775.8 318.3 L776.8 316.4 L777.7 331.8 L778.7 329.1 L779.7 328.0 L780.7 326.3 L781.6 314.7 L782.6 336.1 L783.5 325.8 L784.5 326.3 L785.4 321.7 L786.3 331.3 L787.2 321.1 L788.1 325.8 L789.1 332.8 L790.0 340.5 L790.9 319.2 L791.7 335.4 L792.6 331.2 L793.5 324.7 L794.4 329.0 L795.2 332.5 L796.1 331.3 L797.0 331.2 L797.8 324.5 L798.7 317.7 L799.5 313.0 L800.3 334.4 L801.2 310.2 L802.0 328.8 L802.8 327.7 L803.6 327.4 L804.5 329.7 L805.3 328.2 L806.1 328.7 L806.9 331.9 L807.7 323.8 L808.4 343.0 L809.2 330.4 L810.0 317.2 L810.8 318.5 L811.5 318.4 L812.3 318.6 L813.1 327.4 L813.8 335.8 L814.6 323.4 L815.3 331.4 L816.1 317.6 L816.8 325.5 L817.6 329.8 L818.3 340.0 L819.0 313.8 L819.8 334.2 L820.5 323.8 L821.2 335.4 L821.9 334.5 L822.6 309.3 L823.3 334.4 L824.0 338.2 L824.7 327.3 L825.4 318.5 L826.1 321.5 L826.8 327.3 L827.5 331.3 L828.2 324.9 L828.9 320.2 L829.5 332.6 L830.2 344.2 L830.9 326.7 L831.5 323.7 L832.2 348.1 L832.9 329.1 L833.5 334.3 L834.2 318.2 L834.8 328.1 L835.5 325.0 L836.1 324.1 L836.8 312.9 L837.4 318.9 L838.0 320.2 L838.7 317.7 L839.3 364.9 L839.9 326.7 L840.5 334.5 L841.2 322.2 L841.8 328.0 L842.4 308.0 L843.0 318.6 L843.6 324.6 L844.2 328.7 L844.8 340.8 L845.4 341.3 L846.0 332.5 L846.6 331.2 L847.2 326.3 L847.8 328.6 L848.4 325.2 L849.0 323.8 L849.6 314.7 L850.2 334.0 L850.7 337.5 L851.3 324.8 L851.9 342.8 L852.5 314.5 L853.0 326.8 L853.6 327.7 L854.2 313.4 L854.7 331.0 L855.3 338.0 L855.9 340.2 L856.4 326.2 L857.0 331.2 L857.5 324.2 L858.1 324.3 L858.6 310.3 L859.2 327.3 L859.7 325.8 L860.2 322.9 L860.8 329.3 L861.3 313.0 L861.8 336.0 L862.4 320.9 L862.9 339.0 L863.4 322.3 L864.0 321.8 L864.5 326.2 L865.0 344.7 L865.5 325.0 L866.0 325.2 L866.6 317.0 L867.1 337.3 L867.6 312.3 L868.1 316.5 L868.6 331.0 L869.1 328.4 L869.6 329.0 L870.1 334.7 L870.6 328.6 L871.1 362.2 L871.6 328.7 L872.1 324.7 L872.6 317.7 L873.1 324.3 L873.6 328.0 L874.1 333.9 L874.6 341.6 L875.1 322.6 L875.5 328.8 L876.0 321.6 L876.5 326.1 L877.0 330.8 L877.5 320.3 L877.9 325.9 L878.4 335.7 L878.9 362.7 L879.3 323.7 L879.8 342.6 L880.3 341.2 L880.8 334.3 L881.2 335.2 L881.7 324.2 L882.1 323.5 L882.6 323.5 L883.1 321.8 L883.5 312.7 L884.0 335.6 L884.4 327.7 L884.9 326.0 L885.3 338.8 L885.8 320.6 L886.2 325.3 L886.7 327.1 L887.1 333.3 L887.6 329.1 L888.0 331.6 L888.4 334.9 L888.9 313.4 L889.3 336.1 L889.7 320.8 L890.2 332.3 L890.6 323.1 L891.0 333.7 L891.5 333.1 L891.9 328.9 L892.3 325.4 L892.8 324.0 L893.2 330.4 L893.6 335.1 L894.0 323.4 L894.5 322.0 L894.9 341.9 L895.3 337.1 L895.7 319.5 L896.1 317.1 L896.5 330.0 L897.0 336.8 L897.4 327.3 L897.8 323.7 L898.2 324.3 L898.6 330.0 L899.0 329.5 L899.4 340.6 L899.8 320.3 L900.2 328.5 L900.6 329.3 L901.0 333.7 L901.4 340.1 L901.8 333.0 L902.2 327.0 L902.6 312.1 L903.0 341.1 L903.4 328.0 L903.8 330.2 L904.2 335.1 L904.6 317.1 L905.0 325.3 L905.4 335.1 L905.8 339.2 L906.1 327.3 L906.5 323.2 L906.9 338.3 L907.3 327.4 L907.7 328.3 L908.1 324.1 L908.4 326.1 L908.8 336.0 L909.2 338.8 L909.6 344.4 L910.0 321.3 L910.3 331.1 L910.7 319.6 L911.1 335.3 L911.5 336.4 L911.8 319.0 L912.2 339.9 L912.6 322.6 L912.9 318.8 L913.3 329.2 L913.7 316.6 L914.0 332.5 L914.4 337.2 L914.8 329.8 L915.1 329.7 L915.5 322.2 L915.8 333.3 L916.2 325.5 L916.6 325.3 L916.9 370.3 L917.3 319.4 L917.6 334.9 L918.0 338.7 L918.3 331.8 L918.7 330.5 L919.0 324.2 L919.4 338.5 L919.7 328.5 L920.1 327.8 L920.4 334.6 L920.8 338.1 L921.1 321.7 L921.5 336.7 L921.8 345.9 L922.2 343.9 L922.5 331.2 L922.9 330.1 L923.2 329.1 L923.5 342.5 L923.9 319.7 L924.2 321.3 L924.6 327.2 L924.9 325.1 L925.2 326.3 L925.6 339.9 L925.9 332.0 L926.2 333.2 L926.6 308.4 L926.9 326.4 L927.2 320.4 L927.6 328.9 L927.9 319.6 L928.2 337.3 L928.6 330.4 L928.9 330.6 L929.2 332.4 L929.5 329.8 L929.9 330.5 L930.2 325.8 L930.5 337.4 L930.8 328.5 L931.2 328.8 L931.5 332.8 L931.8 326.2 L932.1 321.4 L932.4 330.9 L932.8 319.8 L933.1 329.5 L933.4 333.0 L933.7 329.8 L934.0 319.3 L934.3 351.4 L934.7 320.3 L935.0 322.2 L935.3 336.8 L935.6 328.1 L935.9 336.5 L936.2 327.8 L936.5 343.7 L936.8 332.3 L937.2 331.9 L937.5 317.8 L937.8 331.9 L938.1 344.7 L938.4 328.3 L938.7 339.1 L939.0 326.2 L939.3 342.3 L939.6 326.9 L939.9 328.8 L940.2 330.0 L940.5 341.7 L940.8 336.1 L941.1 339.0 L941.4 336.9 L941.7 346.1 L942.0 330.0 L942.3 338.7 L942.6 333.7 L942.9 328.4 L943.2 320.5 L943.5 342.2 L943.8 330.1 L944.1 333.8 L944.4 343.3 L944.7 334.4 L944.9 343.7 L945.2 327.1 L945.5 332.9 L945.8 335.7 L946.1 329.5 L946.4 322.3 L946.7 347.7 L947.0 326.3 L947.3 318.3 L947.5 328.0 L947.8 314.5 L948.1 325.5 L948.4 340.1 L948.7 329.9 L949.0 335.2 L949.3 331.7 L949.5 331.5 L949.8 336.2 L950.1 333.5 L950.4 330.9 L950.7 329.0 L950.9 329.7 L951.2 335.2 L951.5 317.3 L951.8 328.4 L952.1 331.0 L952.3 324.7 L952.6 334.3 L952.9 339.5 L953.2 326.4 L953.4 321.6 L953.7 322.3 L954.0 323.6 L954.2 339.9 L954.5 329.0 L954.8 334.0 L955.1 335.0 L955.3 322.1 L955.6 339.1 L955.9 340.7" fill="none" stroke="#000090" stroke-width="2" stroke-linejoin="miter" shape-rendering="crispEdges"/><path d="M97.8 195.6 L193.2 218.7 L249.0 272.9 L288.6 276.6 L319.3 251.5 L344.4 271.9 L365.6 278.6 L383.9 250.3 L400.1 287.6 L414.6 283.1 L427.8 327.7 L439.7 301.6 L450.7 293.8 L460.9 315.7 L470.4 288.7 L479.3 302.2 L487.7 286.0 L495.5 292.3 L503.0 289.9 L510.0 312.8 L516.7 296.7 L523.1 303.0 L529.2 331.0 L535.1 343.0 L540.7 318.9 L546.1 305.3 L551.3 311.6 L556.3 310.3 L561.1 313.4 L565.8 281.9 L570.3 331.3 L574.7 301.3 L578.9 341.9 L583.0 302.8 L587.0 303.4 L590.9 322.7 L594.7 304.8 L598.3 319.3 L601.9 327.8 L605.4 322.4 L608.8 312.6 L612.1 334.2 L615.3 335.3 L618.5 335.7 L621.6 342.8 L624.6 337.0 L627.6 282.7 L630.5 322.8 L633.3 314.0 L636.1 336.4 L638.8 330.4 L641.5 313.0 L644.1 360.6 L646.7 349.9 L649.2 312.8 L651.7 338.3 L654.1 314.3 L656.5 318.0 L658.9 343.3 L661.2 326.4 L663.4 349.7 L665.7 315.9 L667.9 305.5 L670.0 330.7 L672.2 331.8 L674.3 334.1 L676.3 318.3 L678.4 363.6 L680.4 325.8 L682.4 314.5 L684.3 302.6 L686.2 313.1 L688.1 338.0 L690.0 317.8 L691.9 308.2 L693.7 335.2 L695.5 356.9 L697.3 313.2 L699.0 311.5 L700.7 336.5 L702.5 302.7 L704.1 321.5 L705.8 329.1 L707.5 311.0 L709.1 330.8 L710.7 326.8 L712.3 325.4 L713.9 340.1 L715.4 340.3 L716.9 327.2 L718.5 328.9 L720.0 340.2 L721.5 303.9 L722.9 322.3 L724.4 330.4 L725.8 303.5 L727.3 332.0 L728.7 337.7 L730.1 329.8 L731.4 340.2 L732.8 317.8 L734.2 317.1 L735.5 329.1 L736.8 320.0 L738.2 332.5 L739.5 347.2 L740.8 320.3 L742.0 326.4 L743.3 317.5 L744.6 319.8 L745.8 321.0 L747.0 322.2 L748.3 307.2 L749.5 324.3 L750.7 321.4 L751.9 330.8 L753.0 329.7 L754.2 340.4 L755.4 318.4 L756.5 332.9 L757.7 323.4 L758.8 325.6 L759.9 324.1 L761.0 331.8 L762.1 313.3 L763.2 324.2 L764.3 324.0 L765.4 329.9 L766.5 336.9 L767.5 312.4 L768.6 334.6 L769.6 318.4 L770.7 320.5 L771.7 317.1 L772.7 319.2 L773.8 322.0 L774.8 326.0 L775.8 335.7 L776.8 310.9 L777.7 318.7 L778.7 316.1 L779.7 343.2 L780.7 328.1 L781.6 330.8 L782.6 322.5 L783.5 313.2 L784.5 336.3 L785.4 320.1 L786.3 322.6 L787.2 329.3 L788.1 315.4 L789.1 323.7 L790.0 334.1 L790.9 319.3 L791.7 349.4 L792.6 329.0 L793.5 326.2 L794.4 333.5 L795.2 298.0 L796.1 309.0 L797.0 341.1 L797.8 349.4 L798.7 325.9 L799.5 314.7 L800.3 345.4 L801.2 329.9 L802.0 311.1 L802.8 318.4 L803.6 313.5 L804.5 324.3 L805.3 315.6 L806.1 312.3 L806.9 310.1 L807.7 320.5 L808.4 317.8 L809.2 310.9 L810.0 305.6 L810.8 326.1 L811.5 314.2 L812.3 328.9 L813.1 330.5 L813.8 327.9 L814.6 323.1 L815.3 335.6 L816.1 320.3 L816.8 314.0 L817.6 311.9 L818.3 314.4 L819.0 329.2 L819.8 315.4 L820.5 321.3 L821.2 322.2 L821.9 326.3 L822.6 319.8 L823.3 315.2 L824.0 326.7 L824.7 317.9 L825.4 308.6 L826.1 324.2 L826.8 316.6 L827.5 336.7 L828.2 323.5 L828.9 322.3 L829.5 326.6 L830.2 328.2 L830.9 321.5 L831.5 318.4 L832.2 322.9 L832.9 322.2 L833.5 324.1 L834.2 330.3 L834.8 334.6 L835.5 318.4 L836.1 318.9 L836.8 318.2 L837.4 327.3 L838.0 312.3 L838.7 318.6 L839.3 313.0 L839.9 322.3 L840.5 310.8 L841.2 329.0 L841.8 313.1 L842.4 308.7 L843.0 311.1 L843.6 339.7 L844.2 322.9 L844.8 318.4 L845.4 328.8 L846.0 326.6 L846.6 323.8 L847.2 328.2 L847.8 322.7 L848.4 329.7 L849.0 327.9 L849.6 324.6 L850.2 326.5 L850.7 326.1 L851.3 326.0 L851.9 331.2 L852.5 327.5 L853.0 343.0 L853.6 321.4 L854.2 322.1 L854.7 316.7 L855.3 321.7 L855.9 315.7 L856.4 318.9 L857.0 320.1 L857.5 327.1 L858.1 331.5 L858.6 327.1 L859.2 322.0 L859.7 330.2 L860.2 317.0 L860.8 333.9 L861.3 339.5 L861.8 310.1 L862.4 326.9 L862.9 316.5 L863.4 325.4 L864.0 357.5 L864.5 322.2 L865.0 318.9 L865.5 306.3 L866.0 319.2 L866.6 323.8 L867.1 340.8 L867.6 330.9 L868.1 328.7 L868.6 327.0 L869.1 331.6 L869.6 322.2 L870.1 325.1 L870.6 333.0 L871.1 318.6 L871.6 324.5 L872.1 333.2 L872.6 320.5 L873.1 325.4 L873.6 325.0 L874.1 324.4 L874.6 334.4 L875.1 327.8 L875.5 333.1 L876.0 328.5 L876.5 328.5 L877.0 323.1 L877.5 334.0 L877.9 339.6 L878.4 333.6 L878.9 337.5 L879.3 323.2 L879.8 330.6 L880.3 326.1 L880.8 330.6 L881.2 325.4 L881.7 338.0 L882.1 329.7 L882.6 333.3 L883.1 308.0 L883.5 339.5 L884.0 336.5 L884.4 324.4 L884.9 333.7 L885.3 342.9 L885.8 327.8 L886.2 333.7 L886.7 312.2 L887.1 321.6 L887.6 333.6 L888.0 347.4 L888.4 324.5 L888.9 314.3 L889.3 319.1 L889.7 324.9 L890.2 326.0 L890.6 329.9 L891.0 335.4 L891.5 323.5 L891.9 320.8 L892.3 327.4 L892.8 319.1 L893.2 326.0 L893.6 324.9 L894.0 316.7 L894.5 323.7 L894.9 334.8 L895.3 334.1 L895.7 334.3 L896.1 329.5 L896.5 333.8 L897.0 324.1 L897.4 309.3 L897.8 316.7 L898.2 331.5 L898.6 319.1 L899.0 338.4 L899.4 316.5 L899.8 332.7 L900.2 328.0 L900.6 319.5 L901.0 337.0 L901.4 330.4 L901.8 329.0 L902.2 332.3 L902.6 325.0 L903.0 336.7 L903.4 325.0 L903.8 324.1 L904.2 321.3 L904.6 320.2 L905.0 349.3 L905.4 338.6 L905.8 321.4 L906.1 330.1 L906.5 331.9 L906.9 322.7 L907.3 328.6 L907.7 326.7 L908.1 346.5 L908.4 321.6 L908.8 337.6 L909.2 320.5 L909.6 336.4 L910.0 325.5 L910.3 332.3 L910.7 317.9 L911.1 326.5 L911.5 339.5 L911.8 320.2 L912.2 320.0 L912.6 314.0 L912.9 311.0 L913.3 317.3 L913.7 323.9 L914.0 328.3 L914.4 321.1 L914.8 335.4 L915.1 315.8 L915.5 331.8 L915.8 320.0 L916.2 321.2 L916.6 329.7 L916.9 316.3 L917.3 339.2 L917.6 327.8 L918.0 343.3 L918.3 329.2 L918.7 329.9 L919.0 325.1 L919.4 328.8 L919.7 330.2 L920.1 315.0 L920.4 321.0 L920.8 320.4 L921.1 331.3 L921.5 330.7 L921.8 322.6 L922.2 343.9 L922.5 330.6 L922.9 337.3 L923.2 332.0 L923.5 316.0 L923.9 332.0 L924.2 326.9 L924.6 323.2 L924.9 322.8 L925.2 317.9 L925.6 330.5 L925.9 320.6 L926.2 325.2 L926.6 329.4 L926.9 342.3 L927.2 323.2 L927.6 317.6 L927.9 324.1 L928.2 323.1 L928.6 337.1 L928.9 328.0 L929.2 322.0 L929.5 338.5 L929.9 331.3 L930.2 329.9 L930.5 331.1 L930.8 334.3 L931.2 324.8 L931.5 322.1 L931.8 335.1 L932.1 317.9 L932.4 330.1 L932.8 330.7 L933.1 327.1 L933.4 327.3 L933.7 326.1 L934.0 334.0 L934.3 341.8 L934.7 330.0 L935.0 316.3 L935.3 332.8 L935.6 332.2 L935.9 330.4 L936.2 328.0 L936.5 333.3 L936.8 334.3 L937.2 319.4 L937.5 360.7 L937.8 321.6 L938.1 324.6 L938.4 329.9 L938.7 320.7 L939.0 331.2 L939.3 328.4 L939.6 332.3 L939.9 323.0 L940.2 336.8 L940.5 328.2 L940.8 330.0 L941.1 320.8 L941.4 330.5 L941.7 322.9 L942.0 328.1 L942.3 330.0 L942.6 327.1 L942.9 329.7 L943.2 348.2 L943.5 332.0 L943.8 327.8 L944.1 323.0 L944.4 332.5 L944.7 337.7 L944.9 325.5 L945.2 337.0 L945.5 320.4 L945.8 347.1 L946.1 333.4 L946.4 320.0 L946.7 324.0 L947.0 326.0 L947.3 330.3 L947.5 336.0 L947.8 319.5 L948.1 314.8 L948.4 347.1 L948.7 313.8 L949.0 324.1 L949.3 340.6 L949.5 317.2 L949.8 334.6 L950.1 329.9 L950.4 326.2 L950.7 326.7 L950.9 313.8 L951.2 332.0 L951.5 328.0 L951.8 331.8 L952.1 318.6 L952.3 335.7 L952.6 349.0 L952.9 338.3 L953.2 338.1 L953.4 333.2 L953.7 323.8 L954.0 335.9 L954.2 338.2 L954.5 333.9 L954.8 332.8 L955.1 336.2 L955.3 332.8 L955.6 337.0 L955.9 322.6" fill="none" stroke="#0000FF" stroke-width="2" stroke-linejoin="miter" shape-rendering="crispEdges"/><path d="M97.8 210.0 L193.2 244.9 L249.0 249.6 L288.6 272.1 L319.3 267.8 L344.4 253.5 L365.6 247.8 L383.9 283.3 L400.1 271.2 L414.6 281.5 L427.8 276.2 L439.7 326.3 L450.7 276.1 L460.9 332.9 L470.4 305.1 L479.3 310.0 L487.7 290.2 L495.5 333.5 L503.0 276.5 L510.0 314.8 L516.7 284.4 L523.1 313.8 L529.2 310.8 L535.1 298.2 L540.7 318.6 L546.1 302.4 L551.3 327.7 L556.3 307.7 L561.1 335.3 L565.8 354.3 L570.3 340.4 L574.7 293.6 L578.9 319.9 L583.0 305.3 L587.0 320.5 L590.9 297.0 L594.7 292.9 L598.3 318.9 L601.9 331.9 L605.4 356.2 L608.8 285.6 L612.1 317.9 L615.3 290.8 L618.5 338.6 L621.6 352.5 L624.6 320.4 L627.6 311.9 L630.5 334.5 L633.3 317.1 L636.1 311.8 L638.8 302.8 L641.5 300.8 L644.1 318.5 L646.7 327.1 L649.2 316.6 L651.7 341.0 L654.1 322.1 L656.5 312.2 L658.9 330.9 L661.2 310.6 L663.4 311.5 L665.7 315.3 L667.9 321.7 L670.0 308.4 L672.2 315.7 L674.3 335.7 L676.3 314.2 L678.4 300.1 L680.4 333.0 L682.4 330.5 L684.3 332.3 L686.2 341.4 L688.1 328.7 L690.0 320.4 L691.9 326.7 L693.7 315.3 L695.5 322.6 L697.3 283.7 L699.0 330.4 L700.7 323.3 L702.5 326.9 L704.1 324.3 L705.8 314.8 L707.5 314.5 L709.1 308.7 L710.7 316.6 L712.3 313.5 L713.9 333.9 L715.4 327.4 L716.9 297.1 L718.5 340.0 L720.0 322.4 L721.5 316.6 L722.9 339.0 L724.4 324.5 L725.8 318.4 L727.3 306.4 L728.7 325.3 L730.1 328.3 L731.4 321.8 L732.8 323.3 L734.2 344.9 L735.5 320.8 L736.8 336.4 L738.2 323.3 L739.5 328.7 L740.8 323.6 L742.0 330.9 L743.3 327.1 L744.6 328.3 L745.8 332.7 L747.0 308.3 L748.3 317.1 L749.5 339.0 L750.7 331.0 L751.9 310.4 L753.0 323.4 L754.2 332.9 L755.4 313.5 L756.5 319.6 L757.7 326.6 L758.8 322.7 L759.9 325.2 L761.0 312.3 L762.1 320.6 L763.2 327.0 L764.3 317.3 L765.4 324.5 L766.5 318.2 L767.5 325.8 L768.6 322.6 L769.6 310.6 L770.7 313.9 L771.7 304.2 L772.7 320.0 L773.8 333.6 L774.8 330.3 L775.8 318.0 L776.8 334.6 L777.7 328.6 L778.7 324.1 L779.7 336.7 L780.7 317.9 L781.6 364.2 L782.6 328.5 L783.5 322.4 L784.5 334.1 L785.4 313.0 L786.3 321.1 L787.2 332.2 L788.1 335.8 L789.1 325.5 L790.0 316.9 L790.9 331.3 L791.7 324.9 L792.6 321.6 L793.5 323.7 L794.4 322.5 L795.2 313.3 L796.1 322.6 L797.0 321.1 L797.8 322.0 L798.7 320.0 L799.5 314.2 L800.3 330.2 L801.2 328.5 L802.0 321.5 L802.8 317.1 L803.6 335.9 L804.5 328.3 L805.3 325.3 L806.1 324.3 L806.9 316.9 L807.7 323.4 L808.4 331.7 L809.2 328.4 L810.0 316.8 L810.8 320.1 L811.5 309.7 L812.3 332.5 L813.1 319.7 L813.8 324.1 L814.6 333.1 L815.3 337.1 L816.1 320.0 L816.8 321.7 L817.6 333.1 L818.3 329.8 L819.0 343.4 L819.8 317.5 L820.5 327.7 L821.2 325.7 L821.9 317.2 L822.6 323.0 L823.3 324.1 L824.0 319.1 L824.7 323.4 L825.4 324.2 L826.1 330.0 L826.8 309.3 L827.5 315.0 L828.2 314.5 L828.9 323.3 L829.5 320.9 L830.2 314.0 L830.9 312.8 L831.5 327.0 L832.2 337.8 L832.9 316.2 L833.5 329.8 L834.2 317.9 L834.8 325.1 L835.5 312.9 L836.1 322.3 L836.8 325.4 L837.4 311.0 L838.0 312.4 L838.7 320.4 L839.3 317.8 L839.9 324.6 L840.5 311.3 L841.2 328.2 L841.8 319.1 L842.4 317.3 L843.0 322.0 L843.6 330.6 L844.2 316.1 L844.8 330.3 L845.4 335.2 L846.0 316.9 L846.6 341.8 L847.2 316.5 L847.8 323.4 L848.4 312.4 L849.0 319.2 L849.6 313.8 L850.2 326.6 L850.7 321.1 L851.3 326.9 L851.9 333.2 L852.5 323.0 L853.0 337.1 L853.6 335.6 L854.2 328.8 L854.7 320.4 L855.3 329.1 L855.9 335.5 L856.4 337.1 L857.0 321.8 L857.5 327.7 L858.1 319.0 L858.6 332.3 L859.2 325.8 L859.7 322.6 L860.2 317.8 L860.8 320.1 L861.3 327.5 L861.8 320.3 L862.4 326.6 L862.9 327.3 L863.4 325.6 L864.0 333.1 L864.5 331.2 L865.0 322.9 L865.5 336.9 L866.0 323.3 L866.6 320.0 L867.1 347.7 L867.6 337.7 L868.1 329.5 L868.6 330.6 L869.1 318.2 L869.6 313.2 L870.1 320.6 L870.6 324.4 L871.1 303.6 L871.6 335.2 L872.1 332.6 L872.6 321.9 L873.1 341.7 L873.6 330.1 L874.1 307.3 L874.6 337.8 L875.1 321.9 L875.5 340.7 L876.0 337.5 L876.5 326.6 L877.0 326.4 L877.5 315.9 L877.9 332.7 L878.4 327.2 L878.9 336.3 L879.3 330.9 L879.8 321.4 L880.3 330.8 L880.8 337.1 L881.2 331.5 L881.7 318.1 L882.1 333.2 L882.6 320.7 L883.1 333.6 L883.5 312.7 L884.0 340.0 L884.4 330.6 L884.9 343.1 L885.3 324.9 L885.8 331.8 L886.2 330.8 L886.7 322.3 L887.1 326.8 L887.6 324.2 L888.0 329.9 L888.4 333.0 L888.9 328.4 L889.3 326.0 L889.7 326.3 L890.2 317.2 L890.6 330.0 L891.0 328.3 L891.5 332.8 L891.9 324.3 L892.3 330.7 L892.8 328.3 L893.2 333.7 L893.6 317.7 L894.0 313.0 L894.5 321.3 L894.9 326.2 L895.3 329.4 L895.7 364.3 L896.1 337.6 L896.5 321.3 L897.0 328.9 L897.4 342.8 L897.8 333.1 L898.2 316.0 L898.6 317.4 L899.0 323.4 L899.4 327.2 L899.8 332.5 L900.2 335.4 L900.6 320.3 L901.0 333.2 L901.4 334.1 L901.8 326.4 L902.2 340.8 L902.6 333.6 L903.0 317.0 L903.4 326.3 L903.8 332.4 L904.2 342.7 L904.6 323.8 L905.0 323.6 L905.4 320.6 L905.8 329.0 L906.1 331.0 L906.5 326.8 L906.9 321.6 L907.3 334.0 L907.7 338.8 L908.1 316.1 L908.4 320.2 L908.8 324.1 L909.2 326.0 L909.6 309.4 L910.0 331.5 L910.3 324.6 L910.7 323.5 L911.1 329.3 L911.5 313.7 L911.8 321.1 L912.2 334.7 L912.6 334.4 L912.9 324.7 L913.3 337.5 L913.7 334.1 L914.0 354.8 L914.4 336.8 L914.8 334.2 L915.1 327.6 L915.5 337.0 L915.8 329.2 L916.2 323.8 L916.6 316.7 L916.9 316.2 L917.3 330.9 L917.6 324.2 L918.0 325.8 L918.3 325.3 L918.7 326.6 L919.0 341.4 L919.4 323.0 L919.7 322.7 L920.1 325.4 L920.4 331.8 L920.8 324.9 L921.1 318.8 L921.5 322.3 L921.8 322.2 L922.2 337.9 L922.5 327.9 L922.9 325.7 L923.2 335.0 L923.5 326.6 L923.9 342.9 L924.2 327.8 L924.6 335.2 L924.9 325.2 L925.2 329.2 L925.6 317.6 L925.9 330.1 L926.2 327.0 L926.6 353.1 L926.9 332.4 L927.2 322.4 L927.6 338.5 L927.9 328.8 L928.2 322.8 L928.6 323.5 L928.9 340.8 L929.2 330.3 L929.5 347.0 L929.9 333.7 L930.2 351.7 L930.5 326.7 L930.8 334.7 L931.2 325.9 L931.5 330.4 L931.8 314.4 L932.1 339.2 L932.4 328.9 L932.8 334.3 L933.1 332.5 L933.4 320.7 L933.7 347.6 L934.0 329.3 L934.3 319.9 L934.7 345.3 L935.0 323.2 L935.3 331.5 L935.6 328.3 L935.9 320.3 L936.2 331.4 L936.5 317.9 L936.8 335.4 L937.2 323.4 L937.5 326.3 L937.8 342.9 L938.1 326.9 L938.4 325.4 L938.7 326.8 L939.0 333.7 L939.3 331.0 L939.6 330.5 L939.9 333.5 L940.2 325.3 L940.5 333.1 L940.8 354.0 L941.1 340.2 L941.4 324.2 L941.7 344.5 L942.0 311.8 L942.3 331.8 L942.6 388.8 L942.9 325.0 L943.2 311.7 L943.5 337.7 L943.8 316.9 L944.1 323.8 L944.4 326.1 L944.7 331.7 L944.9 320.0 L945.2 319.4 L945.5 325.8 L945.8 323.2 L946.1 335.1 L946.4 328.9 L946.7 310.4 L947.0 337.1 L947.3 334.5 L947.5 321.3 L947.8 324.0 L948.1 318.4 L948.4 321.5 L948.7 339.2 L949.0 341.7 L949.3 326.1 L949.5 345.3 L949.8 371.3 L950.1 338.9 L950.4 324.2 L950.7 330.2 L950.9 329.2 L951.2 330.6 L951.5 334.5 L951.8 338.2 L952.1 333.5 L952.3 338.0 L952.6 339.7 L952.9 336.9 L953.2 323.0 L953.4 324.4 L953.7 325.2 L954.0 361.9 L954.2 335.2 L954.5 346.3 L954.8 342.0 L955.1 330.6 L955.3 332.3 L955.6 326.4 L955.9 311.3" fill="none" stroke="#0000D0" stroke-width="2" stroke-linejoin="miter" shape-rendering="crispEdges"/><path d="M97.8 208.1 L193.2 243.3 L249.0 253.2 L288.6 258.7 L319.3 264.5 L344.4 265.7 L365.6 280.3 L383.9 293.1 L400.1 309.0 L414.6 314.2 L427.8 291.7 L439.7 310.9 L450.7 297.4 L460.9 328.1 L470.4 312.9 L479.3 296.2 L487.7 298.5 L495.5 321.2 L503.0 302.4 L510.0 329.5 L516.7 306.8 L523.1 326.6 L529.2 317.0 L535.1 348.6 L540.7 297.7 L546.1 318.0 L551.3 300.9 L556.3 349.3 L561.1 314.8 L565.8 329.7 L570.3 319.0 L574.7 290.4 L578.9 311.5 L583.0 342.8 L587.0 323.2 L590.9 308.0 L594.7 326.5 L598.3 301.6 L601.9 323.4 L605.4 338.5 L608.8 327.7 L612.1 327.6 L615.3 325.8 L618.5 331.4 L621.6 341.8 L624.6 313.8 L627.6 304.5 L630.5 340.4 L633.3 320.4 L636.1 305.6 L638.8 341.0 L641.5 335.6 L644.1 347.2 L646.7 317.6 L649.2 341.9 L651.7 323.1 L654.1 320.7 L656.5 327.0 L658.9 330.0 L661.2 330.4 L663.4 339.1 L665.7 295.4 L667.9 318.4 L670.0 303.5 L672.2 312.5 L674.3 324.3 L676.3 325.4 L678.4 307.7 L680.4 325.6 L682.4 320.0 L684.3 311.5 L686.2 332.0 L688.1 329.5 L690.0 323.5 L691.9 331.2 L693.7 316.4 L695.5 305.9 L697.3 329.9 L699.0 307.6 L700.7 331.2 L702.5 301.4 L704.1 319.3 L705.8 325.6 L707.5 312.6 L709.1 304.8 L710.7 325.7 L712.3 307.5 L713.9 313.9 L715.4 299.9 L716.9 308.9 L718.5 321.3 L720.0 314.7 L721.5 301.1 L722.9 297.3 L724.4 335.8 L725.8 312.6 L727.3 317.5 L728.7 320.4 L730.1 317.0 L731.4 322.5 L732.8 325.6 L734.2 316.1 L735.5 323.7 L736.8 320.4 L738.2 301.8 L739.5 296.2 L740.8 328.9 L742.0 316.4 L743.3 308.5 L744.6 320.4 L745.8 301.1 L747.0 319.1 L748.3 312.3 L749.5 300.6 L750.7 320.1 L751.9 317.3 L753.0 318.8 L754.2 319.8 L755.4 316.8 L756.5 325.6 L757.7 331.0 L758.8 330.1 L759.9 320.9 L761.0 321.2 L762.1 318.8 L763.2 322.4 L764.3 314.0 L765.4 312.5 L766.5 325.9 L767.5 324.1 L768.6 312.6 L769.6 316.7 L770.7 322.2 L771.7 327.8 L772.7 314.2 L773.8 313.0 L774.8 320.1 L775.8 312.0 L776.8 311.2 L777.7 313.2 L778.7 326.7 L779.7 324.9 L780.7 326.0 L781.6 321.0 L782.6 320.9 L783.5 341.3 L784.5 335.6 L785.4 329.4 L786.3 317.5 L787.2 316.3 L788.1 294.6 L789.1 303.3 L790.0 316.7 L790.9 323.1 L791.7 329.7 L792.6 317.3 L793.5 326.0 L794.4 325.5 L795.2 319.7 L796.1 328.6 L797.0 310.5 L797.8 309.2 L798.7 314.6 L799.5 329.3 L800.3 318.8 L801.2 317.5 L802.0 330.1 L802.8 316.0 L803.6 333.6 L804.5 332.9 L805.3 319.7 L806.1 330.6 L806.9 315.5 L807.7 316.0 L808.4 320.5 L809.2 312.0 L810.0 325.0 L810.8 331.1 L811.5 324.0 L812.3 324.5 L813.1 319.8 L813.8 314.5 L814.6 329.8 L815.3 317.8 L816.1 333.7 L816.8 328.6 L817.6 322.9 L818.3 313.8 L819.0 331.7 L819.8 321.7 L820.5 324.3 L821.2 312.6 L821.9 317.3 L822.6 331.5 L823.3 327.6 L824.0 318.3 L824.7 330.5 L825.4 361.8 L826.1 331.5 L826.8 314.4 L827.5 320.7 L828.2 327.4 L828.9 329.2 L829.5 327.0 L830.2 337.4 L830.9 318.4 L831.5 318.2 L832.2 320.2 L832.9 328.8 L833.5 335.9 L834.2 318.8 L834.8 324.0 L835.5 311.6 L836.1 331.2 L836.8 321.1 L837.4 328.6 L838.0 326.1 L838.7 326.0 L839.3 318.4 L839.9 326.7 L840.5 333.9 L841.2 313.0 L841.8 332.4 L842.4 321.7 L843.0 324.7 L843.6 326.2 L844.2 329.9 L844.8 331.8 L845.4 324.5 L846.0 337.9 L846.6 327.8 L847.2 320.8 L847.8 318.2 L848.4 323.3 L849.0 338.8 L849.6 324.2 L850.2 328.9 L850.7 322.8 L851.3 324.0 L851.9 321.3 L852.5 329.3 L853.0 340.0 L853.6 326.2 L854.2 331.5 L854.7 334.1 L855.3 319.3 L855.9 347.0 L856.4 320.2 L857.0 316.4 L857.5 329.8 L858.1 328.8 L858.6 320.7 L859.2 331.8 L859.7 312.0 L860.2 323.0 L860.8 319.2 L861.3 322.0 L861.8 328.4 L862.4 319.6 L862.9 322.8 L863.4 325.7 L864.0 337.7 L864.5 326.7 L865.0 325.1 L865.5 332.1 L866.0 336.3 L866.6 335.9 L867.1 320.8 L867.6 318.1 L868.1 324.5 L868.6 328.4 L869.1 316.8 L869.6 320.2 L870.1 336.4 L870.6 328.7 L871.1 319.0 L871.6 329.8 L872.1 334.1 L872.6 331.1 L873.1 322.4 L873.6 333.3 L874.1 332.3 L874.6 330.7 L875.1 332.5 L875.5 330.9 L876.0 321.4 L876.5 329.2 L877.0 331.3 L877.5 320.8 L877.9 327.8 L878.4 331.7 L878.9 343.4 L879.3 326.2 L879.8 334.9 L880.3 326.4 L880.8 332.6 L881.2 333.9 L881.7 327.7 L882.1 365.5 L882.6 336.7 L883.1 335.7 L883.5 328.3 L884.0 334.9 L884.4 338.3 L884.9 333.0 L885.3 331.5 L885.8 327.8 L886.2 325.8 L886.7 332.0 L887.1 327.6 L887.6 332.3 L888.0 324.8 L888.4 329.3 L888.9 327.4 L889.3 340.8 L889.7 360.6 L890.2 326.7 L890.6 331.9 L891.0 316.5 L891.5 339.0 L891.9 332.9 L892.3 324.5 L892.8 324.3 L893.2 344.2 L893.6 338.0 L894.0 328.8 L894.5 334.5 L894.9 335.0 L895.3 337.3 L895.7 327.1 L896.1 339.1 L896.5 328.9 L897.0 335.2 L897.4 331.0 L897.8 316.0 L898.2 315.6 L898.6 341.0 L899.0 335.5 L899.4 321.5 L899.8 331.3 L900.2 335.6 L900.6 325.1 L901.0 327.6 L901.4 333.2 L901.8 316.4 L902.2 362.6 L902.6 326.7 L903.0 339.7 L903.4 334.0 L903.8 324.7 L904.2 328.9 L904.6 332.6 L905.0 342.4 L905.4 323.9 L905.8 342.0 L906.1 332.1 L906.5 335.8 L906.9 328.3 L907.3 338.4 L907.7 344.6 L908.1 348.3 L908.4 327.6 L908.8 326.0 L909.2 342.3 L909.6 328.9 L910.0 334.4 L910.3 331.1 L910.7 329.7 L911.1 327.1 L911.5 337.1 L911.8 342.2 L912.2 332.8 L912.6 324.9 L912.9 325.3 L913.3 342.6 L913.7 337.3 L914.0 345.8 L914.4 343.7 L914.8 358.5 L915.1 344.2 L915.5 342.3 L915.8 319.4 L916.2 338.8 L916.6 328.0 L916.9 333.6 L917.3 358.9 L917.6 321.1 L918.0 324.9 L918.3 338.5 L918.7 327.1 L919.0 335.3 L919.4 330.6 L919.7 322.9 L920.1 320.2 L920.4 340.5 L920.8 341.9 L921.1 340.7 L921.5 331.9 L921.8 340.7 L922.2 324.7 L922.5 332.4 L922.9 320.2 L923.2 326.5 L923.5 335.4 L923.9 334.4 L924.2 337.9 L924.6 324.6 L924.9 336.0 L925.2 360.4 L925.6 336.0 L925.9 334.0 L926.2 342.9 L926.6 327.0 L926.9 338.7 L927.2 343.6 L927.6 376.6 L927.9 348.4 L928.2 341.8 L928.6 325.8 L928.9 333.6 L929.2 326.6 L929.5 343.3 L929.9 319.5 L930.2 329.9 L930.5 330.1 L930.8 325.2 L931.2 333.8 L931.5 338.2 L931.8 333.6 L932.1 337.2 L932.4 335.4 L932.8 330.9 L933.1 339.8 L933.4 343.3 L933.7 341.1 L934.0 334.6 L934.3 354.4 L934.7 344.8 L935.0 326.7 L935.3 344.4 L935.6 324.2 L935.9 342.0 L936.2 319.1 L936.5 341.5 L936.8 326.7 L937.2 326.8 L937.5 328.9 L937.8 325.4 L938.1 335.5 L938.4 320.0 L938.7 321.0 L939.0 321.7 L939.3 335.1 L939.6 332.8 L939.9 332.0 L940.2 340.7 L940.5 317.3 L940.8 336.0 L941.1 327.4 L941.4 339.9 L941.7 329.3 L942.0 336.6 L942.3 317.1 L942.6 341.8 L942.9 329.9 L943.2 318.7 L943.5 331.8 L943.8 328.2 L944.1 346.2 L944.4 336.2 L944.7 335.7 L944.9 343.9 L945.2 334.4 L945.5 331.3 L945.8 331.2 L946.1 333.1 L946.4 320.8 L946.7 341.8 L947.0 333.6 L947.3 338.5 L947.5 338.4 L947.8 330.8 L948.1 329.1 L948.4 333.9 L948.7 339.6 L949.0 331.0 L949.3 327.7 L949.5 343.8 L949.8 344.2 L950.1 327.8 L950.4 333.6 L950.7 328.1 L950.9 339.2 L951.2 329.9 L951.5 325.3 L951.8 333.4 L952.1 342.0 L952.3 330.3 L952.6 346.4 L952.9 328.9 L953.2 335.7 L953.4 334.9 L953.7 338.2 L954.0 329.3 L954.2 343.1 L954.5 334.7 L954.8 341.5 L955.1 329.5 L955.3 334.4 L955.6 326.9 L955.9 324.8" fill="none" stroke="#0000FF" stroke-width="2" stroke-linejoin="miter" shape-rendering="crispEdges"/><path d="M503.0 294.1 L510.0 283.7 L516.7 293.7 L523.1 281.2 L529.2 281.6 L535.1 284.7 L540.7 301.6 L546.1 272.9 L551.3 285.1 L556.3 276.9 L561.1 278.6 L565.8 272.2 L570.3 266.2 L574.7 284.5 L578.9 263.9 L583.0 256.9 L587.0 251.3 L590.9 224.7 L594.7 173.1 L598.3 148.1 L601.9 145.2 L605.4 155.8 L608.8 195.7 L612.1 212.1 L615.3 197.1 L618.5 168.0 L621.6 147.4 L624.6 138.2 L627.6 129.2 L630.5 140.0 L633.3 165.9 L636.1 174.8 L638.8 185.3 L641.5 198.6 L644.1 204.1 L646.7 198.2 L649.2 191.7 L651.7 186.3 L654.1 189.2 L656.5 190.9 L658.9 194.8 L661.2 198.0 L663.4 214.1 L665.7 221.7 L667.9 219.7 L670.0 216.6 L672.2 217.1 L674.3 214.1 L676.3 207.7 L678.4 209.4 L680.4 213.9 L682.4 208.7 L684.3 205.6 L686.2 212.3 L688.1 209.2 L690.0 203.6 L691.9 198.5 L693.7 197.2 L695.5 202.7 L697.3 209.0 L699.0 219.5 L700.7 223.5 L702.5 231.4 L704.1 235.2 L705.8 233.2 L707.5 228.2 L709.1 227.5 L710.7 225.0 L712.3 224.3 L713.9 221.8 L715.4 219.3 L716.9 216.7 L718.5 213.9 L720.0 212.6 L721.5 207.8 L722.9 203.2 L724.4 196.5 L725.8 194.3 L727.3 194.7 L728.7 190.6 L730.1 188.7 L731.4 184.2 L732.8 180.3 L734.2 176.6 L735.5 174.2 L736.8 173.9 L738.2 180.2 L739.5 184.1 L740.8 184.3 L742.0 196.1 L743.3 188.0 L744.6 189.6 L745.8 189.7 L747.0 193.4 L748.3 191.8 L749.5 202.3 L750.7 204.5 L751.9 214.0 L753.0 211.9 L754.2 209.7 L755.4 212.0 L756.5 215.8 L757.7 220.0 L758.8 225.2 L759.9 233.3 L761.0 228.4 L762.1 228.7 L763.2 225.4 L764.3 222.2 L765.4 222.7 L766.5 223.6 L767.5 226.0 L768.6 221.6 L769.6 221.0 L770.7 219.5 L771.7 216.4 L772.7 215.3 L773.8 215.4 L774.8 213.3 L775.8 215.5 L776.8 215.9 L777.7 218.2 L778.7 216.5 L779.7 220.1 L780.7 215.6 L781.6 216.3 L782.6 216.0 L783.5 215.3 L784.5 213.9 L785.4 212.9 L786.3 210.1 L787.2 211.0 L788.1 206.0 L789.1 201.4 L790.0 207.0 L790.9 205.2 L791.7 206.7 L792.6 205.5 L793.5 209.7 L794.4 212.6 L795.2 212.9 L796.1 215.2 L797.0 218.9 L797.8 219.4 L798.7 221.4 L799.5 223.1 L800.3 224.9 L801.2 224.8 L802.0 228.4 L802.8 230.7 L803.6 228.7 L804.5 231.7 L805.3 233.9 L806.1 233.7 L806.9 235.4 L807.7 240.4 L808.4 242.1 L809.2 243.0 L810.0 242.6 L810.8 244.6 L811.5 262.3 L812.3 249.9 L813.1 248.8 L813.8 245.2 L814.6 247.3 L815.3 243.3 L816.1 241.2 L816.8 244.4 L817.6 244.4 L818.3 248.1 L819.0 246.9 L819.8 248.0 L820.5 248.8 L821.2 248.8 L821.9 249.6 L822.6 249.0 L823.3 249.5 L824.0 246.5 L824.7 247.4 L825.4 242.6 L826.1 242.8 L826.8 240.8 L827.5 236.2 L828.2 239.4 L828.9 238.6 L829.5 239.5 L830.2 242.4 L830.9 240.3 L831.5 239.3 L832.2 239.7 L832.9 244.8 L833.5 248.0 L834.2 264.1 L834.8 257.3 L835.5 256.8 L836.1 265.3 L836.8 262.2 L837.4 264.9 L838.0 262.4 L838.7 264.3 L839.3 266.9 L839.9 263.4 L840.5 263.3 L841.2 261.9 L841.8 260.8 L842.4 261.6 L843.0 257.4 L843.6 261.0 L844.2 259.8 L844.8 259.1 L845.4 257.3 L846.0 256.5 L846.6 255.5 L847.2 254.9 L847.8 253.1 L848.4 252.9 L849.0 250.7 L849.6 266.8 L850.2 253.0 L850.7 256.0 L851.3 256.2 L851.9 254.3 L852.5 258.2 L853.0 259.1 L853.6 259.1 L854.2 256.3 L854.7 260.4 L855.3 261.2 L855.9 261.7 L856.4 263.4 L857.0 265.3 L857.5 267.1 L858.1 265.7 L858.6 268.4 L859.2 270.5 L859.7 268.4 L860.2 271.4 L860.8 269.2 L861.3 271.5 L861.8 271.3 L862.4 273.4 L862.9 274.1 L863.4 273.7 L864.0 273.8 L864.5 276.8 L865.0 277.9 L865.5 281.7 L866.0 278.0 L866.6 281.0 L867.1 299.4 L867.6 286.3 L868.1 284.4 L868.6 287.3 L869.1 287.3 L869.6 290.9 L870.1 291.6 L870.6 289.1 L871.1 291.0 L871.6 286.3 L872.1 289.0 L872.6 288.3 L873.1 287.9 L873.6 285.1 L874.1 284.7 L874.6 284.7 L875.1 284.6 L875.5 280.8 L876.0 283.3 L876.5 284.7 L877.0 281.9 L877.5 282.0 L877.9 283.5 L878.4 284.3 L878.9 284.1 L879.3 285.1 L879.8 284.1 L880.3 286.6 L880.8 284.2 L881.2 288.1 L881.7 287.0 L882.1 298.2 L882.6 288.9 L883.1 286.3 L883.5 289.5 L884.0 291.1 L884.4 286.5 L884.9 290.0 L885.3 288.0 L885.8 288.0 L886.2 288.9 L886.7 287.8 L887.1 290.4 L887.6 287.5 L888.0 291.8 L888.4 287.3 L888.9 283.8 L889.3 283.6 L889.7 280.8 L890.2 282.8 L890.6 283.2 L891.0 282.5 L891.5 292.2 L891.9 279.9 L892.3 282.3 L892.8 281.7 L893.2 284.6 L893.6 285.8 L894.0 286.6 L894.5 289.5 L894.9 292.9 L895.3 294.7 L895.7 297.4 L896.1 293.9 L896.5 294.1 L897.0 292.6 L897.4 293.5 L897.8 291.0 L898.2 291.3 L898.6 289.1 L899.0 288.0 L899.4 285.7 L899.8 284.6 L900.2 284.5 L900.6 284.5 L901.0 290.0 L901.4 286.2 L901.8 288.7 L902.2 289.4 L902.6 294.4 L903.0 293.4 L903.4 296.5 L903.8 298.0 L904.2 297.9 L904.6 294.7 L905.0 295.7 L905.4 292.5 L905.8 295.9 L906.1 294.4 L906.5 294.3 L906.9 294.6 L907.3 292.5 L907.7 291.3 L908.1 293.0 L908.4 293.6 L908.8 289.2 L909.2 293.9 L909.6 294.6 L910.0 292.8 L910.3 294.4 L910.7 296.5 L911.1 296.0 L911.5 298.3 L911.8 298.4 L912.2 296.3 L912.6 297.8 L912.9 298.2 L913.3 298.0 L913.7 297.8 L914.0 294.1 L914.4 299.0 L914.8 299.0 L915.1 298.2 L915.5 301.0 L915.8 309.6 L916.2 297.3 L916.6 300.1 L916.9 300.8 L917.3 299.2 L917.6 299.1 L918.0 303.7 L918.3 301.7 L918.7 301.1 L919.0 298.2 L919.4 299.4 L919.7 301.8 L920.1 301.7 L920.4 303.2 L920.8 298.7 L921.1 301.8 L921.5 298.5 L921.8 298.2 L922.2 303.6 L922.5 300.7 L922.9 302.3 L923.2 301.4 L923.5 301.1 L923.9 303.1 L924.2 303.0 L924.6 305.9 L924.9 304.2 L925.2 305.4 L925.6 306.3 L925.9 307.2 L926.2 307.3 L926.6 307.9 L926.9 307.2 L927.2 305.4 L927.6 309.7 L927.9 312.6 L928.2 312.1 L928.6 306.7 L928.9 307.4 L929.2 308.5 L929.5 309.9 L929.9 322.2 L930.2 306.9 L930.5 303.9 L930.8 305.2 L931.2 304.2 L931.5 303.9 L931.8 304.5 L932.1 303.2 L932.4 302.3 L932.8 305.4 L933.1 308.8 L933.4 303.6 L933.7 306.0 L934.0 305.7 L934.3 305.0 L934.7 306.7 L935.0 304.7 L935.3 307.0 L935.6 306.4 L935.9 308.9 L936.2 309.6 L936.5 308.4 L936.8 306.8 L937.2 307.4 L937.5 305.2 L937.8 307.5 L938.1 303.1 L938.4 302.3 L938.7 299.5 L939.0 302.9 L939.3 303.3 L939.6 309.5 L939.9 300.2 L940.2 297.7 L940.5 301.1 L940.8 301.0 L941.1 300.0 L941.4 303.0 L941.7 299.2 L942.0 298.9 L942.3 297.7 L942.6 297.1 L942.9 297.8 L943.2 297.4 L943.5 316.8 L943.8 301.0 L944.1 299.3 L944.4 301.5 L944.7 303.5 L944.9 303.4 L945.2 306.3 L945.5 306.9 L945.8 307.7 L946.1 309.2 L946.4 307.8 L946.7 311.5 L947.0 311.9 L947.3 315.0 L947.5 312.3 L947.8 314.8 L948.1 316.1 L948.4 316.9 L948.7 317.1 L949.0 315.5 L949.3 316.9 L949.5 316.0 L949.8 317.9 L950.1 317.4 L950.4 320.0 L950.7 317.4 L950.9 315.9 L951.2 314.9 L951.5 316.5 L951.8 316.4" fill="none" stroke="#0000FF" stroke-width="2" shape-rendering="crispEdges"/><path d="M487.7 293.1 L495.5 307.8 L503.0 297.1 L510.0 294.9 L516.7 307.2 L523.1 296.5 L529.2 296.0 L535.1 302.3 L540.7 294.7 L546.1 298.5 L551.3 298.5 L556.3 291.5 L561.1 305.2 L565.8 287.1 L570.3 276.2 L574.7 270.1 L578.9 269.2 L583.0 256.8 L587.0 245.8 L590.9 241.6 L594.7 228.3 L598.3 216.8 L601.9 207.0 L605.4 201.0 L608.8 218.8 L612.1 228.9 L615.3 234.8 L618.5 222.2 L621.6 214.6 L624.6 214.1 L627.6 213.5 L630.5 223.9 L633.3 233.3 L636.1 243.7 L638.8 251.7 L641.5 253.7 L644.1 248.8 L646.7 239.1 L649.2 238.2 L651.7 244.6 L654.1 238.2 L656.5 232.7 L658.9 229.8 L661.2 233.4 L663.4 241.1 L665.7 245.5 L667.9 252.1 L670.0 255.1 L672.2 266.8 L674.3 265.4 L676.3 268.6 L678.4 295.6 L680.4 286.5 L682.4 284.5 L684.3 283.9 L686.2 279.8 L688.1 276.8 L690.0 265.9 L691.9 269.4 L693.7 251.7 L695.5 246.8 L697.3 247.2 L699.0 247.2 L700.7 261.4 L702.5 245.3 L704.1 241.8 L705.8 250.6 L707.5 250.1 L709.1 253.6 L710.7 254.7 L712.3 258.1 L713.9 258.4 L715.4 255.6 L716.9 253.2 L718.5 248.7 L720.0 247.2 L721.5 243.9 L722.9 253.6 L724.4 235.6 L725.8 237.2 L727.3 241.9 L728.7 241.4 L730.1 233.6 L731.4 231.9 L732.8 227.1 L734.2 225.3 L735.5 224.8 L736.8 225.2 L738.2 227.5 L739.5 230.5 L740.8 229.7 L742.0 225.2 L743.3 223.8 L744.6 221.1 L745.8 225.6 L747.0 226.2 L748.3 224.7 L749.5 227.0 L750.7 227.6 L751.9 230.3 L753.0 230.6 L754.2 233.6 L755.4 235.0 L756.5 239.2 L757.7 242.8 L758.8 248.9 L759.9 255.1 L761.0 254.3 L762.1 252.5 L763.2 251.3 L764.3 251.7 L765.4 248.1 L766.5 249.6 L767.5 245.7 L768.6 246.8 L769.6 251.5 L770.7 253.9 L771.7 254.5 L772.7 257.3 L773.8 258.6 L774.8 259.8 L775.8 260.1 L776.8 256.6 L777.7 255.1 L778.7 253.6 L779.7 253.2 L780.7 255.5 L781.6 253.3 L782.6 258.2 L783.5 260.8 L784.5 260.5 L785.4 256.7 L786.3 257.4 L787.2 253.8 L788.1 253.0 L789.1 250.7 L790.0 253.9 L790.9 254.6 L791.7 253.3 L792.6 256.8 L793.5 256.5 L794.4 258.9 L795.2 260.5 L796.1 263.8 L797.0 261.8 L797.8 259.9 L798.7 262.6 L799.5 263.3 L800.3 259.4 L801.2 259.4 L802.0 259.2 L802.8 257.5 L803.6 258.8 L804.5 258.9 L805.3 259.4 L806.1 259.6 L806.9 262.3 L807.7 259.0 L808.4 260.5 L809.2 261.0 L810.0 260.1 L810.8 260.2 L811.5 261.5 L812.3 259.3 L813.1 262.7 L813.8 268.4 L814.6 269.9 L815.3 274.5 L816.1 272.7 L816.8 276.1 L817.6 271.4 L818.3 267.7 L819.0 267.0 L819.8 268.0 L820.5 266.3 L821.2 267.5 L821.9 269.7 L822.6 269.6 L823.3 269.6 L824.0 270.0 L824.7 274.7 L825.4 276.0 L826.1 278.4 L826.8 279.2 L827.5 282.9 L828.2 284.3 L828.9 287.0 L829.5 286.4 L830.2 282.3 L830.9 284.8 L831.5 283.6 L832.2 284.1 L832.9 284.1 L833.5 284.9 L834.2 285.5 L834.8 286.4 L835.5 287.6 L836.1 284.6 L836.8 283.6 L837.4 282.5 L838.0 278.3 L838.7 290.8 L839.3 276.0 L839.9 278.2 L840.5 274.4 L841.2 275.8 L841.8 274.3 L842.4 276.8 L843.0 276.6 L843.6 277.1 L844.2 276.6 L844.8 274.6 L845.4 273.1 L846.0 270.6 L846.6 272.0 L847.2 270.1 L847.8 272.3 L848.4 270.3 L849.0 268.6 L849.6 266.1 L850.2 267.2 L850.7 271.9 L851.3 272.5 L851.9 271.8 L852.5 275.0 L853.0 279.1 L853.6 279.8 L854.2 284.1 L854.7 286.9 L855.3 285.4 L855.9 293.3 L856.4 289.5 L857.0 290.1 L857.5 292.7 L858.1 293.1 L858.6 290.9 L859.2 294.6 L859.7 294.9 L860.2 296.6 L860.8 297.2 L861.3 297.1 L861.8 298.7 L862.4 296.6 L862.9 296.0 L863.4 297.3 L864.0 308.4 L864.5 296.7 L865.0 299.8 L865.5 297.2 L866.0 298.2 L866.6 298.1 L867.1 297.7 L867.6 296.4 L868.1 295.7 L868.6 298.9 L869.1 298.6 L869.6 313.4 L870.1 301.7 L870.6 303.6 L871.1 315.0 L871.6 304.0 L872.1 308.8 L872.6 305.7 L873.1 305.2 L873.6 302.8 L874.1 303.0 L874.6 300.8 L875.1 301.0 L875.5 299.0 L876.0 298.9 L876.5 298.3 L877.0 302.2 L877.5 313.4 L877.9 307.1 L878.4 310.6 L878.9 310.5 L879.3 311.6 L879.8 315.8 L880.3 314.9 L880.8 313.7 L881.2 311.9 L881.7 313.9 L882.1 312.7 L882.6 308.9 L883.1 309.8 L883.5 306.2 L884.0 308.6 L884.4 307.7 L884.9 308.4 L885.3 306.0 L885.8 310.0 L886.2 306.2 L886.7 306.0 L887.1 311.3 L887.6 309.2 L888.0 304.4 L888.4 305.4 L888.9 304.3 L889.3 306.0 L889.7 307.8 L890.2 305.0 L890.6 306.1 L891.0 308.0 L891.5 305.2 L891.9 308.7 L892.3 306.2 L892.8 305.6 L893.2 303.5 L893.6 304.6 L894.0 305.9 L894.5 309.0 L894.9 306.3 L895.3 304.4 L895.7 306.0 L896.1 307.9 L896.5 303.1 L897.0 305.9 L897.4 307.7 L897.8 305.0 L898.2 307.7 L898.6 305.1 L899.0 304.3 L899.4 306.9 L899.8 302.7 L900.2 306.5 L900.6 306.9 L901.0 311.3 L901.4 310.5 L901.8 311.7 L902.2 312.6 L902.6 311.6 L903.0 315.7 L903.4 316.8 L903.8 321.5 L904.2 316.8 L904.6 320.4 L905.0 319.0 L905.4 319.1 L905.8 316.6 L906.1 315.2 L906.5 318.5 L906.9 315.8 L907.3 315.2 L907.7 314.7 L908.1 312.1 L908.4 313.0 L908.8 317.1 L909.2 315.2 L909.6 313.5 L910.0 317.0 L910.3 316.9 L910.7 314.6 L911.1 313.3 L911.5 313.9 L911.8 314.7 L912.2 313.7 L912.6 315.6 L912.9 314.5 L913.3 316.9 L913.7 319.0 L914.0 319.2 L914.4 317.7 L914.8 319.2 L915.1 318.4 L915.5 317.8 L915.8 318.7 L916.2 321.1 L916.6 318.0 L916.9 317.7 L917.3 317.4 L917.6 317.9 L918.0 318.2 L918.3 316.8 L918.7 315.3 L919.0 316.4 L919.4 318.0 L919.7 328.1 L920.1 317.8 L920.4 317.8 L920.8 319.8 L921.1 316.6 L921.5 320.0 L921.8 317.7 L922.2 320.2 L922.5 322.0 L922.9 321.1 L923.2 321.9 L923.5 320.1 L923.9 321.1 L924.2 322.0 L924.6 321.3 L924.9 317.1 L925.2 319.3 L925.6 315.5 L925.9 317.6 L926.2 314.2 L926.6 326.0 L926.9 312.5 L927.2 311.3 L927.6 310.9 L927.9 309.2 L928.2 312.1 L928.6 310.0 L928.9 310.7 L929.2 315.4 L929.5 334.7 L929.9 312.6 L930.2 314.0 L930.5 318.7 L930.8 319.3 L931.2 318.4 L931.5 320.9 L931.8 321.5 L932.1 324.8 L932.4 319.5 L932.8 317.4 L933.1 317.7 L933.4 319.2 L933.7 314.8 L934.0 315.1 L934.3 315.7 L934.7 313.3 L935.0 311.3 L935.3 316.1 L935.6 313.7 L935.9 310.2 L936.2 310.4 L936.5 311.7 L936.8 309.2 L937.2 310.2 L937.5 311.7 L937.8 311.5 L938.1 310.4 L938.4 313.1 L938.7 313.8 L939.0 309.4 L939.3 307.5 L939.6 311.1 L939.9 310.5 L940.2 313.8 L940.5 312.0 L940.8 313.5 L941.1 326.6 L941.4 316.8 L941.7 318.5 L942.0 316.7 L942.3 321.0 L942.6 319.3 L942.9 322.1 L943.2 320.6 L943.5 321.4 L943.8 321.8 L944.1 324.5 L944.4 324.1 L944.7 325.3 L944.9 322.9 L945.2 324.8 L945.5 325.7 L945.8 325.4 L946.1 326.1 L946.4 326.6 L946.7 323.8 L947.0 325.7 L947.3 324.8 L947.5 323.6 L947.8 328.4 L948.1 327.2 L948.4 326.4 L948.7 325.5 L949.0 326.1 L949.3 321.6 L949.5 325.8 L949.8 322.7 L950.1 324.7 L950.4 324.8 L950.7 323.3 L950.9 320.8 L951.2 320.7 L951.5 322.0 L951.8 322.4" fill="none" stroke="#0000FF" stroke-width="2" shape-rendering="crispEdges"/><path d="M470.4 297.5 L479.3 296.4 L487.7 293.7 L495.5 297.3 L503.0 295.7 L510.0 297.8 L516.7 296.9 L523.1 304.2 L529.2 301.9 L535.1 303.4 L540.7 306.9 L546.1 310.0 L551.3 304.0 L556.3 299.6 L561.1 311.1 L565.8 312.7 L570.3 309.8 L574.7 314.9 L578.9 306.2 L583.0 296.4 L587.0 296.6 L590.9 284.0 L594.7 270.6 L598.3 264.4 L601.9 265.0 L605.4 275.9 L608.8 268.2 L612.1 279.5 L615.3 285.9 L618.5 276.9 L621.6 267.2 L624.6 267.4 L627.6 257.8 L630.5 252.0 L633.3 260.7 L636.1 277.4 L638.8 282.6 L641.5 287.5 L644.1 295.6 L646.7 293.6 L649.2 288.0 L651.7 290.7 L654.1 276.9 L656.5 266.3 L658.9 258.6 L661.2 258.2 L663.4 265.2 L665.7 270.7 L667.9 281.2 L670.0 283.5 L672.2 288.4 L674.3 293.8 L676.3 295.9 L678.4 294.9 L680.4 291.5 L682.4 289.7 L684.3 286.9 L686.2 286.1 L688.1 289.0 L690.0 279.7 L691.9 274.6 L693.7 274.9 L695.5 280.1 L697.3 277.7 L699.0 275.5 L700.7 274.0 L702.5 269.0 L704.1 264.6 L705.8 268.2 L707.5 272.8 L709.1 270.0 L710.7 270.8 L712.3 272.3 L713.9 271.7 L715.4 271.4 L716.9 263.5 L718.5 264.1 L720.0 261.8 L721.5 265.4 L722.9 265.0 L724.4 263.9 L725.8 268.1 L727.3 271.6 L728.7 269.6 L730.1 275.2 L731.4 279.4 L732.8 281.2 L734.2 286.7 L735.5 287.9 L736.8 288.4 L738.2 287.7 L739.5 288.2 L740.8 297.5 L742.0 286.3 L743.3 286.6 L744.6 284.9 L745.8 281.5 L747.0 277.8 L748.3 282.1 L749.5 274.8 L750.7 271.7 L751.9 268.5 L753.0 267.9 L754.2 269.5 L755.4 273.2 L756.5 269.7 L757.7 267.6 L758.8 267.1 L759.9 267.5 L761.0 264.5 L762.1 261.8 L763.2 259.5 L764.3 258.3 L765.4 263.2 L766.5 280.1 L767.5 271.3 L768.6 273.1 L769.6 274.0 L770.7 273.6 L771.7 273.7 L772.7 274.6 L773.8 271.5 L774.8 271.1 L775.8 273.0 L776.8 269.0 L777.7 272.1 L778.7 272.2 L779.7 272.2 L780.7 274.8 L781.6 273.8 L782.6 272.5 L783.5 274.9 L784.5 273.0 L785.4 274.0 L786.3 274.8 L787.2 274.5 L788.1 276.2 L789.1 277.7 L790.0 279.2 L790.9 277.4 L791.7 282.4 L792.6 281.2 L793.5 281.4 L794.4 281.6 L795.2 280.2 L796.1 280.9 L797.0 281.3 L797.8 285.1 L798.7 289.8 L799.5 289.2 L800.3 292.5 L801.2 290.8 L802.0 288.6 L802.8 283.8 L803.6 283.4 L804.5 286.4 L805.3 283.6 L806.1 286.7 L806.9 285.0 L807.7 288.9 L808.4 288.8 L809.2 291.8 L810.0 293.6 L810.8 295.0 L811.5 295.3 L812.3 298.5 L813.1 299.9 L813.8 299.6 L814.6 301.3 L815.3 300.5 L816.1 305.1 L816.8 302.2 L817.6 300.7 L818.3 302.7 L819.0 300.9 L819.8 301.9 L820.5 300.7 L821.2 302.3 L821.9 297.8 L822.6 297.6 L823.3 294.0 L824.0 294.7 L824.7 299.4 L825.4 297.3 L826.1 296.9 L826.8 296.3 L827.5 296.5 L828.2 297.0 L828.9 293.2 L829.5 297.4 L830.2 300.0 L830.9 299.1 L831.5 303.4 L832.2 298.8 L832.9 299.9 L833.5 298.1 L834.2 300.8 L834.8 299.5 L835.5 297.5 L836.1 298.4 L836.8 299.6 L837.4 299.3 L838.0 301.6 L838.7 302.3 L839.3 302.4 L839.9 305.0 L840.5 307.7 L841.2 305.3 L841.8 308.4 L842.4 308.4 L843.0 311.4 L843.6 310.8 L844.2 310.0 L844.8 307.8 L845.4 306.9 L846.0 306.0 L846.6 306.0 L847.2 304.1 L847.8 304.7 L848.4 300.3 L849.0 304.8 L849.6 303.9 L850.2 302.5 L850.7 305.7 L851.3 301.9 L851.9 303.8 L852.5 304.2 L853.0 304.4 L853.6 305.6 L854.2 307.6 L854.7 308.7 L855.3 310.4 L855.9 311.0 L856.4 311.6 L857.0 308.0 L857.5 311.5 L858.1 308.0 L858.6 308.4 L859.2 307.1 L859.7 305.2 L860.2 308.4 L860.8 307.6 L861.3 311.3 L861.8 309.8 L862.4 310.6 L862.9 311.5 L863.4 310.9 L864.0 311.8 L864.5 314.6 L865.0 316.0 L865.5 314.3 L866.0 314.1 L866.6 314.2 L867.1 310.5 L867.6 312.4 L868.1 314.2 L868.6 311.8 L869.1 311.4 L869.6 312.1 L870.1 309.3 L870.6 311.5 L871.1 307.7 L871.6 305.9 L872.1 306.3 L872.6 308.4 L873.1 306.8 L873.6 306.4 L874.1 310.0 L874.6 306.5 L875.1 307.5 L875.5 307.3 L876.0 307.1 L876.5 307.6 L877.0 305.8 L877.5 306.1 L877.9 305.7 L878.4 304.3 L878.9 305.4 L879.3 304.4 L879.8 305.4 L880.3 304.0 L880.8 305.2 L881.2 309.3 L881.7 305.4 L882.1 305.7 L882.6 309.9 L883.1 307.6 L883.5 310.3 L884.0 309.8 L884.4 312.4 L884.9 312.6 L885.3 313.2 L885.8 314.8 L886.2 315.2 L886.7 316.8 L887.1 318.7 L887.6 319.2 L888.0 319.7 L888.4 321.8 L888.9 319.7 L889.3 316.2 L889.7 313.6 L890.2 314.4 L890.6 310.4 L891.0 309.4 L891.5 314.2 L891.9 307.4 L892.3 310.5 L892.8 310.5 L893.2 311.1 L893.6 309.9 L894.0 312.5 L894.5 311.6 L894.9 316.8 L895.3 314.0 L895.7 310.2 L896.1 314.0 L896.5 326.8 L897.0 317.4 L897.4 315.3 L897.8 316.6 L898.2 318.3 L898.6 337.5 L899.0 317.9 L899.4 319.4 L899.8 323.1 L900.2 320.3 L900.6 317.4 L901.0 317.1 L901.4 317.5 L901.8 317.8 L902.2 317.0 L902.6 316.5 L903.0 314.3 L903.4 312.2 L903.8 313.8 L904.2 314.3 L904.6 315.6 L905.0 319.6 L905.4 317.2 L905.8 319.0 L906.1 317.4 L906.5 321.7 L906.9 322.6 L907.3 322.3 L907.7 324.2 L908.1 324.1 L908.4 323.1 L908.8 321.3 L909.2 323.4 L909.6 321.9 L910.0 321.8 L910.3 319.7 L910.7 319.6 L911.1 317.5 L911.5 320.4 L911.8 318.8 L912.2 316.5 L912.6 318.6 L912.9 315.4 L913.3 316.7 L913.7 311.8 L914.0 312.6 L914.4 312.1 L914.8 309.4 L915.1 309.3 L915.5 309.4 L915.8 308.8 L916.2 307.7 L916.6 306.5 L916.9 309.3 L917.3 310.7 L917.6 312.3 L918.0 316.2 L918.3 313.5 L918.7 317.9 L919.0 321.6 L919.4 318.2 L919.7 320.7 L920.1 320.7 L920.4 323.5 L920.8 321.2 L921.1 321.7 L921.5 322.0 L921.8 322.5 L922.2 319.0 L922.5 317.5 L922.9 318.3 L923.2 321.8 L923.5 320.8 L923.9 322.7 L924.2 321.6 L924.6 321.9 L924.9 318.4 L925.2 319.9 L925.6 320.2 L925.9 318.8 L926.2 321.0 L926.6 319.8 L926.9 317.5 L927.2 318.9 L927.6 319.2 L927.9 320.6 L928.2 321.4 L928.6 319.3 L928.9 319.9 L929.2 319.0 L929.5 324.5 L929.9 323.8 L930.2 323.9 L930.5 320.4 L930.8 321.1 L931.2 323.3 L931.5 321.9 L931.8 320.3 L932.1 323.0 L932.4 322.1 L932.8 325.2 L933.1 323.5 L933.4 324.4 L933.7 343.4 L934.0 326.2 L934.3 325.2 L934.7 326.3 L935.0 323.2 L935.3 325.6 L935.6 326.4 L935.9 327.2 L936.2 330.1 L936.5 326.0 L936.8 322.3 L937.2 323.6 L937.5 322.6 L937.8 324.3 L938.1 323.1 L938.4 321.0 L938.7 315.9 L939.0 315.6 L939.3 316.0 L939.6 313.9 L939.9 314.3 L940.2 315.6 L940.5 311.3 L940.8 309.8 L941.1 313.6 L941.4 310.9 L941.7 312.9 L942.0 312.8 L942.3 312.9 L942.6 313.8 L942.9 312.3 L943.2 316.5 L943.5 308.7 L943.8 311.4 L944.1 312.4 L944.4 310.6 L944.7 313.0 L944.9 318.7 L945.2 316.8 L945.5 319.1 L945.8 318.9 L946.1 320.5 L946.4 317.9 L946.7 321.6 L947.0 324.5 L947.3 326.7 L947.5 322.9 L947.8 327.2 L948.1 326.3 L948.4 322.4 L948.7 326.8 L949.0 323.3 L949.3 325.3 L949.5 321.1 L949.8 322.4 L950.1 321.9 L950.4 319.4 L950.7 321.6 L950.9 319.7 L951.2 317.7 L951.5 319.4 L951.8 317.6" fill="none" stroke="#0000FF" stroke-width="2" shape-rendering="crispEdges"/><path d="M344.4 257.7 L365.6 262.2 L383.9 264.6 L400.1 270.2 L414.6 279.2 L427.8 261.6 L439.7 273.6 L450.7 260.0 L460.9 248.1 L470.4 234.1 L479.3 235.1 L487.7 234.0 L495.5 233.5 L503.0 252.9 L510.0 262.6 L516.7 269.1 L523.1 260.6 L529.2 275.2 L535.1 282.1 L540.7 305.0 L546.1 295.8 L551.3 301.8 L556.3 322.1" fill="none" stroke="#0000FF" stroke-width="2" shape-rendering="crispEdges"/><path d="M249.0 256.6 L288.6 258.7 L319.3 251.3 L344.4 246.8 L365.6 252.2 L383.9 237.5 L400.1 241.1 L414.6 241.9 L427.8 262.5 L439.7 248.2 L450.7 248.6 L460.9 256.3 L470.4 262.0 L479.3 263.6 L487.7 281.4 L495.5 286.5 L503.0 276.2 L510.0 285.5 L516.7 293.5 L523.1 299.8 L529.2 302.9" fill="none" stroke="#0000FF" stroke-width="2" shape-rendering="crispEdges"/></g><rect x="901.5" y="128.5" width="49" height="19" fill="#000" stroke="#fff" stroke-width="1" shape-rendering="crispEdges"/><rect x="903" y="134" width="21" height="2" fill="#0000FF" shape-rendering="crispEdges"/><text x="924.5" y="139" font-family="Liberation Sans" font-size="10" fill="#fff">Ch#1</text></svg>
<div class="a" style="left:40px;width:37.6px;text-align:right;top:140.2px;font-size:12.5px;line-height:12px;letter-spacing:0.4px;white-space:nowrap">-40</div>
<div class="a" style="left:40px;width:37.6px;text-align:right;top:170.8px;font-size:12.5px;line-height:12px;letter-spacing:0.4px;white-space:nowrap">-50</div>
<div class="a" style="left:40px;width:37.6px;text-align:right;top:201.4px;font-size:12.5px;line-height:12px;letter-spacing:0.4px;white-space:nowrap">-60</div>
<div class="a" style="left:40px;width:37.6px;text-align:right;top:232.0px;font-size:12.5px;line-height:12px;letter-spacing:0.4px;white-space:nowrap">-70</div>
<div class="a" style="left:40px;width:37.6px;text-align:right;top:262.6px;font-size:12.5px;line-height:12px;letter-spacing:0.4px;white-space:nowrap">-80</div>
<div class="a" style="left:40px;width:37.6px;text-align:right;top:293.2px;font-size:12.5px;line-height:12px;letter-spacing:0.4px;white-space:nowrap">-90</div>
<div class="a" style="left:40px;width:37.6px;text-align:right;top:323.8px;font-size:12.5px;line-height:12px;letter-spacing:0.4px;white-space:nowrap">-100</div>
<div class="a" style="left:40px;width:37.6px;text-align:right;top:354.4px;font-size:12.5px;line-height:12px;letter-spacing:0.4px;white-space:nowrap">-110</div>
<div class="a" style="left:40px;width:37.6px;text-align:right;top:385.0px;font-size:12.5px;line-height:12px;letter-spacing:0.4px;white-space:nowrap">-120</div>
<div class="a" style="left:40px;width:37.6px;text-align:right;top:415.6px;font-size:12.5px;line-height:12px;letter-spacing:0.4px;white-space:nowrap">-130</div>
<div class="a" style="left:40px;width:37.6px;text-align:right;top:446.2px;font-size:12.5px;line-height:12px;letter-spacing:0.4px;white-space:nowrap">-140</div>
<div class="a" style="left:80px;top:178px;width:7px;height:287px;background:#00FF00;border:1px solid #100010"></div>
<div class="a" style="left:-2px;top:303.8px;width:40px;height:15px;font-size:14px;line-height:15px;font-weight:bold;text-align:center;transform:rotate(-90deg);transform-origin:20px 7.5px;white-space:nowrap;letter-spacing:0.1px">[dB]</div>
<div class="xs" style="left:142.3px;top:471.2px">60</div>
<div class="xs" style="left:181.8px;top:471.2px">80</div>
<div class="xs" style="left:307.9px;top:471.2px">200</div>
<div class="xs" style="left:403.3px;top:471.2px">400</div>
<div class="xs" style="left:459.1px;top:471.2px">600</div>
<div class="xs" style="left:498.6px;top:471.2px">800</div>
<div class="xs" style="left:624.7px;top:471.2px">2k</div>
<div class="xs" style="left:720.1px;top:471.2px">4k</div>
<div class="xs" style="left:775.9px;top:471.2px">6k</div>
<div class="xs" style="left:815.4px;top:471.2px">8k</div>
<div class="xs" style="left:941.5px;top:471.2px">20k</div>
<div class="xb" style="left:212.9px;top:479.5px">100</div>
<div class="xb" style="left:529.8px;top:479.5px">1k</div>
<div class="xb" style="left:846.5px;top:479.5px">10k</div>
<div class="a" style="left:424px;width:200px;text-align:center;top:494.5px;font-size:12px;line-height:14px;font-weight:bold;white-space:nowrap;letter-spacing:0.55px">frequency [Hz]</div>
<div class="a" style="left:8px;top:487px;width:73px;height:38px;background:#fff"></div>
<svg class="a" style="left:8px;top:487px" width="73" height="28" shape-rendering="crispEdges"><rect x="1" y="16" width="1" height="7" fill="#FF3333"/><rect x="2" y="16" width="1" height="7" fill="#FF3333"/><rect x="3" y="17" width="1" height="8" fill="#FF3333"/><rect x="4" y="15" width="1" height="9" fill="#FF3333"/><rect x="5" y="15" width="1" height="10" fill="#FF3333"/><rect x="6" y="15" width="1" height="10" fill="#FF6A2A"/><rect x="7" y="17" width="1" height="8" fill="#FF3333"/><rect x="8" y="17" width="1" height="6" fill="#FF3333"/><rect x="9" y="17" width="1" height="6" fill="#FF3333"/><rect x="10" y="17" width="1" height="6" fill="#FF3333"/><rect x="11" y="15" width="1" height="11" fill="#FF3333"/><rect x="12" y="15" width="1" height="10" fill="#FF3333"/><rect x="13" y="14" width="1" height="10" fill="#FF3333"/><rect x="14" y="14" width="1" height="12" fill="#FF3333"/><rect x="15" y="15" width="1" height="10" fill="#FF3333"/><rect x="16" y="14" width="1" height="8" fill="#FF3333"/><rect x="17" y="12" width="1" height="7" fill="#FF3333"/><rect x="18" y="12" width="1" height="8" fill="#FF3333"/><rect x="19" y="12" width="1" height="6" fill="#FF3333"/><rect x="20" y="11" width="1" height="8" fill="#FF3333"/><rect x="21" y="10" width="1" height="6" fill="#FF3333"/><rect x="22" y="11" width="1" height="5" fill="#FF3333"/><rect x="23" y="9" width="1" height="10" fill="#FF3333"/><rect x="24" y="9" width="1" height="12" fill="#FF3333"/><rect x="25" y="9" width="1" height="13" fill="#FF3333"/><rect x="26" y="12" width="1" height="11" fill="#FF3333"/><rect x="27" y="12" width="1" height="11" fill="#FF6A2A"/><rect x="28" y="13" width="1" height="11" fill="#FF3333"/><rect x="29" y="12" width="1" height="11" fill="#FF3333"/><rect x="30" y="13" width="1" height="9" fill="#FF3333"/><rect x="31" y="14" width="1" height="8" fill="#FF3333"/><rect x="32" y="12" width="1" height="9" fill="#FF3333"/><rect x="33" y="12" width="1" height="8" fill="#FF6A2A"/><rect x="34" y="11" width="1" height="11" fill="#FF3333"/><rect x="35" y="10" width="1" height="10" fill="#FF3333"/><rect x="36" y="7" width="1" height="13" fill="#FF3333"/><rect x="37" y="6" width="1" height="13" fill="#FF3333"/><rect x="38" y="8" width="1" height="11" fill="#FF3333"/><rect x="39" y="6" width="1" height="13" fill="#FF3333"/><rect x="40" y="6" width="1" height="11" fill="#FF3333"/><rect x="41" y="6" width="1" height="13" fill="#FF3333"/><rect x="42" y="4" width="1" height="13" fill="#FF3333"/><rect x="43" y="4" width="1" height="11" fill="#FF3333"/><rect x="44" y="1" width="1" height="13" fill="#FF6A2A"/><rect x="45" y="4" width="1" height="12" fill="#FF6A2A"/><rect x="46" y="5" width="1" height="11" fill="#FF3333"/><rect x="47" y="6" width="1" height="11" fill="#FF3333"/><rect x="48" y="8" width="1" height="10" fill="#FF3333"/><rect x="49" y="7" width="1" height="8" fill="#FF6A2A"/><rect x="50" y="9" width="1" height="6" fill="#FF3333"/><rect x="51" y="10" width="1" height="5" fill="#FF3333"/><rect x="52" y="10" width="1" height="7" fill="#FF3333"/><rect x="53" y="11" width="1" height="6" fill="#FF3333"/><rect x="54" y="12" width="1" height="8" fill="#FF6A2A"/><rect x="55" y="13" width="1" height="10" fill="#FF3333"/><rect x="56" y="12" width="1" height="10" fill="#FF3333"/><rect x="57" y="9" width="1" height="14" fill="#FF3333"/><rect x="58" y="10" width="1" height="11" fill="#FF3333"/><rect x="59" y="9" width="1" height="11" fill="#FF3333"/><rect x="60" y="9" width="1" height="11" fill="#FF3333"/><rect x="61" y="10" width="1" height="9" fill="#FF3333"/><rect x="62" y="10" width="1" height="8" fill="#FF3333"/><rect x="63" y="12" width="1" height="7" fill="#FF3333"/><rect x="64" y="13" width="1" height="6" fill="#FF3333"/><rect x="65" y="13" width="1" height="7" fill="#FF3333"/><rect x="66" y="13" width="1" height="7" fill="#FF3333"/><rect x="67" y="12" width="1" height="9" fill="#FF6A2A"/><rect x="68" y="12" width="1" height="12" fill="#FF3333"/><rect x="69" y="13" width="1" height="8" fill="#FF3333"/><rect x="70" y="14" width="1" height="8" fill="#FF3333"/><rect x="71" y="15" width="1" height="5" fill="#FF6A2A"/><rect x="72" y="15" width="1" height="5" fill="#FF3333"/></svg>
<div class="a" style="left:8px;top:513px;width:73px;text-align:center;font-size:10px;line-height:11px;color:#000;white-space:nowrap;letter-spacing:-0.45px">Dr-Jordan-Design</div>
<div class="a" style="left:6.8px;top:530px;font-size:11px;line-height:13px">Ready</div>
<div class="sp" style="left:641px;width:42px"></div>
<div class="a" style="left:640.5px;top:530px;width:42px;text-align:left;padding-left:2px;font-size:11px;line-height:14px;white-space:nowrap;letter-spacing:0px">44100</div>
<div class="sp" style="left:685px;width:60px"></div>
<div class="a" style="left:683.2px;top:530px;width:60px;text-align:center;padding-left:2px;font-size:11px;line-height:14px;white-space:nowrap;letter-spacing:0px">1024</div>
<div class="sp" style="left:747px;width:42px"></div>
<div class="a" style="left:745.2px;top:530px;width:42px;text-align:left;padding-left:2px;font-size:11px;line-height:14px;white-space:nowrap;letter-spacing:0px">23ms</div>
<div class="sp" style="left:791px;width:54px"></div>
<div class="a" style="left:792px;top:530px;width:54px;text-align:left;padding-left:2px;font-size:11px;line-height:14px;white-space:nowrap;letter-spacing:0px"></div>
<div class="sp" style="left:847px;width:88px"></div>
<div class="a" style="left:844.4px;top:530px;width:88px;text-align:left;padding-left:2px;font-size:11px;line-height:14px;white-space:nowrap;letter-spacing:-0.3px">Blackman</div>
<svg class="a" style="left:937px;top:528px" width="18" height="18"><g stroke-linecap="square"><path d="M15.5 3.5 L3.5 15.5 M15.5 7.5 L7.5 15.5 M15.5 11.5 L11.5 15.5" stroke="#fff" stroke-width="1.2"/><path d="M15.8 4.8 L4.8 15.8 M15.8 8.8 L8.8 15.8 M15.8 12.8 L12.8 15.8" stroke="#A09C8C" stroke-width="1.5"/></g></svg>
<div class="a" style="left:4px;top:546px;width:952px;height:1px;background:#FFFFFF"></div>
<div class="a" style="left:955px;top:117px;width:1px;height:430px;background:#FFFFFF"></div>
</body></html>
